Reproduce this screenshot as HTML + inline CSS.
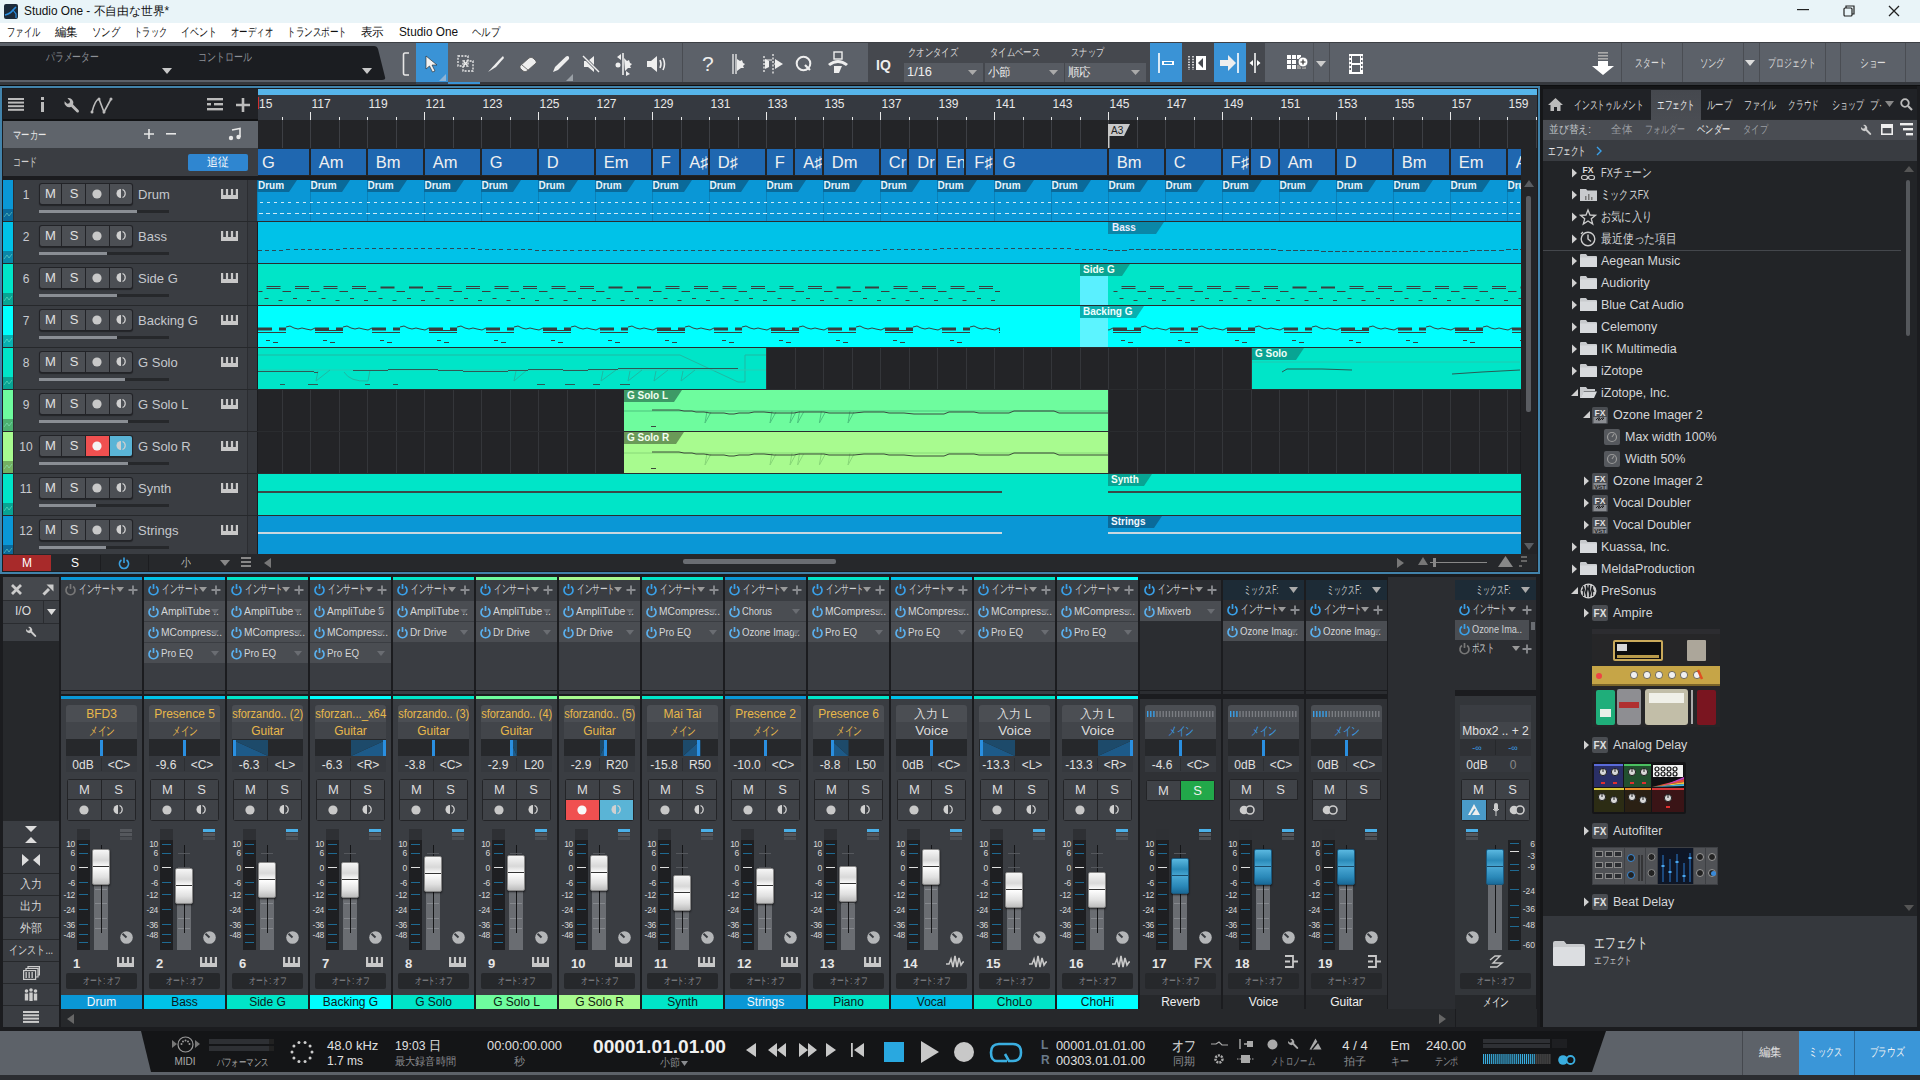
<!DOCTYPE html><html><head><meta charset="utf-8"><style>
html,body{margin:0;padding:0;width:1920px;height:1080px;overflow:hidden;background:#2b2d31;font-family:"Liberation Sans",sans-serif;}
div{position:absolute;box-sizing:border-box;}
.t{white-space:nowrap;line-height:1;}
svg{position:absolute;overflow:visible;}
</style></head><body>
<div style="left:0px;top:0px;width:1920px;height:23px;background:#e9f4f8;"></div>
<div style="left:4px;top:4px;width:14px;height:15px;background:#1d2a3a;border-radius:2px;"></div>
<svg style="left:4px;top:4px" width="14" height="15" viewBox="0 0 14 15"><path d="M1 11 Q6 10 9 6 L12 3" stroke="#2a8ee0" stroke-width="1.6" fill="none"/><path d="M9 6 L12 10 L12 14" stroke="#2a8ee0" stroke-width="1.2" fill="none"/></svg>
<div class="t" style="left:24px;top:5px;font-size:12px;color:#111;transform:scaleX(0.984);transform-origin:0 0;">Studio One - 不自由な世界*</div>
<svg style="left:1797px;top:9px" width="12" height="2" viewBox="0 0 12 2"><rect width="12" height="1.2" fill="#222"/></svg>
<svg style="left:1843px;top:5px" width="12" height="12" viewBox="0 0 12 12"><rect x="1" y="3" width="8" height="8" stroke="#222" fill="none" stroke-width="1.2" rx="1"/><path d="M3 3 V1 H11 V9 H9" stroke="#222" fill="none" stroke-width="1.2"/></svg>
<svg style="left:1888px;top:5px" width="12" height="12" viewBox="0 0 12 12"><path d="M1 1 L11 11 M11 1 L1 11" stroke="#222" stroke-width="1.3"/></svg>
<div style="left:0px;top:23px;width:1920px;height:19px;background:#ffffff;"></div>
<div class="t" style="left:7px;top:26px;font-size:12px;color:#111;transform:scaleX(0.688);transform-origin:0 0;">ファイル</div>
<div class="t" style="left:55px;top:26px;font-size:12px;color:#111;transform:scaleX(0.958);transform-origin:0 0;">編集</div>
<div class="t" style="left:92px;top:26px;font-size:12px;color:#111;transform:scaleX(0.778);transform-origin:0 0;">ソング</div>
<div class="t" style="left:134px;top:26px;font-size:12px;color:#111;transform:scaleX(0.688);transform-origin:0 0;">トラック</div>
<div class="t" style="left:181px;top:26px;font-size:12px;color:#111;transform:scaleX(0.750);transform-origin:0 0;">イベント</div>
<div class="t" style="left:231px;top:26px;font-size:12px;color:#111;transform:scaleX(0.700);transform-origin:0 0;">オーディオ</div>
<div class="t" style="left:287px;top:26px;font-size:12px;color:#111;transform:scaleX(0.714);transform-origin:0 0;">トランスポート</div>
<div class="t" style="left:361px;top:26px;font-size:12px;color:#111;transform:scaleX(0.958);transform-origin:0 0;">表示</div>
<div class="t" style="left:399px;top:26px;font-size:12px;color:#111;transform:scaleX(0.983);transform-origin:0 0;">Studio One</div>
<div class="t" style="left:472px;top:26px;font-size:12px;color:#111;transform:scaleX(0.778);transform-origin:0 0;">ヘルプ</div>
<div style="left:0px;top:42px;width:1920px;height:44px;background:#5c6169;"></div>
<div style="left:0px;top:42px;width:1920px;height:1px;background:#3d4045;"></div>
<div style="left:0px;top:82px;width:1920px;height:3px;background:#35383d;"></div>
<div style="left:0px;top:85px;width:1920px;height:1px;background:#0e0f10;"></div>
<svg style="left:0px;top:46px" width="390" height="34" viewBox="0 0 390 34"><path d="M0 0 H374 Q377 0 378 3 L385 31 Q386 34 382 34 H0 Z" fill="#1b1d21"/></svg>
<div class="t" style="left:46px;top:51px;font-size:12px;color:#8d9096;transform:scaleX(0.736);transform-origin:0 0;">パラメーター</div>
<div class="t" style="left:198px;top:51px;font-size:12px;color:#8d9096;transform:scaleX(0.750);transform-origin:0 0;">コントロール</div>
<svg style="left:162px;top:68px" width="10" height="6" viewBox="0 0 10 6"><path d="M0 0 H10 L5.0 6Z" fill="#c8c8c8"/></svg>
<svg style="left:362px;top:68px" width="10" height="6" viewBox="0 0 10 6"><path d="M0 0 H10 L5.0 6Z" fill="#c8c8c8"/></svg>
<svg style="left:402px;top:52px" width="8" height="24" viewBox="0 0 8 24"><path d="M7 1 H3 Q1.5 1 1.5 3 V21 Q1.5 23 3 23 H7" stroke="#e6e6e6" stroke-width="1.6" fill="none"/></svg>
<div style="left:416px;top:43px;width:32px;height:39px;background:#3a93d6;"></div>
<svg style="left:425px;top:55px" width="14" height="18" viewBox="0 0 14 18"><path d="M1 1 L1 14 L4.5 11 L7.5 17 L10 16 L7 10 L12 10 Z" fill="#f2f2f2" stroke="#222" stroke-width="0.6"/></svg>
<svg style="left:439px;top:74px" width="7" height="7" viewBox="0 0 7 7"><path d="M7 0 V7 H0Z" fill="#8fb4d6"/></svg>
<div style="left:416px;top:82px;width:32px;height:2px;background:#2f4a63;"></div>
<div style="left:448px;top:82px;width:32px;height:2px;background:#3a93d6;"></div>
<svg style="left:457px;top:55px" width="17" height="17" viewBox="0 0 17 17"><rect x="1" y="1" width="10" height="10" stroke="#eee" stroke-width="1.3" stroke-dasharray="2 1.3" fill="none"/><rect x="6" y="6" width="10" height="10" stroke="#eee" stroke-width="1.3" stroke-dasharray="2 1.3" fill="none"/><path d="M7 7 L10 10 M10 7 L7 10" stroke="#eee" stroke-width="1.6"/></svg>
<svg style="left:487px;top:55px" width="18" height="18" viewBox="0 0 18 18"><path d="M1 17 L12 5 L16 1 L17 3 L9 12 Z" fill="#eee"/></svg>
<svg style="left:519px;top:55px" width="18" height="18" viewBox="0 0 18 18"><path d="M1 11 L10 3 Q12 1.5 14 3 L17 6 Q18 8 16 9 L8 16 Q6 17.5 4 16 L1.5 13.5 Q0.5 12 1 11Z" fill="#eee" stroke="#555" stroke-width="0.8"/><path d="M3 10 L9 15" stroke="#777" stroke-width="1"/></svg>
<svg style="left:552px;top:55px" width="18" height="18" viewBox="0 0 18 18"><path d="M1 17 L3 12 L14 1.5 Q16 0.5 17 2 Q17.5 3.5 16.5 4.5 L6 15Z" fill="#eee"/></svg>
<svg style="left:566px;top:74px" width="7" height="7" viewBox="0 0 7 7"><path d="M7 0 V7 H0Z" fill="#9aa0a6"/></svg>
<svg style="left:582px;top:54px" width="18" height="20" viewBox="0 0 18 20"><path d="M2 7 H6 L12 2 V18 L6 13 H2Z" fill="#eee"/><path d="M1 2 L17 18" stroke="#5c6169" stroke-width="3"/><path d="M1 2 L17 18" stroke="#eee" stroke-width="1.4"/></svg>
<svg style="left:612px;top:52px" width="22" height="24" viewBox="0 0 22 24"><path d="M11 1 V23" stroke="#eee" stroke-width="1.6"/><path d="M12 6 L15 9 L17 8 L18 11 L20 12 L18 14 L19 16 L16 16 L13 19 Z" fill="#eee"/><circle cx="6" cy="13" r="2.5" fill="#eee"/><path d="M9 2 L5 5 L9 8Z M14 19 L18 22 L14 24Z" fill="#eee"/></svg>
<svg style="left:646px;top:55px" width="20" height="18" viewBox="0 0 20 18"><path d="M1 6 H5 L11 1 V17 L5 12 H1Z" fill="#eee"/><path d="M14 5 Q16 9 14 13 M17 3 Q20 9 17 15" stroke="#eee" stroke-width="1.6" fill="none"/></svg>
<div style="left:682px;top:43px;width:1px;height:39px;background:#494c52;"></div>
<div class="t" style="left:702px;top:53px;font-size:21px;color:#eee;font-weight:normal;">?</div>
<svg style="left:731px;top:53px" width="20" height="22" viewBox="0 0 20 22"><path d="M2 1 V21 M5 1 V21" stroke="#eee" stroke-width="1.3"/><path d="M6 6 L9 8 L11 7 L12 10 L14 11 L12 13 L13 15 L10 15 L6 18Z" fill="#eee"/></svg>
<svg style="left:761px;top:53px" width="24" height="22" viewBox="0 0 24 22"><path d="M3 3 V19 M12 1 V21" stroke="#eee" stroke-width="1.3" stroke-dasharray="2 1.5"/><path d="M4 7 H11 M13 11 H20" stroke="#eee" stroke-width="1.2"/><path d="M4 6 L8 8 L8 14 L4 16Z M14 6 L22 11 L14 16Z" fill="#eee"/></svg>
<svg style="left:795px;top:55px" width="18" height="18" viewBox="0 0 18 18"><circle cx="8.5" cy="8.5" r="6.8" stroke="#eee" stroke-width="2" fill="none"/><path d="M10 10 L15 15" stroke="#eee" stroke-width="2.2"/></svg>
<svg style="left:827px;top:51px" width="22" height="26" viewBox="0 0 22 26"><rect x="7" y="1" width="8" height="7" stroke="#eee" stroke-width="1.4" fill="none"/><path d="M1 13 Q11 5 21 13 L19 15 Q11 9 3 15Z" fill="#eee"/><path d="M7 15 H15 L12 22 H7Z" fill="#eee"/></svg>
<div style="left:868px;top:43px;width:282px;height:39px;background:#45484e;"></div>
<div class="t" style="left:876px;top:58px;font-size:14px;color:#eee;font-weight:bold;">IQ</div>
<div class="t" style="left:908px;top:47px;font-size:11px;color:#ddd;transform:scaleX(0.758);transform-origin:0 0;">クオンタイズ</div>
<div class="t" style="left:990px;top:47px;font-size:11px;color:#ddd;transform:scaleX(0.758);transform-origin:0 0;">タイムベース</div>
<div class="t" style="left:1071px;top:47px;font-size:11px;color:#ddd;transform:scaleX(0.750);transform-origin:0 0;">スナップ</div>
<div style="left:904px;top:63px;width:79px;height:19px;background:#575b62;"></div>
<div class="t" style="left:907px;top:66px;font-size:12px;color:#eee;transform:scaleX(1.070);transform-origin:0 0;">1/16</div>
<svg style="left:968px;top:70px" width="9" height="5" viewBox="0 0 9 5"><path d="M0 0 H9 L4.5 5Z" fill="#aaa"/></svg>
<div style="left:985px;top:63px;width:79px;height:19px;background:#575b62;"></div>
<div class="t" style="left:988px;top:66px;font-size:12px;color:#eee;transform:scaleX(0.958);transform-origin:0 0;">小節</div>
<svg style="left:1049px;top:70px" width="9" height="5" viewBox="0 0 9 5"><path d="M0 0 H9 L4.5 5Z" fill="#aaa"/></svg>
<div style="left:1065px;top:63px;width:81px;height:19px;background:#575b62;"></div>
<div class="t" style="left:1068px;top:66px;font-size:12px;color:#eee;transform:scaleX(0.958);transform-origin:0 0;">順応</div>
<svg style="left:1131px;top:70px" width="9" height="5" viewBox="0 0 9 5"><path d="M0 0 H9 L4.5 5Z" fill="#aaa"/></svg>
<div style="left:1150px;top:43px;width:32px;height:39px;background:#3a93d6;"></div>
<svg style="left:1157px;top:52px" width="18" height="22" viewBox="0 0 18 22"><path d="M2 1 V21" stroke="#fff" stroke-width="1.6"/><rect x="5" y="9" width="12" height="4" fill="#fff"/><rect x="7" y="10" width="8" height="2" fill="#3a93d6"/></svg>
<div style="left:1182px;top:43px;width:32px;height:39px;background:#45484e;"></div>
<svg style="left:1187px;top:55px" width="20" height="16" viewBox="0 0 20 16"><path d="M2 1 V15 M6 1 V15" stroke="#fff" stroke-width="1.4" stroke-dasharray="1.5 1.2"/><rect x="9" y="1" width="10" height="14" fill="#fff"/><path d="M16 3 L11 8 L16 13Z" fill="#45484e"/></svg>
<div style="left:1214px;top:43px;width:32px;height:39px;background:#3a93d6;"></div>
<svg style="left:1219px;top:52px" width="22" height="22" viewBox="0 0 22 22"><path d="M19 1 V21" stroke="#fff" stroke-width="1.6"/><path d="M1 8 H9 V3 L17 11 L9 19 V14 H1Z" fill="#eee"/></svg>
<div style="left:1246px;top:43px;width:19px;height:39px;background:#45484e;"></div>
<svg style="left:1249px;top:52px" width="12" height="22" viewBox="0 0 12 22"><path d="M6 1 V21" stroke="#fff" stroke-width="1.5"/><path d="M4 8 L0.5 11 L4 14Z M8 8 L11.5 11 L8 14Z" fill="#fff"/></svg>
<svg style="left:1286px;top:54px" width="24" height="18" viewBox="0 0 24 18"><g fill="#fff"><rect x="1" y="1" width="4" height="4"/><rect x="6" y="1" width="4" height="4"/><rect x="11" y="1" width="4" height="4"/><rect x="1" y="6" width="4" height="4"/><rect x="6" y="6" width="4" height="4"/><rect x="1" y="11" width="4" height="4"/><rect x="6" y="11" width="4" height="4"/></g><g fill="#999"><rect x="11" y="11" width="4" height="4"/><rect x="16" y="11" width="4" height="4"/></g><circle cx="17" cy="8" r="5" fill="#fff" stroke="#5c6169" stroke-width="1"/><path d="M17 5.5 V10.5 M14.5 8 H19.5" stroke="#333" stroke-width="1.2"/></svg>
<div style="left:1313px;top:43px;width:1px;height:39px;background:#4e5258;"></div>
<svg style="left:1316px;top:61px" width="10" height="6" viewBox="0 0 10 6"><path d="M0 0 H10 L5.0 6Z" fill="#ccc"/></svg>
<div style="left:1329px;top:43px;width:1px;height:39px;background:#4a4d53;"></div>
<svg style="left:1348px;top:53px" width="16" height="22" viewBox="0 0 16 22"><rect x="1" y="1" width="14" height="20" fill="#fff"/><rect x="4" y="3" width="8" height="7" fill="#5c6169"/><rect x="4" y="12" width="8" height="7" fill="#5c6169"/><g fill="#5c6169"><rect x="1.5" y="3" width="1.5" height="2"/><rect x="1.5" y="7" width="1.5" height="2"/><rect x="1.5" y="11" width="1.5" height="2"/><rect x="1.5" y="15" width="1.5" height="2"/><rect x="13" y="3" width="1.5" height="2"/><rect x="13" y="7" width="1.5" height="2"/><rect x="13" y="11" width="1.5" height="2"/><rect x="13" y="15" width="1.5" height="2"/></g></svg>
<svg style="left:1591px;top:52px" width="24" height="24" viewBox="0 0 24 24"><g fill="#aaa"><rect x="7" y="0" width="10" height="1.6"/><rect x="7" y="3" width="10" height="1.6"/><rect x="7" y="6" width="10" height="1.6"/></g><path d="M7 9 H17 V14 H23 L12 23 L1 14 H7Z" fill="#fff"/></svg>
<div style="left:1621px;top:43px;width:1px;height:39px;background:#4a4d53;"></div>
<div style="left:1682px;top:43px;width:1px;height:39px;background:#4a4d53;"></div>
<div style="left:1743px;top:43px;width:1px;height:39px;background:#4a4d53;"></div>
<div style="left:1759px;top:43px;width:1px;height:39px;background:#4a4d53;"></div>
<div style="left:1825px;top:43px;width:1px;height:39px;background:#4a4d53;"></div>
<div style="left:1840px;top:43px;width:1px;height:39px;background:#4a4d53;"></div>
<div style="left:1905px;top:43px;width:1px;height:39px;background:#4a4d53;"></div>
<div class="t" style="left:1621.0px;top:57px;font-size:12px;color:#ddd;width:48px;left:1627.0px;transform:scaleX(0.646);transform-origin:50% 0;">スタート</div>
<div class="t" style="left:1682.0px;top:57px;font-size:12px;color:#ddd;width:36px;left:1694.0px;transform:scaleX(0.694);transform-origin:50% 0;">ソング</div>
<svg style="left:1745px;top:60px" width="10" height="6" viewBox="0 0 10 6"><path d="M0 0 H10 L5.0 6Z" fill="#ddd"/></svg>
<div class="t" style="left:1759.0px;top:57px;font-size:12px;color:#ddd;width:72px;left:1756.0px;transform:scaleX(0.653);transform-origin:50% 0;">プロジェクト</div>
<div class="t" style="left:1843.0px;top:57px;font-size:12px;color:#ddd;width:36px;left:1855.0px;transform:scaleX(0.722);transform-origin:50% 0;">ショー</div>
<div style="left:0px;top:86px;width:1540px;height:488px;background:#4283ab;"></div>
<div style="left:2px;top:88px;width:1536px;height:484px;background:#1b1c1f;"></div>
<div style="left:3px;top:89px;width:255px;height:30px;background:#202226;"></div>
<svg style="left:8px;top:98px" width="16" height="13" viewBox="0 0 16 13"><g fill="#bbb"><rect y="0" width="16" height="2"/><rect y="3.6" width="16" height="2"/><rect y="7.2" width="16" height="2"/><rect y="10.8" width="16" height="2"/></g></svg>
<svg style="left:41px;top:97px" width="4" height="15" viewBox="0 0 4 15"><rect x="0" y="0" width="3" height="3" fill="#bbb"/><rect x="0" y="5" width="3" height="10" fill="#bbb"/></svg>
<svg style="left:63px;top:97px" width="17" height="17" viewBox="0 0 17 17"><path d="M1.2 3.2 A3.6 3.6 0 0 0 6.2 7.4 L10.3 11.5 Q11.3 12.3 12 11.5 Q12.6 10.7 11.8 9.9 L7.7 5.8 A3.6 3.6 0 0 0 3.4 1 L5.4 3 L4.9 4.7 L3.2 5.2 Z" fill="#bbb" transform="scale(1.308)"/></svg>
<svg style="left:90px;top:97px" width="23" height="17" viewBox="0 0 23 17"><path d="M2 15 Q5 3 9 2 L14 15 L21 2" stroke="#bbb" stroke-width="1.6" fill="none"/><circle cx="2" cy="15" r="1.5" fill="#bbb"/><circle cx="9" cy="2" r="1.5" fill="#bbb"/><circle cx="14" cy="15" r="1.5" fill="#bbb"/><circle cx="21" cy="2" r="1.5" fill="#bbb"/></svg>
<svg style="left:207px;top:98px" width="16" height="13" viewBox="0 0 16 13"><g fill="#bbb"><rect y="0" width="16" height="2.4"/><rect y="5" width="4" height="2.4"/><rect x="7" y="5" width="9" height="2.4"/><rect y="10" width="16" height="2.4"/></g></svg>
<svg style="left:235px;top:97px" width="16" height="16" viewBox="0 0 16 16"><path d="M8 1 V15 M1 8 H15" stroke="#bbb" stroke-width="2.6"/></svg>
<div style="left:3px;top:119px;width:255px;height:2px;background:#111214;"></div>
<div style="left:3px;top:121px;width:255px;height:27px;background:#5f646b;"></div>
<div class="t" style="left:13px;top:129px;font-size:12px;color:#e6e6e6;transform:scaleX(0.688);transform-origin:0 0;">マーカー</div>
<svg style="left:143px;top:128px" width="12" height="12" viewBox="0 0 12 12"><path d="M6 1 V11 M1 6 H11" stroke="#e6e6e6" stroke-width="1.6"/></svg>
<svg style="left:166px;top:133px" width="10" height="2" viewBox="0 0 10 2"><rect width="10" height="1.6" fill="#e6e6e6"/></svg>
<svg style="left:228px;top:128px" width="14" height="12" viewBox="0 0 14 12"><path d="M4 2 L12 0.5 V9" stroke="#e6e6e6" stroke-width="1.6" fill="none"/><circle cx="3" cy="10" r="2.2" fill="#e6e6e6"/><circle cx="10.5" cy="9" r="2.2" fill="#e6e6e6"/></svg>
<div style="left:3px;top:148px;width:255px;height:28px;background:#3a3d42;"></div>
<div class="t" style="left:13px;top:156px;font-size:12px;color:#d0d0d0;transform:scaleX(0.667);transform-origin:0 0;">コード</div>
<div style="left:188px;top:154px;width:60px;height:17px;background:#2f86d0;border-radius:2px;"></div>
<div class="t" style="left:188.0px;top:156px;font-size:12px;color:#fff;width:24px;left:206.0px;transform:scaleX(0.917);transform-origin:50% 0;">追従</div>
<div style="left:3px;top:176px;width:255px;height:4px;background:#1b1c1f;"></div>
<div style="left:258px;top:89px;width:1279px;height:6px;background:#56b5ea;"></div>
<div style="left:258px;top:95px;width:1279px;height:25px;background:#353940;"></div>
<div style="left:258px;top:120px;width:1279px;height:28px;background:#232427;"></div>
<div style="left:258px;top:148px;width:1279px;height:28px;background:#232427;"></div>
<div style="left:281.5px;top:117px;width:1px;height:3px;background:#e8e8e8;"></div>
<div style="left:281.5px;top:120px;width:1px;height:28px;background:#3d3f44;"></div>
<div style="left:310.0px;top:112px;width:1px;height:8px;background:#e8e8e8;"></div>
<div style="left:310.0px;top:120px;width:1px;height:28px;background:#3d3f44;"></div>
<div class="t" style="left:311.5px;top:98px;font-size:12px;color:#e8e8e8;">117</div>
<div style="left:338.5px;top:117px;width:1px;height:3px;background:#e8e8e8;"></div>
<div style="left:338.5px;top:120px;width:1px;height:28px;background:#3d3f44;"></div>
<div style="left:367.0px;top:117px;width:1px;height:3px;background:#e8e8e8;"></div>
<div style="left:367.0px;top:120px;width:1px;height:28px;background:#3d3f44;"></div>
<div class="t" style="left:368.5px;top:98px;font-size:12px;color:#e8e8e8;">119</div>
<div style="left:395.5px;top:117px;width:1px;height:3px;background:#e8e8e8;"></div>
<div style="left:395.5px;top:120px;width:1px;height:28px;background:#3d3f44;"></div>
<div style="left:424.0px;top:112px;width:1px;height:8px;background:#e8e8e8;"></div>
<div style="left:424.0px;top:120px;width:1px;height:28px;background:#3d3f44;"></div>
<div class="t" style="left:425.5px;top:98px;font-size:12px;color:#e8e8e8;">121</div>
<div style="left:452.5px;top:117px;width:1px;height:3px;background:#e8e8e8;"></div>
<div style="left:452.5px;top:120px;width:1px;height:28px;background:#3d3f44;"></div>
<div style="left:481.0px;top:117px;width:1px;height:3px;background:#e8e8e8;"></div>
<div style="left:481.0px;top:120px;width:1px;height:28px;background:#3d3f44;"></div>
<div class="t" style="left:482.5px;top:98px;font-size:12px;color:#e8e8e8;">123</div>
<div style="left:509.5px;top:117px;width:1px;height:3px;background:#e8e8e8;"></div>
<div style="left:509.5px;top:120px;width:1px;height:28px;background:#3d3f44;"></div>
<div style="left:538.0px;top:112px;width:1px;height:8px;background:#e8e8e8;"></div>
<div style="left:538.0px;top:120px;width:1px;height:28px;background:#3d3f44;"></div>
<div class="t" style="left:539.5px;top:98px;font-size:12px;color:#e8e8e8;">125</div>
<div style="left:566.5px;top:117px;width:1px;height:3px;background:#e8e8e8;"></div>
<div style="left:566.5px;top:120px;width:1px;height:28px;background:#3d3f44;"></div>
<div style="left:595.0px;top:117px;width:1px;height:3px;background:#e8e8e8;"></div>
<div style="left:595.0px;top:120px;width:1px;height:28px;background:#3d3f44;"></div>
<div class="t" style="left:596.5px;top:98px;font-size:12px;color:#e8e8e8;">127</div>
<div style="left:623.5px;top:117px;width:1px;height:3px;background:#e8e8e8;"></div>
<div style="left:623.5px;top:120px;width:1px;height:28px;background:#3d3f44;"></div>
<div style="left:652.0px;top:112px;width:1px;height:8px;background:#e8e8e8;"></div>
<div style="left:652.0px;top:120px;width:1px;height:28px;background:#3d3f44;"></div>
<div class="t" style="left:653.5px;top:98px;font-size:12px;color:#e8e8e8;">129</div>
<div style="left:680.5px;top:117px;width:1px;height:3px;background:#e8e8e8;"></div>
<div style="left:680.5px;top:120px;width:1px;height:28px;background:#3d3f44;"></div>
<div style="left:709.0px;top:117px;width:1px;height:3px;background:#e8e8e8;"></div>
<div style="left:709.0px;top:120px;width:1px;height:28px;background:#3d3f44;"></div>
<div class="t" style="left:710.5px;top:98px;font-size:12px;color:#e8e8e8;">131</div>
<div style="left:737.5px;top:117px;width:1px;height:3px;background:#e8e8e8;"></div>
<div style="left:737.5px;top:120px;width:1px;height:28px;background:#3d3f44;"></div>
<div style="left:766.0px;top:112px;width:1px;height:8px;background:#e8e8e8;"></div>
<div style="left:766.0px;top:120px;width:1px;height:28px;background:#3d3f44;"></div>
<div class="t" style="left:767.5px;top:98px;font-size:12px;color:#e8e8e8;">133</div>
<div style="left:794.5px;top:117px;width:1px;height:3px;background:#e8e8e8;"></div>
<div style="left:794.5px;top:120px;width:1px;height:28px;background:#3d3f44;"></div>
<div style="left:823.0px;top:117px;width:1px;height:3px;background:#e8e8e8;"></div>
<div style="left:823.0px;top:120px;width:1px;height:28px;background:#3d3f44;"></div>
<div class="t" style="left:824.5px;top:98px;font-size:12px;color:#e8e8e8;">135</div>
<div style="left:851.5px;top:117px;width:1px;height:3px;background:#e8e8e8;"></div>
<div style="left:851.5px;top:120px;width:1px;height:28px;background:#3d3f44;"></div>
<div style="left:880.0px;top:112px;width:1px;height:8px;background:#e8e8e8;"></div>
<div style="left:880.0px;top:120px;width:1px;height:28px;background:#3d3f44;"></div>
<div class="t" style="left:881.5px;top:98px;font-size:12px;color:#e8e8e8;">137</div>
<div style="left:908.5px;top:117px;width:1px;height:3px;background:#e8e8e8;"></div>
<div style="left:908.5px;top:120px;width:1px;height:28px;background:#3d3f44;"></div>
<div style="left:937.0px;top:117px;width:1px;height:3px;background:#e8e8e8;"></div>
<div style="left:937.0px;top:120px;width:1px;height:28px;background:#3d3f44;"></div>
<div class="t" style="left:938.5px;top:98px;font-size:12px;color:#e8e8e8;">139</div>
<div style="left:965.5px;top:117px;width:1px;height:3px;background:#e8e8e8;"></div>
<div style="left:965.5px;top:120px;width:1px;height:28px;background:#3d3f44;"></div>
<div style="left:994.0px;top:112px;width:1px;height:8px;background:#e8e8e8;"></div>
<div style="left:994.0px;top:120px;width:1px;height:28px;background:#3d3f44;"></div>
<div class="t" style="left:995.5px;top:98px;font-size:12px;color:#e8e8e8;">141</div>
<div style="left:1022.5px;top:117px;width:1px;height:3px;background:#e8e8e8;"></div>
<div style="left:1022.5px;top:120px;width:1px;height:28px;background:#3d3f44;"></div>
<div style="left:1051.0px;top:117px;width:1px;height:3px;background:#e8e8e8;"></div>
<div style="left:1051.0px;top:120px;width:1px;height:28px;background:#3d3f44;"></div>
<div class="t" style="left:1052.5px;top:98px;font-size:12px;color:#e8e8e8;">143</div>
<div style="left:1079.5px;top:117px;width:1px;height:3px;background:#e8e8e8;"></div>
<div style="left:1079.5px;top:120px;width:1px;height:28px;background:#3d3f44;"></div>
<div style="left:1108.0px;top:112px;width:1px;height:8px;background:#e8e8e8;"></div>
<div style="left:1108.0px;top:120px;width:1px;height:28px;background:#3d3f44;"></div>
<div class="t" style="left:1109.5px;top:98px;font-size:12px;color:#e8e8e8;">145</div>
<div style="left:1136.5px;top:117px;width:1px;height:3px;background:#e8e8e8;"></div>
<div style="left:1136.5px;top:120px;width:1px;height:28px;background:#3d3f44;"></div>
<div style="left:1165.0px;top:117px;width:1px;height:3px;background:#e8e8e8;"></div>
<div style="left:1165.0px;top:120px;width:1px;height:28px;background:#3d3f44;"></div>
<div class="t" style="left:1166.5px;top:98px;font-size:12px;color:#e8e8e8;">147</div>
<div style="left:1193.5px;top:117px;width:1px;height:3px;background:#e8e8e8;"></div>
<div style="left:1193.5px;top:120px;width:1px;height:28px;background:#3d3f44;"></div>
<div style="left:1222.0px;top:112px;width:1px;height:8px;background:#e8e8e8;"></div>
<div style="left:1222.0px;top:120px;width:1px;height:28px;background:#3d3f44;"></div>
<div class="t" style="left:1223.5px;top:98px;font-size:12px;color:#e8e8e8;">149</div>
<div style="left:1250.5px;top:117px;width:1px;height:3px;background:#e8e8e8;"></div>
<div style="left:1250.5px;top:120px;width:1px;height:28px;background:#3d3f44;"></div>
<div style="left:1279.0px;top:117px;width:1px;height:3px;background:#e8e8e8;"></div>
<div style="left:1279.0px;top:120px;width:1px;height:28px;background:#3d3f44;"></div>
<div class="t" style="left:1280.5px;top:98px;font-size:12px;color:#e8e8e8;">151</div>
<div style="left:1307.5px;top:117px;width:1px;height:3px;background:#e8e8e8;"></div>
<div style="left:1307.5px;top:120px;width:1px;height:28px;background:#3d3f44;"></div>
<div style="left:1336.0px;top:112px;width:1px;height:8px;background:#e8e8e8;"></div>
<div style="left:1336.0px;top:120px;width:1px;height:28px;background:#3d3f44;"></div>
<div class="t" style="left:1337.5px;top:98px;font-size:12px;color:#e8e8e8;">153</div>
<div style="left:1364.5px;top:117px;width:1px;height:3px;background:#e8e8e8;"></div>
<div style="left:1364.5px;top:120px;width:1px;height:28px;background:#3d3f44;"></div>
<div style="left:1393.0px;top:117px;width:1px;height:3px;background:#e8e8e8;"></div>
<div style="left:1393.0px;top:120px;width:1px;height:28px;background:#3d3f44;"></div>
<div class="t" style="left:1394.5px;top:98px;font-size:12px;color:#e8e8e8;">155</div>
<div style="left:1421.5px;top:117px;width:1px;height:3px;background:#e8e8e8;"></div>
<div style="left:1421.5px;top:120px;width:1px;height:28px;background:#3d3f44;"></div>
<div style="left:1450.0px;top:112px;width:1px;height:8px;background:#e8e8e8;"></div>
<div style="left:1450.0px;top:120px;width:1px;height:28px;background:#3d3f44;"></div>
<div class="t" style="left:1451.5px;top:98px;font-size:12px;color:#e8e8e8;">157</div>
<div style="left:1478.5px;top:117px;width:1px;height:3px;background:#e8e8e8;"></div>
<div style="left:1478.5px;top:120px;width:1px;height:28px;background:#3d3f44;"></div>
<div style="left:1507.0px;top:117px;width:1px;height:3px;background:#e8e8e8;"></div>
<div style="left:1507.0px;top:120px;width:1px;height:28px;background:#3d3f44;"></div>
<div class="t" style="left:1508.5px;top:98px;font-size:12px;color:#e8e8e8;">159</div>
<div style="left:1535.5px;top:117px;width:1px;height:3px;background:#e8e8e8;"></div>
<div style="left:1535.5px;top:120px;width:1px;height:28px;background:#3d3f44;"></div>
<div class="t" style="left:259px;top:98px;font-size:12px;color:#e8e8e8;">15</div>
<div style="left:258px;top:97px;width:1px;height:12px;background:#d03030;"></div>
<svg style="left:1108px;top:122px" width="30" height="26" viewBox="0 0 30 26"><path d="M1 2 H22 L16 14 H1Z" fill="#c8c8c8"/><rect x="0" y="2" width="1.5" height="24" fill="#c8c8c8"/></svg>
<div class="t" style="left:1111px;top:126px;font-size:10px;color:#222;">A3</div>
<div style="left:258px;top:149px;width:51.0px;height:26px;background:#1f67b0;overflow:hidden;"><div class="t" style="left:4px;top:5px;font-size:16.5px;color:#f0f0f0;">G</div></div>
<div style="left:310.8px;top:149px;width:55.19999999999999px;height:26px;background:#1f67b0;overflow:hidden;"><div class="t" style="left:8px;top:5px;font-size:16.5px;color:#f0f0f0;">Am</div></div>
<div style="left:367.8px;top:149px;width:55.19999999999999px;height:26px;background:#1f67b0;overflow:hidden;"><div class="t" style="left:8px;top:5px;font-size:16.5px;color:#f0f0f0;">Bm</div></div>
<div style="left:424.8px;top:149px;width:55.19999999999999px;height:26px;background:#1f67b0;overflow:hidden;"><div class="t" style="left:8px;top:5px;font-size:16.5px;color:#f0f0f0;">Am</div></div>
<div style="left:481.8px;top:149px;width:55.19999999999999px;height:26px;background:#1f67b0;overflow:hidden;"><div class="t" style="left:8px;top:5px;font-size:16.5px;color:#f0f0f0;">G</div></div>
<div style="left:538.8px;top:149px;width:55.200000000000045px;height:26px;background:#1f67b0;overflow:hidden;"><div class="t" style="left:8px;top:5px;font-size:16.5px;color:#f0f0f0;">D</div></div>
<div style="left:595.8px;top:149px;width:55.200000000000045px;height:26px;background:#1f67b0;overflow:hidden;"><div class="t" style="left:8px;top:5px;font-size:16.5px;color:#f0f0f0;">Em</div></div>
<div style="left:652.8px;top:149px;width:26.700000000000045px;height:26px;background:#1f67b0;overflow:hidden;"><div class="t" style="left:8px;top:5px;font-size:16.5px;color:#f0f0f0;">F</div></div>
<div style="left:681.3px;top:149px;width:26.700000000000045px;height:26px;background:#1f67b0;overflow:hidden;"><div class="t" style="left:8px;top:5px;font-size:16.5px;color:#f0f0f0;">A♯</div></div>
<div style="left:709.8px;top:149px;width:55.200000000000045px;height:26px;background:#1f67b0;overflow:hidden;"><div class="t" style="left:8px;top:5px;font-size:16.5px;color:#f0f0f0;">D♯</div></div>
<div style="left:766.8px;top:149px;width:26.700000000000045px;height:26px;background:#1f67b0;overflow:hidden;"><div class="t" style="left:8px;top:5px;font-size:16.5px;color:#f0f0f0;">F</div></div>
<div style="left:795.3px;top:149px;width:26.700000000000045px;height:26px;background:#1f67b0;overflow:hidden;"><div class="t" style="left:8px;top:5px;font-size:16.5px;color:#f0f0f0;">A♯</div></div>
<div style="left:823.8px;top:149px;width:55.200000000000045px;height:26px;background:#1f67b0;overflow:hidden;"><div class="t" style="left:8px;top:5px;font-size:16.5px;color:#f0f0f0;">Dm</div></div>
<div style="left:880.8px;top:149px;width:26.700000000000045px;height:26px;background:#1f67b0;overflow:hidden;"><div class="t" style="left:8px;top:5px;font-size:16.5px;color:#f0f0f0;">Cr</div></div>
<div style="left:909.3px;top:149px;width:26.700000000000045px;height:26px;background:#1f67b0;overflow:hidden;"><div class="t" style="left:8px;top:5px;font-size:16.5px;color:#f0f0f0;">Dr</div></div>
<div style="left:937.8px;top:149px;width:26.700000000000045px;height:26px;background:#1f67b0;overflow:hidden;"><div class="t" style="left:8px;top:5px;font-size:16.5px;color:#f0f0f0;">En</div></div>
<div style="left:966.3px;top:149px;width:26.700000000000045px;height:26px;background:#1f67b0;overflow:hidden;"><div class="t" style="left:8px;top:5px;font-size:16.5px;color:#f0f0f0;">F♯</div></div>
<div style="left:994.8px;top:149px;width:112.20000000000005px;height:26px;background:#1f67b0;overflow:hidden;"><div class="t" style="left:8px;top:5px;font-size:16.5px;color:#f0f0f0;">G</div></div>
<div style="left:1108.8px;top:149px;width:55.200000000000045px;height:26px;background:#1f67b0;overflow:hidden;"><div class="t" style="left:8px;top:5px;font-size:16.5px;color:#f0f0f0;">Bm</div></div>
<div style="left:1165.8px;top:149px;width:55.200000000000045px;height:26px;background:#1f67b0;overflow:hidden;"><div class="t" style="left:8px;top:5px;font-size:16.5px;color:#f0f0f0;">C</div></div>
<div style="left:1222.8px;top:149px;width:26.700000000000045px;height:26px;background:#1f67b0;overflow:hidden;"><div class="t" style="left:8px;top:5px;font-size:16.5px;color:#f0f0f0;">F♯</div></div>
<div style="left:1251.3px;top:149px;width:26.700000000000045px;height:26px;background:#1f67b0;overflow:hidden;"><div class="t" style="left:8px;top:5px;font-size:16.5px;color:#f0f0f0;">D</div></div>
<div style="left:1279.8px;top:149px;width:55.200000000000045px;height:26px;background:#1f67b0;overflow:hidden;"><div class="t" style="left:8px;top:5px;font-size:16.5px;color:#f0f0f0;">Am</div></div>
<div style="left:1336.8px;top:149px;width:55.200000000000045px;height:26px;background:#1f67b0;overflow:hidden;"><div class="t" style="left:8px;top:5px;font-size:16.5px;color:#f0f0f0;">D</div></div>
<div style="left:1393.8px;top:149px;width:55.200000000000045px;height:26px;background:#1f67b0;overflow:hidden;"><div class="t" style="left:8px;top:5px;font-size:16.5px;color:#f0f0f0;">Bm</div></div>
<div style="left:1450.8px;top:149px;width:55.200000000000045px;height:26px;background:#1f67b0;overflow:hidden;"><div class="t" style="left:8px;top:5px;font-size:16.5px;color:#f0f0f0;">Em</div></div>
<div style="left:1507.8px;top:149px;width:13.200000000000045px;height:26px;background:#1f67b0;overflow:hidden;"><div class="t" style="left:8px;top:5px;font-size:16.5px;color:#f0f0f0;">A</div></div>
<div style="left:3px;top:180px;width:10px;height:41px;background:#0a97d6;"></div>
<div style="left:3px;top:209px;width:10px;height:12px;background:#0a6a9a;"></div>
<svg style="left:4px;top:212px" width="8" height="6" viewBox="0 0 8 6"><path d="M0 5 L3 1 L5 4 L8 0" stroke="#9fd" stroke-opacity="0.5" stroke-width="0.8" fill="none"/></svg>
<div style="left:13px;top:180px;width:1px;height:41px;background:#2a2c30;"></div>
<div style="left:14px;top:180px;width:233px;height:41px;background:#3a3d42;"></div>
<div style="left:247px;top:180px;width:1px;height:41px;background:#2b2d31;"></div>
<div style="left:248px;top:180px;width:9px;height:41px;background:#36393e;"></div>
<div style="left:257px;top:180px;width:1px;height:41px;background:#1b1c1f;"></div>
<div style="left:3px;top:221px;width:255px;height:1px;background:#26282b;"></div>
<div class="t" style="left:11.0px;top:189px;font-size:12px;color:#c8cad0;width:30px;text-align:center;">1</div>
<div style="left:38.5px;top:182.5px;width:94px;height:22px;background:#222327;border-radius:3px;box-shadow:0 1px 1px rgba(0,0,0,.4);"></div>
<div style="left:39.5px;top:183.5px;width:21.5px;height:20px;background:#4c4f54;border-radius:2px 0 0 2px;"></div>
<div style="left:62px;top:183.5px;width:23px;height:20px;background:#4c4f54;"></div>
<div style="left:86px;top:183.5px;width:23px;height:20px;background:#4c4f54;"></div>
<div style="left:110px;top:183.5px;width:21.5px;height:20px;background:#4c4f54;border-radius:0 2px 2px 0;"></div>
<div class="t" style="left:40.5px;top:187px;font-size:13px;color:#e0e0e0;width:20px;text-align:center;">M</div>
<div class="t" style="left:64.0px;top:187px;font-size:13px;color:#e0e0e0;width:20px;text-align:center;">S</div>
<svg style="left:92px;top:189px" width="10" height="10" viewBox="0 0 10 10"><circle cx="5" cy="5" r="4.6" fill="#c8c8c8"/></svg>
<svg style="left:116px;top:188px" width="10" height="11" viewBox="0 0 10 11"><path d="M5 1 A4.5 4.5 0 0 0 5 10Z" fill="#d0d0d0"/><path d="M6.5 1.5 A4.3 4.3 0 0 1 6.5 9.5" stroke="#d0d0d0" stroke-width="1.2" fill="none"/></svg>
<div class="t" style="left:138px;top:188px;font-size:13px;color:#c5c8cd;">Drum</div>
<div style="left:39px;top:210px;width:130px;height:3px;background:#26282b;"></div>
<div style="left:39px;top:210px;width:98px;height:3px;background:#8a8e94;"></div>
<svg style="left:221px;top:189px" width="17" height="10" viewBox="0 0 17 10"><path d="M0 0 H2.2 V6 H4.9 V0 H7.1 V6 H9.9 V0 H12.1 V6 H14.8 V0 H17 V10 H0Z" fill="#c8c8c8"/></svg>
<div style="left:3px;top:222px;width:10px;height:41px;background:#00c2e8;"></div>
<div style="left:3px;top:251px;width:10px;height:12px;background:#0a87a8;"></div>
<svg style="left:4px;top:254px" width="8" height="6" viewBox="0 0 8 6"><path d="M0 5 L3 1 L5 4 L8 0" stroke="#9fd" stroke-opacity="0.5" stroke-width="0.8" fill="none"/></svg>
<div style="left:13px;top:222px;width:1px;height:41px;background:#2a2c30;"></div>
<div style="left:14px;top:222px;width:233px;height:41px;background:#3a3d42;"></div>
<div style="left:247px;top:222px;width:1px;height:41px;background:#2b2d31;"></div>
<div style="left:248px;top:222px;width:9px;height:41px;background:#36393e;"></div>
<div style="left:257px;top:222px;width:1px;height:41px;background:#1b1c1f;"></div>
<div style="left:3px;top:263px;width:255px;height:1px;background:#26282b;"></div>
<div class="t" style="left:11.0px;top:231px;font-size:12px;color:#c8cad0;width:30px;text-align:center;">2</div>
<div style="left:38.5px;top:224.5px;width:94px;height:22px;background:#222327;border-radius:3px;box-shadow:0 1px 1px rgba(0,0,0,.4);"></div>
<div style="left:39.5px;top:225.5px;width:21.5px;height:20px;background:#4c4f54;border-radius:2px 0 0 2px;"></div>
<div style="left:62px;top:225.5px;width:23px;height:20px;background:#4c4f54;"></div>
<div style="left:86px;top:225.5px;width:23px;height:20px;background:#4c4f54;"></div>
<div style="left:110px;top:225.5px;width:21.5px;height:20px;background:#4c4f54;border-radius:0 2px 2px 0;"></div>
<div class="t" style="left:40.5px;top:229px;font-size:13px;color:#e0e0e0;width:20px;text-align:center;">M</div>
<div class="t" style="left:64.0px;top:229px;font-size:13px;color:#e0e0e0;width:20px;text-align:center;">S</div>
<svg style="left:92px;top:231px" width="10" height="10" viewBox="0 0 10 10"><circle cx="5" cy="5" r="4.6" fill="#c8c8c8"/></svg>
<svg style="left:116px;top:230px" width="10" height="11" viewBox="0 0 10 11"><path d="M5 1 A4.5 4.5 0 0 0 5 10Z" fill="#d0d0d0"/><path d="M6.5 1.5 A4.3 4.3 0 0 1 6.5 9.5" stroke="#d0d0d0" stroke-width="1.2" fill="none"/></svg>
<div class="t" style="left:138px;top:230px;font-size:13px;color:#c5c8cd;">Bass</div>
<div style="left:39px;top:252px;width:130px;height:3px;background:#26282b;"></div>
<div style="left:39px;top:252px;width:68px;height:3px;background:#8a8e94;"></div>
<svg style="left:221px;top:231px" width="17" height="10" viewBox="0 0 17 10"><path d="M0 0 H2.2 V6 H4.9 V0 H7.1 V6 H9.9 V0 H12.1 V6 H14.8 V0 H17 V10 H0Z" fill="#c8c8c8"/></svg>
<div style="left:3px;top:264px;width:10px;height:41px;background:#00e5c8;"></div>
<div style="left:3px;top:293px;width:10px;height:12px;background:#08a493;"></div>
<svg style="left:4px;top:296px" width="8" height="6" viewBox="0 0 8 6"><path d="M0 5 L3 1 L5 4 L8 0" stroke="#9fd" stroke-opacity="0.5" stroke-width="0.8" fill="none"/></svg>
<div style="left:13px;top:264px;width:1px;height:41px;background:#2a2c30;"></div>
<div style="left:14px;top:264px;width:233px;height:41px;background:#3a3d42;"></div>
<div style="left:247px;top:264px;width:1px;height:41px;background:#2b2d31;"></div>
<div style="left:248px;top:264px;width:9px;height:41px;background:#36393e;"></div>
<div style="left:257px;top:264px;width:1px;height:41px;background:#1b1c1f;"></div>
<div style="left:3px;top:305px;width:255px;height:1px;background:#26282b;"></div>
<div class="t" style="left:11.0px;top:273px;font-size:12px;color:#c8cad0;width:30px;text-align:center;">6</div>
<div style="left:38.5px;top:266.5px;width:94px;height:22px;background:#222327;border-radius:3px;box-shadow:0 1px 1px rgba(0,0,0,.4);"></div>
<div style="left:39.5px;top:267.5px;width:21.5px;height:20px;background:#4c4f54;border-radius:2px 0 0 2px;"></div>
<div style="left:62px;top:267.5px;width:23px;height:20px;background:#4c4f54;"></div>
<div style="left:86px;top:267.5px;width:23px;height:20px;background:#4c4f54;"></div>
<div style="left:110px;top:267.5px;width:21.5px;height:20px;background:#4c4f54;border-radius:0 2px 2px 0;"></div>
<div class="t" style="left:40.5px;top:271px;font-size:13px;color:#e0e0e0;width:20px;text-align:center;">M</div>
<div class="t" style="left:64.0px;top:271px;font-size:13px;color:#e0e0e0;width:20px;text-align:center;">S</div>
<svg style="left:92px;top:273px" width="10" height="10" viewBox="0 0 10 10"><circle cx="5" cy="5" r="4.6" fill="#c8c8c8"/></svg>
<svg style="left:116px;top:272px" width="10" height="11" viewBox="0 0 10 11"><path d="M5 1 A4.5 4.5 0 0 0 5 10Z" fill="#d0d0d0"/><path d="M6.5 1.5 A4.3 4.3 0 0 1 6.5 9.5" stroke="#d0d0d0" stroke-width="1.2" fill="none"/></svg>
<div class="t" style="left:138px;top:272px;font-size:13px;color:#c5c8cd;">Side G</div>
<div style="left:39px;top:294px;width:130px;height:3px;background:#26282b;"></div>
<div style="left:39px;top:294px;width:78px;height:3px;background:#8a8e94;"></div>
<svg style="left:221px;top:273px" width="17" height="10" viewBox="0 0 17 10"><path d="M0 0 H2.2 V6 H4.9 V0 H7.1 V6 H9.9 V0 H12.1 V6 H14.8 V0 H17 V10 H0Z" fill="#c8c8c8"/></svg>
<div style="left:3px;top:306px;width:10px;height:41px;background:#00ffff;"></div>
<div style="left:3px;top:335px;width:10px;height:12px;background:#08b0b0;"></div>
<svg style="left:4px;top:338px" width="8" height="6" viewBox="0 0 8 6"><path d="M0 5 L3 1 L5 4 L8 0" stroke="#9fd" stroke-opacity="0.5" stroke-width="0.8" fill="none"/></svg>
<div style="left:13px;top:306px;width:1px;height:41px;background:#2a2c30;"></div>
<div style="left:14px;top:306px;width:233px;height:41px;background:#3a3d42;"></div>
<div style="left:247px;top:306px;width:1px;height:41px;background:#2b2d31;"></div>
<div style="left:248px;top:306px;width:9px;height:41px;background:#36393e;"></div>
<div style="left:257px;top:306px;width:1px;height:41px;background:#1b1c1f;"></div>
<div style="left:3px;top:347px;width:255px;height:1px;background:#26282b;"></div>
<div class="t" style="left:11.0px;top:315px;font-size:12px;color:#c8cad0;width:30px;text-align:center;">7</div>
<div style="left:38.5px;top:308.5px;width:94px;height:22px;background:#222327;border-radius:3px;box-shadow:0 1px 1px rgba(0,0,0,.4);"></div>
<div style="left:39.5px;top:309.5px;width:21.5px;height:20px;background:#4c4f54;border-radius:2px 0 0 2px;"></div>
<div style="left:62px;top:309.5px;width:23px;height:20px;background:#4c4f54;"></div>
<div style="left:86px;top:309.5px;width:23px;height:20px;background:#4c4f54;"></div>
<div style="left:110px;top:309.5px;width:21.5px;height:20px;background:#4c4f54;border-radius:0 2px 2px 0;"></div>
<div class="t" style="left:40.5px;top:313px;font-size:13px;color:#e0e0e0;width:20px;text-align:center;">M</div>
<div class="t" style="left:64.0px;top:313px;font-size:13px;color:#e0e0e0;width:20px;text-align:center;">S</div>
<svg style="left:92px;top:315px" width="10" height="10" viewBox="0 0 10 10"><circle cx="5" cy="5" r="4.6" fill="#c8c8c8"/></svg>
<svg style="left:116px;top:314px" width="10" height="11" viewBox="0 0 10 11"><path d="M5 1 A4.5 4.5 0 0 0 5 10Z" fill="#d0d0d0"/><path d="M6.5 1.5 A4.3 4.3 0 0 1 6.5 9.5" stroke="#d0d0d0" stroke-width="1.2" fill="none"/></svg>
<div class="t" style="left:138px;top:314px;font-size:13px;color:#c5c8cd;">Backing G</div>
<div style="left:39px;top:336px;width:130px;height:3px;background:#26282b;"></div>
<div style="left:39px;top:336px;width:78px;height:3px;background:#8a8e94;"></div>
<svg style="left:221px;top:315px" width="17" height="10" viewBox="0 0 17 10"><path d="M0 0 H2.2 V6 H4.9 V0 H7.1 V6 H9.9 V0 H12.1 V6 H14.8 V0 H17 V10 H0Z" fill="#c8c8c8"/></svg>
<div style="left:3px;top:348px;width:10px;height:41px;background:#00e5c8;"></div>
<div style="left:3px;top:377px;width:10px;height:12px;background:#08a493;"></div>
<svg style="left:4px;top:380px" width="8" height="6" viewBox="0 0 8 6"><path d="M0 5 L3 1 L5 4 L8 0" stroke="#9fd" stroke-opacity="0.5" stroke-width="0.8" fill="none"/></svg>
<div style="left:13px;top:348px;width:1px;height:41px;background:#2a2c30;"></div>
<div style="left:14px;top:348px;width:233px;height:41px;background:#3a3d42;"></div>
<div style="left:247px;top:348px;width:1px;height:41px;background:#2b2d31;"></div>
<div style="left:248px;top:348px;width:9px;height:41px;background:#36393e;"></div>
<div style="left:257px;top:348px;width:1px;height:41px;background:#1b1c1f;"></div>
<div style="left:3px;top:389px;width:255px;height:1px;background:#26282b;"></div>
<div class="t" style="left:11.0px;top:357px;font-size:12px;color:#c8cad0;width:30px;text-align:center;">8</div>
<div style="left:38.5px;top:350.5px;width:94px;height:22px;background:#222327;border-radius:3px;box-shadow:0 1px 1px rgba(0,0,0,.4);"></div>
<div style="left:39.5px;top:351.5px;width:21.5px;height:20px;background:#4c4f54;border-radius:2px 0 0 2px;"></div>
<div style="left:62px;top:351.5px;width:23px;height:20px;background:#4c4f54;"></div>
<div style="left:86px;top:351.5px;width:23px;height:20px;background:#4c4f54;"></div>
<div style="left:110px;top:351.5px;width:21.5px;height:20px;background:#4c4f54;border-radius:0 2px 2px 0;"></div>
<div class="t" style="left:40.5px;top:355px;font-size:13px;color:#e0e0e0;width:20px;text-align:center;">M</div>
<div class="t" style="left:64.0px;top:355px;font-size:13px;color:#e0e0e0;width:20px;text-align:center;">S</div>
<svg style="left:92px;top:357px" width="10" height="10" viewBox="0 0 10 10"><circle cx="5" cy="5" r="4.6" fill="#c8c8c8"/></svg>
<svg style="left:116px;top:356px" width="10" height="11" viewBox="0 0 10 11"><path d="M5 1 A4.5 4.5 0 0 0 5 10Z" fill="#d0d0d0"/><path d="M6.5 1.5 A4.3 4.3 0 0 1 6.5 9.5" stroke="#d0d0d0" stroke-width="1.2" fill="none"/></svg>
<div class="t" style="left:138px;top:356px;font-size:13px;color:#c5c8cd;">G Solo</div>
<div style="left:39px;top:378px;width:130px;height:3px;background:#26282b;"></div>
<div style="left:39px;top:378px;width:86px;height:3px;background:#8a8e94;"></div>
<svg style="left:221px;top:357px" width="17" height="10" viewBox="0 0 17 10"><path d="M0 0 H2.2 V6 H4.9 V0 H7.1 V6 H9.9 V0 H12.1 V6 H14.8 V0 H17 V10 H0Z" fill="#c8c8c8"/></svg>
<div style="left:3px;top:390px;width:10px;height:41px;background:#6efc9e;"></div>
<div style="left:3px;top:419px;width:10px;height:12px;background:#4cb070;"></div>
<svg style="left:4px;top:422px" width="8" height="6" viewBox="0 0 8 6"><path d="M0 5 L3 1 L5 4 L8 0" stroke="#9fd" stroke-opacity="0.5" stroke-width="0.8" fill="none"/></svg>
<div style="left:13px;top:390px;width:1px;height:41px;background:#2a2c30;"></div>
<div style="left:14px;top:390px;width:233px;height:41px;background:#3a3d42;"></div>
<div style="left:247px;top:390px;width:1px;height:41px;background:#2b2d31;"></div>
<div style="left:248px;top:390px;width:9px;height:41px;background:#36393e;"></div>
<div style="left:257px;top:390px;width:1px;height:41px;background:#1b1c1f;"></div>
<div style="left:3px;top:431px;width:255px;height:1px;background:#26282b;"></div>
<div class="t" style="left:11.0px;top:399px;font-size:12px;color:#c8cad0;width:30px;text-align:center;">9</div>
<div style="left:38.5px;top:392.5px;width:94px;height:22px;background:#222327;border-radius:3px;box-shadow:0 1px 1px rgba(0,0,0,.4);"></div>
<div style="left:39.5px;top:393.5px;width:21.5px;height:20px;background:#4c4f54;border-radius:2px 0 0 2px;"></div>
<div style="left:62px;top:393.5px;width:23px;height:20px;background:#4c4f54;"></div>
<div style="left:86px;top:393.5px;width:23px;height:20px;background:#4c4f54;"></div>
<div style="left:110px;top:393.5px;width:21.5px;height:20px;background:#4c4f54;border-radius:0 2px 2px 0;"></div>
<div class="t" style="left:40.5px;top:397px;font-size:13px;color:#e0e0e0;width:20px;text-align:center;">M</div>
<div class="t" style="left:64.0px;top:397px;font-size:13px;color:#e0e0e0;width:20px;text-align:center;">S</div>
<svg style="left:92px;top:399px" width="10" height="10" viewBox="0 0 10 10"><circle cx="5" cy="5" r="4.6" fill="#c8c8c8"/></svg>
<svg style="left:116px;top:398px" width="10" height="11" viewBox="0 0 10 11"><path d="M5 1 A4.5 4.5 0 0 0 5 10Z" fill="#d0d0d0"/><path d="M6.5 1.5 A4.3 4.3 0 0 1 6.5 9.5" stroke="#d0d0d0" stroke-width="1.2" fill="none"/></svg>
<div class="t" style="left:138px;top:398px;font-size:13px;color:#c5c8cd;">G Solo L</div>
<div style="left:39px;top:420px;width:130px;height:3px;background:#26282b;"></div>
<div style="left:39px;top:420px;width:89px;height:3px;background:#8a8e94;"></div>
<svg style="left:221px;top:399px" width="17" height="10" viewBox="0 0 17 10"><path d="M0 0 H2.2 V6 H4.9 V0 H7.1 V6 H9.9 V0 H12.1 V6 H14.8 V0 H17 V10 H0Z" fill="#c8c8c8"/></svg>
<div style="left:3px;top:432px;width:10px;height:41px;background:#a8fb8f;"></div>
<div style="left:3px;top:461px;width:10px;height:12px;background:#74b062;"></div>
<svg style="left:4px;top:464px" width="8" height="6" viewBox="0 0 8 6"><path d="M0 5 L3 1 L5 4 L8 0" stroke="#9fd" stroke-opacity="0.5" stroke-width="0.8" fill="none"/></svg>
<div style="left:13px;top:432px;width:1px;height:41px;background:#2a2c30;"></div>
<div style="left:14px;top:432px;width:233px;height:41px;background:#3a3d42;"></div>
<div style="left:247px;top:432px;width:1px;height:41px;background:#2b2d31;"></div>
<div style="left:248px;top:432px;width:9px;height:41px;background:#36393e;"></div>
<div style="left:257px;top:432px;width:1px;height:41px;background:#1b1c1f;"></div>
<div style="left:3px;top:473px;width:255px;height:1px;background:#26282b;"></div>
<div class="t" style="left:11.0px;top:441px;font-size:12px;color:#c8cad0;width:30px;text-align:center;">10</div>
<div style="left:38.5px;top:434.5px;width:94px;height:22px;background:#222327;border-radius:3px;box-shadow:0 1px 1px rgba(0,0,0,.4);"></div>
<div style="left:39.5px;top:435.5px;width:21.5px;height:20px;background:#4c4f54;border-radius:2px 0 0 2px;"></div>
<div style="left:62px;top:435.5px;width:23px;height:20px;background:#4c4f54;"></div>
<div style="left:86px;top:435.5px;width:23px;height:20px;background:#f05050;"></div>
<div style="left:110px;top:435.5px;width:21.5px;height:20px;background:#5ab4d6;border-radius:0 2px 2px 0;"></div>
<div class="t" style="left:40.5px;top:439px;font-size:13px;color:#e0e0e0;width:20px;text-align:center;">M</div>
<div class="t" style="left:64.0px;top:439px;font-size:13px;color:#e0e0e0;width:20px;text-align:center;">S</div>
<svg style="left:92px;top:441px" width="10" height="10" viewBox="0 0 10 10"><circle cx="5" cy="5" r="4.6" fill="#f4f4f4"/></svg>
<svg style="left:116px;top:440px" width="10" height="11" viewBox="0 0 10 11"><path d="M5 1 A4.5 4.5 0 0 0 5 10Z" fill="#d0d0d0"/><path d="M6.5 1.5 A4.3 4.3 0 0 1 6.5 9.5" stroke="#d0d0d0" stroke-width="1.2" fill="none"/></svg>
<div class="t" style="left:138px;top:440px;font-size:13px;color:#c5c8cd;">G Solo R</div>
<div style="left:39px;top:462px;width:130px;height:3px;background:#26282b;"></div>
<div style="left:39px;top:462px;width:89px;height:3px;background:#8a8e94;"></div>
<svg style="left:221px;top:441px" width="17" height="10" viewBox="0 0 17 10"><path d="M0 0 H2.2 V6 H4.9 V0 H7.1 V6 H9.9 V0 H12.1 V6 H14.8 V0 H17 V10 H0Z" fill="#c8c8c8"/></svg>
<div style="left:3px;top:474px;width:10px;height:41px;background:#00e5c8;"></div>
<div style="left:3px;top:503px;width:10px;height:12px;background:#08a493;"></div>
<svg style="left:4px;top:506px" width="8" height="6" viewBox="0 0 8 6"><path d="M0 5 L3 1 L5 4 L8 0" stroke="#9fd" stroke-opacity="0.5" stroke-width="0.8" fill="none"/></svg>
<div style="left:13px;top:474px;width:1px;height:41px;background:#2a2c30;"></div>
<div style="left:14px;top:474px;width:233px;height:41px;background:#3a3d42;"></div>
<div style="left:247px;top:474px;width:1px;height:41px;background:#2b2d31;"></div>
<div style="left:248px;top:474px;width:9px;height:41px;background:#36393e;"></div>
<div style="left:257px;top:474px;width:1px;height:41px;background:#1b1c1f;"></div>
<div style="left:3px;top:515px;width:255px;height:1px;background:#26282b;"></div>
<div class="t" style="left:11.0px;top:483px;font-size:12px;color:#c8cad0;width:30px;text-align:center;">11</div>
<div style="left:38.5px;top:476.5px;width:94px;height:22px;background:#222327;border-radius:3px;box-shadow:0 1px 1px rgba(0,0,0,.4);"></div>
<div style="left:39.5px;top:477.5px;width:21.5px;height:20px;background:#4c4f54;border-radius:2px 0 0 2px;"></div>
<div style="left:62px;top:477.5px;width:23px;height:20px;background:#4c4f54;"></div>
<div style="left:86px;top:477.5px;width:23px;height:20px;background:#4c4f54;"></div>
<div style="left:110px;top:477.5px;width:21.5px;height:20px;background:#4c4f54;border-radius:0 2px 2px 0;"></div>
<div class="t" style="left:40.5px;top:481px;font-size:13px;color:#e0e0e0;width:20px;text-align:center;">M</div>
<div class="t" style="left:64.0px;top:481px;font-size:13px;color:#e0e0e0;width:20px;text-align:center;">S</div>
<svg style="left:92px;top:483px" width="10" height="10" viewBox="0 0 10 10"><circle cx="5" cy="5" r="4.6" fill="#c8c8c8"/></svg>
<svg style="left:116px;top:482px" width="10" height="11" viewBox="0 0 10 11"><path d="M5 1 A4.5 4.5 0 0 0 5 10Z" fill="#d0d0d0"/><path d="M6.5 1.5 A4.3 4.3 0 0 1 6.5 9.5" stroke="#d0d0d0" stroke-width="1.2" fill="none"/></svg>
<div class="t" style="left:138px;top:482px;font-size:13px;color:#c5c8cd;">Synth</div>
<div style="left:39px;top:504px;width:130px;height:3px;background:#26282b;"></div>
<div style="left:39px;top:504px;width:57px;height:3px;background:#8a8e94;"></div>
<svg style="left:221px;top:483px" width="17" height="10" viewBox="0 0 17 10"><path d="M0 0 H2.2 V6 H4.9 V0 H7.1 V6 H9.9 V0 H12.1 V6 H14.8 V0 H17 V10 H0Z" fill="#c8c8c8"/></svg>
<div style="left:3px;top:516px;width:10px;height:38px;background:#0a97d6;"></div>
<div style="left:3px;top:545px;width:10px;height:9px;background:#0a6a9a;"></div>
<svg style="left:4px;top:548px" width="8" height="6" viewBox="0 0 8 6"><path d="M0 5 L3 1 L5 4 L8 0" stroke="#9fd" stroke-opacity="0.5" stroke-width="0.8" fill="none"/></svg>
<div style="left:13px;top:516px;width:1px;height:38px;background:#2a2c30;"></div>
<div style="left:14px;top:516px;width:233px;height:38px;background:#3a3d42;"></div>
<div style="left:247px;top:516px;width:1px;height:38px;background:#2b2d31;"></div>
<div style="left:248px;top:516px;width:9px;height:38px;background:#36393e;"></div>
<div style="left:257px;top:516px;width:1px;height:38px;background:#1b1c1f;"></div>
<div style="left:3px;top:557px;width:255px;height:1px;background:#26282b;"></div>
<div class="t" style="left:11.0px;top:525px;font-size:12px;color:#c8cad0;width:30px;text-align:center;">12</div>
<div style="left:38.5px;top:518.5px;width:94px;height:22px;background:#222327;border-radius:3px;box-shadow:0 1px 1px rgba(0,0,0,.4);"></div>
<div style="left:39.5px;top:519.5px;width:21.5px;height:20px;background:#4c4f54;border-radius:2px 0 0 2px;"></div>
<div style="left:62px;top:519.5px;width:23px;height:20px;background:#4c4f54;"></div>
<div style="left:86px;top:519.5px;width:23px;height:20px;background:#4c4f54;"></div>
<div style="left:110px;top:519.5px;width:21.5px;height:20px;background:#4c4f54;border-radius:0 2px 2px 0;"></div>
<div class="t" style="left:40.5px;top:523px;font-size:13px;color:#e0e0e0;width:20px;text-align:center;">M</div>
<div class="t" style="left:64.0px;top:523px;font-size:13px;color:#e0e0e0;width:20px;text-align:center;">S</div>
<svg style="left:92px;top:525px" width="10" height="10" viewBox="0 0 10 10"><circle cx="5" cy="5" r="4.6" fill="#c8c8c8"/></svg>
<svg style="left:116px;top:524px" width="10" height="11" viewBox="0 0 10 11"><path d="M5 1 A4.5 4.5 0 0 0 5 10Z" fill="#d0d0d0"/><path d="M6.5 1.5 A4.3 4.3 0 0 1 6.5 9.5" stroke="#d0d0d0" stroke-width="1.2" fill="none"/></svg>
<div class="t" style="left:138px;top:524px;font-size:13px;color:#c5c8cd;">Strings</div>
<div style="left:39px;top:546px;width:130px;height:3px;background:#26282b;"></div>
<div style="left:39px;top:546px;width:67px;height:3px;background:#8a8e94;"></div>
<svg style="left:221px;top:525px" width="17" height="10" viewBox="0 0 17 10"><path d="M0 0 H2.2 V6 H4.9 V0 H7.1 V6 H9.9 V0 H12.1 V6 H14.8 V0 H17 V10 H0Z" fill="#c8c8c8"/></svg>
<div style="left:258px;top:180px;width:1262px;height:41px;background:#232427;"></div>
<div style="left:258px;top:222px;width:1262px;height:41px;background:#232427;"></div>
<div style="left:258px;top:264px;width:1262px;height:41px;background:#232427;"></div>
<div style="left:258px;top:306px;width:1262px;height:41px;background:#232427;"></div>
<div style="left:258px;top:348px;width:1262px;height:41px;background:#232427;"></div>
<div style="left:258px;top:390px;width:1262px;height:41px;background:#232427;"></div>
<div style="left:258px;top:432px;width:1262px;height:41px;background:#232427;"></div>
<div style="left:258px;top:474px;width:1262px;height:41px;background:#232427;"></div>
<div style="left:258px;top:516px;width:1262px;height:38px;background:#232427;"></div>
<div style="left:281.5px;top:180px;width:1px;height:374px;background:#34363a;"></div>
<div style="left:310.0px;top:180px;width:1px;height:374px;background:#34363a;"></div>
<div style="left:338.5px;top:180px;width:1px;height:374px;background:#34363a;"></div>
<div style="left:367.0px;top:180px;width:1px;height:374px;background:#34363a;"></div>
<div style="left:395.5px;top:180px;width:1px;height:374px;background:#34363a;"></div>
<div style="left:424.0px;top:180px;width:1px;height:374px;background:#34363a;"></div>
<div style="left:452.5px;top:180px;width:1px;height:374px;background:#34363a;"></div>
<div style="left:481.0px;top:180px;width:1px;height:374px;background:#34363a;"></div>
<div style="left:509.5px;top:180px;width:1px;height:374px;background:#34363a;"></div>
<div style="left:538.0px;top:180px;width:1px;height:374px;background:#34363a;"></div>
<div style="left:566.5px;top:180px;width:1px;height:374px;background:#34363a;"></div>
<div style="left:595.0px;top:180px;width:1px;height:374px;background:#34363a;"></div>
<div style="left:623.5px;top:180px;width:1px;height:374px;background:#34363a;"></div>
<div style="left:652.0px;top:180px;width:1px;height:374px;background:#34363a;"></div>
<div style="left:680.5px;top:180px;width:1px;height:374px;background:#34363a;"></div>
<div style="left:709.0px;top:180px;width:1px;height:374px;background:#34363a;"></div>
<div style="left:737.5px;top:180px;width:1px;height:374px;background:#34363a;"></div>
<div style="left:766.0px;top:180px;width:1px;height:374px;background:#34363a;"></div>
<div style="left:794.5px;top:180px;width:1px;height:374px;background:#34363a;"></div>
<div style="left:823.0px;top:180px;width:1px;height:374px;background:#34363a;"></div>
<div style="left:851.5px;top:180px;width:1px;height:374px;background:#34363a;"></div>
<div style="left:880.0px;top:180px;width:1px;height:374px;background:#34363a;"></div>
<div style="left:908.5px;top:180px;width:1px;height:374px;background:#34363a;"></div>
<div style="left:937.0px;top:180px;width:1px;height:374px;background:#34363a;"></div>
<div style="left:965.5px;top:180px;width:1px;height:374px;background:#34363a;"></div>
<div style="left:994.0px;top:180px;width:1px;height:374px;background:#34363a;"></div>
<div style="left:1022.5px;top:180px;width:1px;height:374px;background:#34363a;"></div>
<div style="left:1051.0px;top:180px;width:1px;height:374px;background:#34363a;"></div>
<div style="left:1079.5px;top:180px;width:1px;height:374px;background:#34363a;"></div>
<div style="left:1108.0px;top:180px;width:1px;height:374px;background:#34363a;"></div>
<div style="left:1136.5px;top:180px;width:1px;height:374px;background:#34363a;"></div>
<div style="left:1165.0px;top:180px;width:1px;height:374px;background:#34363a;"></div>
<div style="left:1193.5px;top:180px;width:1px;height:374px;background:#34363a;"></div>
<div style="left:1222.0px;top:180px;width:1px;height:374px;background:#34363a;"></div>
<div style="left:1250.5px;top:180px;width:1px;height:374px;background:#34363a;"></div>
<div style="left:1279.0px;top:180px;width:1px;height:374px;background:#34363a;"></div>
<div style="left:1307.5px;top:180px;width:1px;height:374px;background:#34363a;"></div>
<div style="left:1336.0px;top:180px;width:1px;height:374px;background:#34363a;"></div>
<div style="left:1364.5px;top:180px;width:1px;height:374px;background:#34363a;"></div>
<div style="left:1393.0px;top:180px;width:1px;height:374px;background:#34363a;"></div>
<div style="left:1421.5px;top:180px;width:1px;height:374px;background:#34363a;"></div>
<div style="left:1450.0px;top:180px;width:1px;height:374px;background:#34363a;"></div>
<div style="left:1478.5px;top:180px;width:1px;height:374px;background:#34363a;"></div>
<div style="left:1507.0px;top:180px;width:1px;height:374px;background:#34363a;"></div>
<div style="left:258px;top:221px;width:1263px;height:1px;background:#2a2c2f;"></div>
<div style="left:258px;top:263px;width:1263px;height:1px;background:#2a2c2f;"></div>
<div style="left:258px;top:305px;width:1263px;height:1px;background:#2a2c2f;"></div>
<div style="left:258px;top:347px;width:1263px;height:1px;background:#2a2c2f;"></div>
<div style="left:258px;top:389px;width:1263px;height:1px;background:#2a2c2f;"></div>
<div style="left:258px;top:431px;width:1263px;height:1px;background:#2a2c2f;"></div>
<div style="left:258px;top:473px;width:1263px;height:1px;background:#2a2c2f;"></div>
<div style="left:258px;top:515px;width:1263px;height:1px;background:#2a2c2f;"></div>
<div style="left:258px;top:180px;width:1263px;height:41px;background:#0a97d6;overflow:hidden;"></div>
<div style="left:257px;top:180px;width:1px;height:41px;background:#0a80b8;"></div>
<svg style="left:257px;top:180px" width="40" height="12" viewBox="0 0 40 12"><path d="M0 0 H40 L32 12 H0Z" fill="#0a6a9a"/></svg>
<div style="left:257px;top:180px;width:40px;height:12px;overflow:hidden;"><div class="t" style="left:1px;top:1px;font-size:10px;color:#e8f4fa;font-weight:bold;">Drum</div></div>
<div style="left:309.5px;top:180px;width:1px;height:41px;background:#0a80b8;"></div>
<svg style="left:309.5px;top:180px" width="40" height="12" viewBox="0 0 40 12"><path d="M0 0 H40 L32 12 H0Z" fill="#0a6a9a"/></svg>
<div style="left:309.5px;top:180px;width:40px;height:12px;overflow:hidden;"><div class="t" style="left:1px;top:1px;font-size:10px;color:#e8f4fa;font-weight:bold;">Drum</div></div>
<div style="left:366.5px;top:180px;width:1px;height:41px;background:#0a80b8;"></div>
<svg style="left:366.5px;top:180px" width="40" height="12" viewBox="0 0 40 12"><path d="M0 0 H40 L32 12 H0Z" fill="#0a6a9a"/></svg>
<div style="left:366.5px;top:180px;width:40px;height:12px;overflow:hidden;"><div class="t" style="left:1px;top:1px;font-size:10px;color:#e8f4fa;font-weight:bold;">Drum</div></div>
<div style="left:423.5px;top:180px;width:1px;height:41px;background:#0a80b8;"></div>
<svg style="left:423.5px;top:180px" width="40" height="12" viewBox="0 0 40 12"><path d="M0 0 H40 L32 12 H0Z" fill="#0a6a9a"/></svg>
<div style="left:423.5px;top:180px;width:40px;height:12px;overflow:hidden;"><div class="t" style="left:1px;top:1px;font-size:10px;color:#e8f4fa;font-weight:bold;">Drum</div></div>
<div style="left:480.5px;top:180px;width:1px;height:41px;background:#0a80b8;"></div>
<svg style="left:480.5px;top:180px" width="40" height="12" viewBox="0 0 40 12"><path d="M0 0 H40 L32 12 H0Z" fill="#0a6a9a"/></svg>
<div style="left:480.5px;top:180px;width:40px;height:12px;overflow:hidden;"><div class="t" style="left:1px;top:1px;font-size:10px;color:#e8f4fa;font-weight:bold;">Drum</div></div>
<div style="left:537.5px;top:180px;width:1px;height:41px;background:#0a80b8;"></div>
<svg style="left:537.5px;top:180px" width="40" height="12" viewBox="0 0 40 12"><path d="M0 0 H40 L32 12 H0Z" fill="#0a6a9a"/></svg>
<div style="left:537.5px;top:180px;width:40px;height:12px;overflow:hidden;"><div class="t" style="left:1px;top:1px;font-size:10px;color:#e8f4fa;font-weight:bold;">Drum</div></div>
<div style="left:594.5px;top:180px;width:1px;height:41px;background:#0a80b8;"></div>
<svg style="left:594.5px;top:180px" width="40" height="12" viewBox="0 0 40 12"><path d="M0 0 H40 L32 12 H0Z" fill="#0a6a9a"/></svg>
<div style="left:594.5px;top:180px;width:40px;height:12px;overflow:hidden;"><div class="t" style="left:1px;top:1px;font-size:10px;color:#e8f4fa;font-weight:bold;">Drum</div></div>
<div style="left:651.5px;top:180px;width:1px;height:41px;background:#0a80b8;"></div>
<svg style="left:651.5px;top:180px" width="40" height="12" viewBox="0 0 40 12"><path d="M0 0 H40 L32 12 H0Z" fill="#0a6a9a"/></svg>
<div style="left:651.5px;top:180px;width:40px;height:12px;overflow:hidden;"><div class="t" style="left:1px;top:1px;font-size:10px;color:#e8f4fa;font-weight:bold;">Drum</div></div>
<div style="left:708.5px;top:180px;width:1px;height:41px;background:#0a80b8;"></div>
<svg style="left:708.5px;top:180px" width="40" height="12" viewBox="0 0 40 12"><path d="M0 0 H40 L32 12 H0Z" fill="#0a6a9a"/></svg>
<div style="left:708.5px;top:180px;width:40px;height:12px;overflow:hidden;"><div class="t" style="left:1px;top:1px;font-size:10px;color:#e8f4fa;font-weight:bold;">Drum</div></div>
<div style="left:765.5px;top:180px;width:1px;height:41px;background:#0a80b8;"></div>
<svg style="left:765.5px;top:180px" width="40" height="12" viewBox="0 0 40 12"><path d="M0 0 H40 L32 12 H0Z" fill="#0a6a9a"/></svg>
<div style="left:765.5px;top:180px;width:40px;height:12px;overflow:hidden;"><div class="t" style="left:1px;top:1px;font-size:10px;color:#e8f4fa;font-weight:bold;">Drum</div></div>
<div style="left:822.5px;top:180px;width:1px;height:41px;background:#0a80b8;"></div>
<svg style="left:822.5px;top:180px" width="40" height="12" viewBox="0 0 40 12"><path d="M0 0 H40 L32 12 H0Z" fill="#0a6a9a"/></svg>
<div style="left:822.5px;top:180px;width:40px;height:12px;overflow:hidden;"><div class="t" style="left:1px;top:1px;font-size:10px;color:#e8f4fa;font-weight:bold;">Drum</div></div>
<div style="left:879.5px;top:180px;width:1px;height:41px;background:#0a80b8;"></div>
<svg style="left:879.5px;top:180px" width="40" height="12" viewBox="0 0 40 12"><path d="M0 0 H40 L32 12 H0Z" fill="#0a6a9a"/></svg>
<div style="left:879.5px;top:180px;width:40px;height:12px;overflow:hidden;"><div class="t" style="left:1px;top:1px;font-size:10px;color:#e8f4fa;font-weight:bold;">Drum</div></div>
<div style="left:936.5px;top:180px;width:1px;height:41px;background:#0a80b8;"></div>
<svg style="left:936.5px;top:180px" width="40" height="12" viewBox="0 0 40 12"><path d="M0 0 H40 L32 12 H0Z" fill="#0a6a9a"/></svg>
<div style="left:936.5px;top:180px;width:40px;height:12px;overflow:hidden;"><div class="t" style="left:1px;top:1px;font-size:10px;color:#e8f4fa;font-weight:bold;">Drum</div></div>
<div style="left:993.5px;top:180px;width:1px;height:41px;background:#0a80b8;"></div>
<svg style="left:993.5px;top:180px" width="40" height="12" viewBox="0 0 40 12"><path d="M0 0 H40 L32 12 H0Z" fill="#0a6a9a"/></svg>
<div style="left:993.5px;top:180px;width:40px;height:12px;overflow:hidden;"><div class="t" style="left:1px;top:1px;font-size:10px;color:#e8f4fa;font-weight:bold;">Drum</div></div>
<div style="left:1050.5px;top:180px;width:1px;height:41px;background:#0a80b8;"></div>
<svg style="left:1050.5px;top:180px" width="40" height="12" viewBox="0 0 40 12"><path d="M0 0 H40 L32 12 H0Z" fill="#0a6a9a"/></svg>
<div style="left:1050.5px;top:180px;width:40px;height:12px;overflow:hidden;"><div class="t" style="left:1px;top:1px;font-size:10px;color:#e8f4fa;font-weight:bold;">Drum</div></div>
<div style="left:1107.5px;top:180px;width:1px;height:41px;background:#0a80b8;"></div>
<svg style="left:1107.5px;top:180px" width="40" height="12" viewBox="0 0 40 12"><path d="M0 0 H40 L32 12 H0Z" fill="#0a6a9a"/></svg>
<div style="left:1107.5px;top:180px;width:40px;height:12px;overflow:hidden;"><div class="t" style="left:1px;top:1px;font-size:10px;color:#e8f4fa;font-weight:bold;">Drum</div></div>
<div style="left:1164.5px;top:180px;width:1px;height:41px;background:#0a80b8;"></div>
<svg style="left:1164.5px;top:180px" width="40" height="12" viewBox="0 0 40 12"><path d="M0 0 H40 L32 12 H0Z" fill="#0a6a9a"/></svg>
<div style="left:1164.5px;top:180px;width:40px;height:12px;overflow:hidden;"><div class="t" style="left:1px;top:1px;font-size:10px;color:#e8f4fa;font-weight:bold;">Drum</div></div>
<div style="left:1221.5px;top:180px;width:1px;height:41px;background:#0a80b8;"></div>
<svg style="left:1221.5px;top:180px" width="40" height="12" viewBox="0 0 40 12"><path d="M0 0 H40 L32 12 H0Z" fill="#0a6a9a"/></svg>
<div style="left:1221.5px;top:180px;width:40px;height:12px;overflow:hidden;"><div class="t" style="left:1px;top:1px;font-size:10px;color:#e8f4fa;font-weight:bold;">Drum</div></div>
<div style="left:1278.5px;top:180px;width:1px;height:41px;background:#0a80b8;"></div>
<svg style="left:1278.5px;top:180px" width="40" height="12" viewBox="0 0 40 12"><path d="M0 0 H40 L32 12 H0Z" fill="#0a6a9a"/></svg>
<div style="left:1278.5px;top:180px;width:40px;height:12px;overflow:hidden;"><div class="t" style="left:1px;top:1px;font-size:10px;color:#e8f4fa;font-weight:bold;">Drum</div></div>
<div style="left:1335.5px;top:180px;width:1px;height:41px;background:#0a80b8;"></div>
<svg style="left:1335.5px;top:180px" width="40" height="12" viewBox="0 0 40 12"><path d="M0 0 H40 L32 12 H0Z" fill="#0a6a9a"/></svg>
<div style="left:1335.5px;top:180px;width:40px;height:12px;overflow:hidden;"><div class="t" style="left:1px;top:1px;font-size:10px;color:#e8f4fa;font-weight:bold;">Drum</div></div>
<div style="left:1392.5px;top:180px;width:1px;height:41px;background:#0a80b8;"></div>
<svg style="left:1392.5px;top:180px" width="40" height="12" viewBox="0 0 40 12"><path d="M0 0 H40 L32 12 H0Z" fill="#0a6a9a"/></svg>
<div style="left:1392.5px;top:180px;width:40px;height:12px;overflow:hidden;"><div class="t" style="left:1px;top:1px;font-size:10px;color:#e8f4fa;font-weight:bold;">Drum</div></div>
<div style="left:1449.5px;top:180px;width:1px;height:41px;background:#0a80b8;"></div>
<svg style="left:1449.5px;top:180px" width="40" height="12" viewBox="0 0 40 12"><path d="M0 0 H40 L32 12 H0Z" fill="#0a6a9a"/></svg>
<div style="left:1449.5px;top:180px;width:40px;height:12px;overflow:hidden;"><div class="t" style="left:1px;top:1px;font-size:10px;color:#e8f4fa;font-weight:bold;">Drum</div></div>
<div style="left:1506.5px;top:180px;width:1px;height:41px;background:#0a80b8;"></div>
<svg style="left:1506.5px;top:180px" width="14.5" height="12" viewBox="0 0 14.5 12"><path d="M0 0 H14.5 L6.5 12 H0Z" fill="#0a6a9a"/></svg>
<div style="left:1506.5px;top:180px;width:14.5px;height:12px;overflow:hidden;"><div class="t" style="left:1px;top:1px;font-size:10px;color:#e8f4fa;font-weight:bold;">Drum</div></div>
<svg style="left:260px;top:202px" width="1262" height="2" viewBox="0 0 1262 2"><g fill="#cde9f6" shape-rendering="crispEdges"><rect x="0.0" y="0" width="3.0" height="1"/><rect x="7.1" y="0" width="3.0" height="1"/><rect x="14.2" y="0" width="3.0" height="1"/><rect x="21.3" y="0" width="3.0" height="1"/><rect x="28.4" y="0" width="3.0" height="1"/><rect x="35.5" y="0" width="3.0" height="1"/><rect x="42.6" y="0" width="3.0" height="1"/><rect x="49.7" y="0" width="3.0" height="1"/><rect x="56.8" y="0" width="3.0" height="1"/><rect x="63.9" y="0" width="3.0" height="1"/><rect x="71.0" y="0" width="3.0" height="1"/><rect x="78.1" y="0" width="3.0" height="1"/><rect x="85.2" y="0" width="3.0" height="1"/><rect x="92.3" y="0" width="3.0" height="1"/><rect x="99.4" y="0" width="3.0" height="1"/><rect x="106.5" y="0" width="3.0" height="1"/><rect x="113.6" y="0" width="3.0" height="1"/><rect x="120.7" y="0" width="3.0" height="1"/><rect x="127.8" y="0" width="3.0" height="1"/><rect x="134.9" y="0" width="3.0" height="1"/><rect x="142.0" y="0" width="3.0" height="1"/><rect x="149.1" y="0" width="3.0" height="1"/><rect x="156.2" y="0" width="3.0" height="1"/><rect x="163.3" y="0" width="3.0" height="1"/><rect x="170.4" y="0" width="3.0" height="1"/><rect x="177.5" y="0" width="3.0" height="1"/><rect x="184.6" y="0" width="3.0" height="1"/><rect x="191.7" y="0" width="3.0" height="1"/><rect x="198.8" y="0" width="3.0" height="1"/><rect x="205.9" y="0" width="3.0" height="1"/><rect x="213.0" y="0" width="3.0" height="1"/><rect x="220.1" y="0" width="3.0" height="1"/><rect x="227.2" y="0" width="3.0" height="1"/><rect x="234.3" y="0" width="3.0" height="1"/><rect x="241.4" y="0" width="3.0" height="1"/><rect x="248.5" y="0" width="3.0" height="1"/><rect x="255.6" y="0" width="3.0" height="1"/><rect x="262.7" y="0" width="3.0" height="1"/><rect x="269.8" y="0" width="3.0" height="1"/><rect x="276.9" y="0" width="3.0" height="1"/><rect x="284.0" y="0" width="3.0" height="1"/><rect x="291.1" y="0" width="3.0" height="1"/><rect x="298.2" y="0" width="3.0" height="1"/><rect x="305.3" y="0" width="3.0" height="1"/><rect x="312.4" y="0" width="3.0" height="1"/><rect x="319.5" y="0" width="3.0" height="1"/><rect x="326.6" y="0" width="3.0" height="1"/><rect x="333.7" y="0" width="3.0" height="1"/><rect x="340.8" y="0" width="3.0" height="1"/><rect x="347.9" y="0" width="3.0" height="1"/><rect x="355.0" y="0" width="3.0" height="1"/><rect x="362.1" y="0" width="3.0" height="1"/><rect x="369.2" y="0" width="3.0" height="1"/><rect x="376.3" y="0" width="3.0" height="1"/><rect x="383.4" y="0" width="3.0" height="1"/><rect x="390.5" y="0" width="3.0" height="1"/><rect x="397.6" y="0" width="3.0" height="1"/><rect x="404.7" y="0" width="3.0" height="1"/><rect x="411.8" y="0" width="3.0" height="1"/><rect x="418.9" y="0" width="3.0" height="1"/><rect x="426.0" y="0" width="3.0" height="1"/><rect x="433.1" y="0" width="3.0" height="1"/><rect x="440.2" y="0" width="3.0" height="1"/><rect x="447.3" y="0" width="3.0" height="1"/><rect x="454.4" y="0" width="3.0" height="1"/><rect x="461.5" y="0" width="3.0" height="1"/><rect x="468.6" y="0" width="3.0" height="1"/><rect x="475.7" y="0" width="3.0" height="1"/><rect x="482.8" y="0" width="3.0" height="1"/><rect x="489.9" y="0" width="3.0" height="1"/><rect x="497.0" y="0" width="3.0" height="1"/><rect x="504.1" y="0" width="3.0" height="1"/><rect x="511.2" y="0" width="3.0" height="1"/><rect x="518.3" y="0" width="3.0" height="1"/><rect x="525.4" y="0" width="3.0" height="1"/><rect x="532.5" y="0" width="3.0" height="1"/><rect x="539.6" y="0" width="3.0" height="1"/><rect x="546.7" y="0" width="3.0" height="1"/><rect x="553.8" y="0" width="3.0" height="1"/><rect x="560.9" y="0" width="3.0" height="1"/><rect x="568.0" y="0" width="3.0" height="1"/><rect x="575.1" y="0" width="3.0" height="1"/><rect x="582.2" y="0" width="3.0" height="1"/><rect x="589.3" y="0" width="3.0" height="1"/><rect x="596.4" y="0" width="3.0" height="1"/><rect x="603.5" y="0" width="3.0" height="1"/><rect x="610.6" y="0" width="3.0" height="1"/><rect x="617.7" y="0" width="3.0" height="1"/><rect x="624.8" y="0" width="3.0" height="1"/><rect x="631.9" y="0" width="3.0" height="1"/><rect x="639.0" y="0" width="3.0" height="1"/><rect x="646.1" y="0" width="3.0" height="1"/><rect x="653.2" y="0" width="3.0" height="1"/><rect x="660.3" y="0" width="3.0" height="1"/><rect x="667.4" y="0" width="3.0" height="1"/><rect x="674.5" y="0" width="3.0" height="1"/><rect x="681.6" y="0" width="3.0" height="1"/><rect x="688.7" y="0" width="3.0" height="1"/><rect x="695.8" y="0" width="3.0" height="1"/><rect x="702.9" y="0" width="3.0" height="1"/><rect x="710.0" y="0" width="3.0" height="1"/><rect x="717.1" y="0" width="3.0" height="1"/><rect x="724.2" y="0" width="3.0" height="1"/><rect x="731.3" y="0" width="3.0" height="1"/><rect x="738.4" y="0" width="3.0" height="1"/><rect x="745.5" y="0" width="3.0" height="1"/><rect x="752.6" y="0" width="3.0" height="1"/><rect x="759.7" y="0" width="3.0" height="1"/><rect x="766.8" y="0" width="3.0" height="1"/><rect x="773.9" y="0" width="3.0" height="1"/><rect x="781.0" y="0" width="3.0" height="1"/><rect x="788.1" y="0" width="3.0" height="1"/><rect x="795.2" y="0" width="3.0" height="1"/><rect x="802.3" y="0" width="3.0" height="1"/><rect x="809.4" y="0" width="3.0" height="1"/><rect x="816.5" y="0" width="3.0" height="1"/><rect x="823.6" y="0" width="3.0" height="1"/><rect x="830.7" y="0" width="3.0" height="1"/><rect x="837.8" y="0" width="3.0" height="1"/><rect x="844.9" y="0" width="3.0" height="1"/><rect x="852.0" y="0" width="3.0" height="1"/><rect x="859.1" y="0" width="3.0" height="1"/><rect x="866.2" y="0" width="3.0" height="1"/><rect x="873.3" y="0" width="3.0" height="1"/><rect x="880.4" y="0" width="3.0" height="1"/><rect x="887.5" y="0" width="3.0" height="1"/><rect x="894.6" y="0" width="3.0" height="1"/><rect x="901.7" y="0" width="3.0" height="1"/><rect x="908.8" y="0" width="3.0" height="1"/><rect x="915.9" y="0" width="3.0" height="1"/><rect x="923.0" y="0" width="3.0" height="1"/><rect x="930.1" y="0" width="3.0" height="1"/><rect x="937.2" y="0" width="3.0" height="1"/><rect x="944.3" y="0" width="3.0" height="1"/><rect x="951.4" y="0" width="3.0" height="1"/><rect x="958.5" y="0" width="3.0" height="1"/><rect x="965.6" y="0" width="3.0" height="1"/><rect x="972.7" y="0" width="3.0" height="1"/><rect x="979.8" y="0" width="3.0" height="1"/><rect x="986.9" y="0" width="3.0" height="1"/><rect x="994.0" y="0" width="3.0" height="1"/><rect x="1001.1" y="0" width="3.0" height="1"/><rect x="1008.2" y="0" width="3.0" height="1"/><rect x="1015.3" y="0" width="3.0" height="1"/><rect x="1022.4" y="0" width="3.0" height="1"/><rect x="1029.5" y="0" width="3.0" height="1"/><rect x="1036.6" y="0" width="3.0" height="1"/><rect x="1043.7" y="0" width="3.0" height="1"/><rect x="1050.8" y="0" width="3.0" height="1"/><rect x="1057.9" y="0" width="3.0" height="1"/><rect x="1065.0" y="0" width="3.0" height="1"/><rect x="1072.1" y="0" width="3.0" height="1"/><rect x="1079.2" y="0" width="3.0" height="1"/><rect x="1086.3" y="0" width="3.0" height="1"/><rect x="1093.4" y="0" width="3.0" height="1"/><rect x="1100.5" y="0" width="3.0" height="1"/><rect x="1107.6" y="0" width="3.0" height="1"/><rect x="1114.7" y="0" width="3.0" height="1"/><rect x="1121.8" y="0" width="3.0" height="1"/><rect x="1128.9" y="0" width="3.0" height="1"/><rect x="1136.0" y="0" width="3.0" height="1"/><rect x="1143.1" y="0" width="3.0" height="1"/><rect x="1150.2" y="0" width="3.0" height="1"/><rect x="1157.3" y="0" width="3.0" height="1"/><rect x="1164.4" y="0" width="3.0" height="1"/><rect x="1171.5" y="0" width="3.0" height="1"/><rect x="1178.6" y="0" width="3.0" height="1"/><rect x="1185.7" y="0" width="3.0" height="1"/><rect x="1192.8" y="0" width="3.0" height="1"/><rect x="1199.9" y="0" width="3.0" height="1"/><rect x="1207.0" y="0" width="3.0" height="1"/><rect x="1214.1" y="0" width="3.0" height="1"/><rect x="1221.2" y="0" width="3.0" height="1"/><rect x="1228.3" y="0" width="3.0" height="1"/><rect x="1235.4" y="0" width="3.0" height="1"/><rect x="1242.5" y="0" width="3.0" height="1"/><rect x="1249.6" y="0" width="3.0" height="1"/><rect x="1256.7" y="0" width="3.0" height="1"/></g></svg>
<svg style="left:259px;top:213px" width="1263" height="2" viewBox="0 0 1263 2"><g fill="#cde9f6" shape-rendering="crispEdges"><rect x="0.0" y="0" width="4.0" height="1"/><rect x="7.1" y="0" width="4.0" height="1"/><rect x="14.2" y="0" width="4.0" height="1"/><rect x="21.3" y="0" width="4.0" height="1"/><rect x="28.4" y="0" width="4.0" height="1"/><rect x="35.5" y="0" width="4.0" height="1"/><rect x="42.6" y="0" width="4.0" height="1"/><rect x="49.7" y="0" width="4.0" height="1"/><rect x="56.8" y="0" width="4.0" height="1"/><rect x="63.9" y="0" width="4.0" height="1"/><rect x="71.0" y="0" width="4.0" height="1"/><rect x="78.1" y="0" width="4.0" height="1"/><rect x="85.2" y="0" width="4.0" height="1"/><rect x="92.3" y="0" width="4.0" height="1"/><rect x="99.4" y="0" width="4.0" height="1"/><rect x="106.5" y="0" width="4.0" height="1"/><rect x="113.6" y="0" width="4.0" height="1"/><rect x="120.7" y="0" width="4.0" height="1"/><rect x="127.8" y="0" width="4.0" height="1"/><rect x="134.9" y="0" width="4.0" height="1"/><rect x="142.0" y="0" width="4.0" height="1"/><rect x="149.1" y="0" width="4.0" height="1"/><rect x="156.2" y="0" width="4.0" height="1"/><rect x="163.3" y="0" width="4.0" height="1"/><rect x="170.4" y="0" width="4.0" height="1"/><rect x="177.5" y="0" width="4.0" height="1"/><rect x="184.6" y="0" width="4.0" height="1"/><rect x="191.7" y="0" width="4.0" height="1"/><rect x="198.8" y="0" width="4.0" height="1"/><rect x="205.9" y="0" width="4.0" height="1"/><rect x="213.0" y="0" width="4.0" height="1"/><rect x="220.1" y="0" width="4.0" height="1"/><rect x="227.2" y="0" width="4.0" height="1"/><rect x="234.3" y="0" width="4.0" height="1"/><rect x="241.4" y="0" width="4.0" height="1"/><rect x="248.5" y="0" width="4.0" height="1"/><rect x="255.6" y="0" width="4.0" height="1"/><rect x="262.7" y="0" width="4.0" height="1"/><rect x="269.8" y="0" width="4.0" height="1"/><rect x="276.9" y="0" width="4.0" height="1"/><rect x="284.0" y="0" width="4.0" height="1"/><rect x="291.1" y="0" width="4.0" height="1"/><rect x="298.2" y="0" width="4.0" height="1"/><rect x="305.3" y="0" width="4.0" height="1"/><rect x="312.4" y="0" width="4.0" height="1"/><rect x="319.5" y="0" width="4.0" height="1"/><rect x="326.6" y="0" width="4.0" height="1"/><rect x="333.7" y="0" width="4.0" height="1"/><rect x="340.8" y="0" width="4.0" height="1"/><rect x="347.9" y="0" width="4.0" height="1"/><rect x="355.0" y="0" width="4.0" height="1"/><rect x="362.1" y="0" width="4.0" height="1"/><rect x="369.2" y="0" width="4.0" height="1"/><rect x="376.3" y="0" width="4.0" height="1"/><rect x="383.4" y="0" width="4.0" height="1"/><rect x="390.5" y="0" width="4.0" height="1"/><rect x="397.6" y="0" width="4.0" height="1"/><rect x="404.7" y="0" width="4.0" height="1"/><rect x="411.8" y="0" width="4.0" height="1"/><rect x="418.9" y="0" width="4.0" height="1"/><rect x="426.0" y="0" width="4.0" height="1"/><rect x="433.1" y="0" width="4.0" height="1"/><rect x="440.2" y="0" width="4.0" height="1"/><rect x="447.3" y="0" width="4.0" height="1"/><rect x="454.4" y="0" width="4.0" height="1"/><rect x="461.5" y="0" width="4.0" height="1"/><rect x="468.6" y="0" width="4.0" height="1"/><rect x="475.7" y="0" width="4.0" height="1"/><rect x="482.8" y="0" width="4.0" height="1"/><rect x="489.9" y="0" width="4.0" height="1"/><rect x="497.0" y="0" width="4.0" height="1"/><rect x="504.1" y="0" width="4.0" height="1"/><rect x="511.2" y="0" width="4.0" height="1"/><rect x="518.3" y="0" width="4.0" height="1"/><rect x="525.4" y="0" width="4.0" height="1"/><rect x="532.5" y="0" width="4.0" height="1"/><rect x="539.6" y="0" width="4.0" height="1"/><rect x="546.7" y="0" width="4.0" height="1"/><rect x="553.8" y="0" width="4.0" height="1"/><rect x="560.9" y="0" width="4.0" height="1"/><rect x="568.0" y="0" width="4.0" height="1"/><rect x="575.1" y="0" width="4.0" height="1"/><rect x="582.2" y="0" width="4.0" height="1"/><rect x="589.3" y="0" width="4.0" height="1"/><rect x="596.4" y="0" width="4.0" height="1"/><rect x="603.5" y="0" width="4.0" height="1"/><rect x="610.6" y="0" width="4.0" height="1"/><rect x="617.7" y="0" width="4.0" height="1"/><rect x="624.8" y="0" width="4.0" height="1"/><rect x="631.9" y="0" width="4.0" height="1"/><rect x="639.0" y="0" width="4.0" height="1"/><rect x="646.1" y="0" width="4.0" height="1"/><rect x="653.2" y="0" width="4.0" height="1"/><rect x="660.3" y="0" width="4.0" height="1"/><rect x="667.4" y="0" width="4.0" height="1"/><rect x="674.5" y="0" width="4.0" height="1"/><rect x="681.6" y="0" width="4.0" height="1"/><rect x="688.7" y="0" width="4.0" height="1"/><rect x="695.8" y="0" width="4.0" height="1"/><rect x="702.9" y="0" width="4.0" height="1"/><rect x="710.0" y="0" width="4.0" height="1"/><rect x="717.1" y="0" width="4.0" height="1"/><rect x="724.2" y="0" width="4.0" height="1"/><rect x="731.3" y="0" width="4.0" height="1"/><rect x="738.4" y="0" width="4.0" height="1"/><rect x="745.5" y="0" width="4.0" height="1"/><rect x="752.6" y="0" width="4.0" height="1"/><rect x="759.7" y="0" width="4.0" height="1"/><rect x="766.8" y="0" width="4.0" height="1"/><rect x="773.9" y="0" width="4.0" height="1"/><rect x="781.0" y="0" width="4.0" height="1"/><rect x="788.1" y="0" width="4.0" height="1"/><rect x="795.2" y="0" width="4.0" height="1"/><rect x="802.3" y="0" width="4.0" height="1"/><rect x="809.4" y="0" width="4.0" height="1"/><rect x="816.5" y="0" width="4.0" height="1"/><rect x="823.6" y="0" width="4.0" height="1"/><rect x="830.7" y="0" width="4.0" height="1"/><rect x="837.8" y="0" width="4.0" height="1"/><rect x="844.9" y="0" width="4.0" height="1"/><rect x="852.0" y="0" width="4.0" height="1"/><rect x="859.1" y="0" width="4.0" height="1"/><rect x="866.2" y="0" width="4.0" height="1"/><rect x="873.3" y="0" width="4.0" height="1"/><rect x="880.4" y="0" width="4.0" height="1"/><rect x="887.5" y="0" width="4.0" height="1"/><rect x="894.6" y="0" width="4.0" height="1"/><rect x="901.7" y="0" width="4.0" height="1"/><rect x="908.8" y="0" width="4.0" height="1"/><rect x="915.9" y="0" width="4.0" height="1"/><rect x="923.0" y="0" width="4.0" height="1"/><rect x="930.1" y="0" width="4.0" height="1"/><rect x="937.2" y="0" width="4.0" height="1"/><rect x="944.3" y="0" width="4.0" height="1"/><rect x="951.4" y="0" width="4.0" height="1"/><rect x="958.5" y="0" width="4.0" height="1"/><rect x="965.6" y="0" width="4.0" height="1"/><rect x="972.7" y="0" width="4.0" height="1"/><rect x="979.8" y="0" width="4.0" height="1"/><rect x="986.9" y="0" width="4.0" height="1"/><rect x="994.0" y="0" width="4.0" height="1"/><rect x="1001.1" y="0" width="4.0" height="1"/><rect x="1008.2" y="0" width="4.0" height="1"/><rect x="1015.3" y="0" width="4.0" height="1"/><rect x="1022.4" y="0" width="4.0" height="1"/><rect x="1029.5" y="0" width="4.0" height="1"/><rect x="1036.6" y="0" width="4.0" height="1"/><rect x="1043.7" y="0" width="4.0" height="1"/><rect x="1050.8" y="0" width="4.0" height="1"/><rect x="1057.9" y="0" width="4.0" height="1"/><rect x="1065.0" y="0" width="4.0" height="1"/><rect x="1072.1" y="0" width="4.0" height="1"/><rect x="1079.2" y="0" width="4.0" height="1"/><rect x="1086.3" y="0" width="4.0" height="1"/><rect x="1093.4" y="0" width="4.0" height="1"/><rect x="1100.5" y="0" width="4.0" height="1"/><rect x="1107.6" y="0" width="4.0" height="1"/><rect x="1114.7" y="0" width="4.0" height="1"/><rect x="1121.8" y="0" width="4.0" height="1"/><rect x="1128.9" y="0" width="4.0" height="1"/><rect x="1136.0" y="0" width="4.0" height="1"/><rect x="1143.1" y="0" width="4.0" height="1"/><rect x="1150.2" y="0" width="4.0" height="1"/><rect x="1157.3" y="0" width="4.0" height="1"/><rect x="1164.4" y="0" width="4.0" height="1"/><rect x="1171.5" y="0" width="4.0" height="1"/><rect x="1178.6" y="0" width="4.0" height="1"/><rect x="1185.7" y="0" width="4.0" height="1"/><rect x="1192.8" y="0" width="4.0" height="1"/><rect x="1199.9" y="0" width="4.0" height="1"/><rect x="1207.0" y="0" width="4.0" height="1"/><rect x="1214.1" y="0" width="4.0" height="1"/><rect x="1221.2" y="0" width="4.0" height="1"/><rect x="1228.3" y="0" width="4.0" height="1"/><rect x="1235.4" y="0" width="4.0" height="1"/><rect x="1242.5" y="0" width="4.0" height="1"/><rect x="1249.6" y="0" width="4.0" height="1"/><rect x="1256.7" y="0" width="4.0" height="1"/></g></svg>
<div style="left:258px;top:222px;width:1263px;height:41px;background:#00c2e8;overflow:hidden;"></div>
<svg style="left:1108px;top:222px" width="56" height="12" viewBox="0 0 56 12"><path d="M0 0 H56 L48 12 H0Z" fill="#0a87a8"/></svg>
<div class="t" style="left:1112px;top:223px;font-size:10px;color:#eef;font-weight:bold;">Bass</div>
<svg style="left:258px;top:250px" width="851" height="2" viewBox="0 0 851 2"><g fill="#2a4a58" shape-rendering="crispEdges"><rect x="0.0" y="0" width="4.0" height="1"/><rect x="7.1" y="-0" width="4.0" height="1"/><rect x="14.2" y="-0" width="4.0" height="1"/><rect x="21.3" y="-0" width="4.0" height="1"/><rect x="28.4" y="-1" width="4.0" height="1"/><rect x="35.5" y="-1" width="4.0" height="1"/><rect x="42.6" y="-1" width="4.0" height="1"/><rect x="49.7" y="-1" width="4.0" height="1"/><rect x="56.8" y="-1" width="4.0" height="1"/><rect x="63.9" y="-1" width="4.0" height="1"/><rect x="71.0" y="-1" width="4.0" height="1"/><rect x="78.1" y="-1" width="4.0" height="1"/><rect x="85.2" y="-2" width="4.0" height="1"/><rect x="92.3" y="-2" width="4.0" height="1"/><rect x="99.4" y="-2" width="4.0" height="1"/><rect x="106.5" y="-2" width="4.0" height="1"/><rect x="113.6" y="-2" width="4.0" height="1"/><rect x="120.7" y="-2" width="4.0" height="1"/><rect x="127.8" y="-2" width="4.0" height="1"/><rect x="134.9" y="-2" width="4.0" height="1"/><rect x="142.0" y="-2" width="4.0" height="1"/><rect x="149.1" y="-2" width="4.0" height="1"/><rect x="156.2" y="-2" width="4.0" height="1"/><rect x="163.3" y="-2" width="4.0" height="1"/><rect x="170.4" y="-2" width="4.0" height="1"/><rect x="177.5" y="-2" width="4.0" height="1"/><rect x="184.6" y="-2" width="4.0" height="1"/><rect x="191.7" y="-2" width="4.0" height="1"/><rect x="198.8" y="-2" width="4.0" height="1"/><rect x="205.9" y="-2" width="4.0" height="1"/><rect x="213.0" y="-2" width="4.0" height="1"/><rect x="220.1" y="-1" width="4.0" height="1"/><rect x="227.2" y="-1" width="4.0" height="1"/><rect x="234.3" y="-1" width="4.0" height="1"/><rect x="241.4" y="-1" width="4.0" height="1"/><rect x="248.5" y="-1" width="4.0" height="1"/><rect x="255.6" y="-1" width="4.0" height="1"/><rect x="262.7" y="-1" width="4.0" height="1"/><rect x="269.8" y="-1" width="4.0" height="1"/><rect x="276.9" y="-0" width="4.0" height="1"/><rect x="284.0" y="-0" width="4.0" height="1"/><rect x="291.1" y="-0" width="4.0" height="1"/><rect x="298.2" y="-0" width="4.0" height="1"/><rect x="305.3" y="0" width="4.0" height="1"/><rect x="312.4" y="0" width="4.0" height="1"/><rect x="319.5" y="0" width="4.0" height="1"/><rect x="326.6" y="0" width="4.0" height="1"/><rect x="333.7" y="0" width="4.0" height="1"/><rect x="340.8" y="0" width="4.0" height="1"/><rect x="347.9" y="0" width="4.0" height="1"/><rect x="355.0" y="0" width="4.0" height="1"/><rect x="362.1" y="0" width="4.0" height="1"/><rect x="369.2" y="0" width="4.0" height="1"/><rect x="376.3" y="0" width="4.0" height="1"/><rect x="383.4" y="0" width="4.0" height="1"/><rect x="390.5" y="0" width="4.0" height="1"/><rect x="397.6" y="0" width="4.0" height="1"/><rect x="404.7" y="0" width="4.0" height="1"/><rect x="411.8" y="0" width="4.0" height="1"/><rect x="418.9" y="0" width="4.0" height="1"/><rect x="426.0" y="0" width="4.0" height="1"/><rect x="433.1" y="0" width="4.0" height="1"/><rect x="440.2" y="0" width="4.0" height="1"/><rect x="447.3" y="0" width="4.0" height="1"/><rect x="454.4" y="0" width="4.0" height="1"/><rect x="461.5" y="0" width="4.0" height="1"/><rect x="468.6" y="0" width="4.0" height="1"/><rect x="475.7" y="0" width="4.0" height="1"/><rect x="482.8" y="0" width="4.0" height="1"/><rect x="489.9" y="0" width="4.0" height="1"/><rect x="497.0" y="0" width="4.0" height="1"/><rect x="504.1" y="0" width="4.0" height="1"/><rect x="511.2" y="0" width="4.0" height="1"/><rect x="518.3" y="0" width="4.0" height="1"/><rect x="525.4" y="0" width="4.0" height="1"/><rect x="532.5" y="0" width="4.0" height="1"/><rect x="539.6" y="0" width="4.0" height="1"/><rect x="546.7" y="0" width="4.0" height="1"/><rect x="553.8" y="0" width="4.0" height="1"/><rect x="560.9" y="0" width="4.0" height="1"/><rect x="568.0" y="0" width="4.0" height="1"/><rect x="575.1" y="0" width="4.0" height="1"/><rect x="582.2" y="0" width="4.0" height="1"/><rect x="589.3" y="0" width="4.0" height="1"/><rect x="596.4" y="0" width="4.0" height="1"/><rect x="603.5" y="-0" width="4.0" height="1"/><rect x="610.6" y="-0" width="4.0" height="1"/><rect x="617.7" y="-0" width="4.0" height="1"/><rect x="624.8" y="-1" width="4.0" height="1"/><rect x="631.9" y="-1" width="4.0" height="1"/><rect x="639.0" y="-1" width="4.0" height="1"/><rect x="646.1" y="-1" width="4.0" height="1"/><rect x="653.2" y="-1" width="4.0" height="1"/><rect x="660.3" y="-1" width="4.0" height="1"/><rect x="667.4" y="-1" width="4.0" height="1"/><rect x="674.5" y="-1" width="4.0" height="1"/><rect x="681.6" y="-2" width="4.0" height="1"/><rect x="688.7" y="-2" width="4.0" height="1"/><rect x="695.8" y="-2" width="4.0" height="1"/><rect x="702.9" y="-2" width="4.0" height="1"/><rect x="710.0" y="-2" width="4.0" height="1"/><rect x="717.1" y="-2" width="4.0" height="1"/><rect x="724.2" y="-2" width="4.0" height="1"/><rect x="731.3" y="-2" width="4.0" height="1"/><rect x="738.4" y="-2" width="4.0" height="1"/><rect x="745.5" y="-2" width="4.0" height="1"/><rect x="752.6" y="-2" width="4.0" height="1"/><rect x="759.7" y="-2" width="4.0" height="1"/><rect x="766.8" y="-2" width="4.0" height="1"/><rect x="773.9" y="-2" width="4.0" height="1"/><rect x="781.0" y="-2" width="4.0" height="1"/><rect x="788.1" y="-2" width="4.0" height="1"/><rect x="795.2" y="-2" width="4.0" height="1"/><rect x="802.3" y="-2" width="4.0" height="1"/><rect x="809.4" y="-2" width="4.0" height="1"/><rect x="816.5" y="-1" width="4.0" height="1"/><rect x="823.6" y="-1" width="4.0" height="1"/><rect x="830.7" y="-1" width="4.0" height="1"/><rect x="837.8" y="-1" width="4.0" height="1"/><rect x="844.9" y="-1" width="4.0" height="1"/></g></svg>
<svg style="left:1108px;top:250px" width="414" height="2" viewBox="0 0 414 2"><g fill="#2a4a58" shape-rendering="crispEdges"><rect x="0.0" y="-0" width="5.0" height="1"/><rect x="7.1" y="-0" width="5.0" height="1"/><rect x="14.2" y="-0" width="5.0" height="1"/><rect x="21.3" y="-1" width="5.0" height="1"/><rect x="28.4" y="-1" width="5.0" height="1"/><rect x="35.5" y="-1" width="5.0" height="1"/><rect x="42.6" y="-1" width="5.0" height="1"/><rect x="49.7" y="-1" width="5.0" height="1"/><rect x="56.8" y="-1" width="5.0" height="1"/><rect x="63.9" y="-1" width="5.0" height="1"/><rect x="71.0" y="-1" width="5.0" height="1"/><rect x="78.1" y="-1" width="5.0" height="1"/><rect x="85.2" y="-1" width="5.0" height="1"/><rect x="92.3" y="-1" width="5.0" height="1"/><rect x="99.4" y="-1" width="5.0" height="1"/><rect x="106.5" y="-1" width="5.0" height="1"/><rect x="113.6" y="-1" width="5.0" height="1"/><rect x="120.7" y="-1" width="5.0" height="1"/><rect x="127.8" y="-1" width="5.0" height="1"/><rect x="134.9" y="-1" width="5.0" height="1"/><rect x="142.0" y="-1" width="5.0" height="1"/><rect x="149.1" y="-1" width="5.0" height="1"/><rect x="156.2" y="-1" width="5.0" height="1"/><rect x="163.3" y="-1" width="5.0" height="1"/><rect x="170.4" y="-0" width="5.0" height="1"/><rect x="177.5" y="-0" width="5.0" height="1"/><rect x="184.6" y="-0" width="5.0" height="1"/><rect x="191.7" y="0" width="5.0" height="1"/><rect x="198.8" y="0" width="5.0" height="1"/><rect x="205.9" y="0" width="5.0" height="1"/><rect x="213.0" y="1" width="5.0" height="1"/><rect x="220.1" y="1" width="5.0" height="1"/><rect x="227.2" y="1" width="5.0" height="1"/><rect x="234.3" y="1" width="5.0" height="1"/><rect x="241.4" y="1" width="5.0" height="1"/><rect x="248.5" y="1" width="5.0" height="1"/><rect x="255.6" y="1" width="5.0" height="1"/><rect x="262.7" y="1" width="5.0" height="1"/><rect x="269.8" y="1" width="5.0" height="1"/><rect x="276.9" y="1" width="5.0" height="1"/><rect x="284.0" y="1" width="5.0" height="1"/><rect x="291.1" y="1" width="5.0" height="1"/><rect x="298.2" y="1" width="5.0" height="1"/><rect x="305.3" y="1" width="5.0" height="1"/><rect x="312.4" y="1" width="5.0" height="1"/><rect x="319.5" y="1" width="5.0" height="1"/><rect x="326.6" y="1" width="5.0" height="1"/><rect x="333.7" y="1" width="5.0" height="1"/><rect x="340.8" y="1" width="5.0" height="1"/><rect x="347.9" y="1" width="5.0" height="1"/><rect x="355.0" y="1" width="5.0" height="1"/><rect x="362.1" y="0" width="5.0" height="1"/><rect x="369.2" y="0" width="5.0" height="1"/><rect x="376.3" y="0" width="5.0" height="1"/><rect x="383.4" y="-0" width="5.0" height="1"/><rect x="390.5" y="-0" width="5.0" height="1"/><rect x="397.6" y="-1" width="5.0" height="1"/><rect x="404.7" y="-1" width="5.0" height="1"/><rect x="411.8" y="-1" width="1.2" height="1"/></g></svg>
<div style="left:258px;top:264px;width:822px;height:41px;background:#00e5c8;overflow:hidden;"></div>
<div style="left:1080px;top:264px;width:28px;height:41px;background:#5af0ff;"></div>
<div style="left:1108px;top:264px;width:413px;height:41px;background:#00e5c8;overflow:hidden;"></div>
<svg style="left:1080px;top:264px" width="50" height="12" viewBox="0 0 50 12"><path d="M0 0 H50 L42 12 H0Z" fill="#08a493"/></svg>
<div class="t" style="left:1083px;top:265px;font-size:10px;color:#f0fff8;font-weight:bold;">Side G</div>
<div style="left:258px;top:264px;width:742px;height:41px;overflow:hidden;"><svg style="left:0;top:0" width="742" height="41"><g fill="#3a3f3e"><rect x="8.5" y="22" width="14" height="1"/><rect x="8.5" y="24" width="14" height="1"/><rect x="24.5" y="27" width="5" height="1"/><rect x="0.5" y="27" width="4" height="1"/><rect x="6.5" y="34" width="4" height="1"/><rect x="20.5" y="36" width="4" height="1"/><rect x="37.0" y="22" width="14" height="1"/><rect x="37.0" y="24" width="14" height="1"/><rect x="53.0" y="27" width="5" height="1"/><rect x="29.0" y="27" width="4" height="1"/><rect x="35.0" y="34" width="4" height="1"/><rect x="49.0" y="36" width="4" height="1"/><rect x="65.5" y="22" width="14" height="1"/><rect x="65.5" y="24" width="14" height="1"/><rect x="81.5" y="27" width="5" height="1"/><rect x="57.5" y="27" width="4" height="1"/><rect x="63.5" y="34" width="4" height="1"/><rect x="77.5" y="36" width="4" height="1"/><rect x="94.0" y="22" width="14" height="1"/><rect x="94.0" y="24" width="14" height="1"/><rect x="110.0" y="27" width="5" height="1"/><rect x="86.0" y="27" width="4" height="1"/><rect x="92.0" y="34" width="4" height="1"/><rect x="106.0" y="36" width="4" height="1"/><rect x="122.5" y="22.5" width="14" height="2"/><rect x="138.5" y="27" width="5" height="1"/><rect x="114.5" y="27" width="4" height="1"/><rect x="120.5" y="34" width="4" height="1"/><rect x="134.5" y="36" width="4" height="1"/><rect x="151.0" y="22.5" width="14" height="2"/><rect x="167.0" y="27" width="5" height="1"/><rect x="143.0" y="27" width="4" height="1"/><rect x="149.0" y="34" width="4" height="1"/><rect x="163.0" y="36" width="4" height="1"/><rect x="179.5" y="22" width="14" height="1"/><rect x="179.5" y="24" width="14" height="1"/><rect x="195.5" y="27" width="5" height="1"/><rect x="171.5" y="27" width="4" height="1"/><rect x="177.5" y="34" width="4" height="1"/><rect x="191.5" y="36" width="4" height="1"/><rect x="208.0" y="22" width="14" height="1"/><rect x="208.0" y="24" width="14" height="1"/><rect x="224.0" y="27" width="5" height="1"/><rect x="200.0" y="27" width="4" height="1"/><rect x="206.0" y="34" width="4" height="1"/><rect x="220.0" y="36" width="4" height="1"/><rect x="236.5" y="22" width="14" height="1"/><rect x="236.5" y="24" width="14" height="1"/><rect x="252.5" y="27" width="5" height="1"/><rect x="228.5" y="27" width="4" height="1"/><rect x="234.5" y="34" width="4" height="1"/><rect x="248.5" y="36" width="4" height="1"/><rect x="265.0" y="22" width="14" height="1"/><rect x="265.0" y="24" width="14" height="1"/><rect x="281.0" y="27" width="5" height="1"/><rect x="257.0" y="27" width="4" height="1"/><rect x="263.0" y="34" width="4" height="1"/><rect x="277.0" y="36" width="4" height="1"/><rect x="293.5" y="22" width="14" height="1"/><rect x="293.5" y="24" width="14" height="1"/><rect x="309.5" y="27" width="5" height="1"/><rect x="285.5" y="27" width="4" height="1"/><rect x="291.5" y="34" width="4" height="1"/><rect x="305.5" y="36" width="4" height="1"/><rect x="322.0" y="22" width="14" height="1"/><rect x="322.0" y="24" width="14" height="1"/><rect x="338.0" y="27" width="5" height="1"/><rect x="314.0" y="27" width="4" height="1"/><rect x="320.0" y="34" width="4" height="1"/><rect x="334.0" y="36" width="4" height="1"/><rect x="350.5" y="22.5" width="14" height="2"/><rect x="366.5" y="27" width="5" height="1"/><rect x="342.5" y="27" width="4" height="1"/><rect x="348.5" y="34" width="4" height="1"/><rect x="362.5" y="36" width="4" height="1"/><rect x="379.0" y="22.5" width="14" height="2"/><rect x="395.0" y="27" width="5" height="1"/><rect x="371.0" y="27" width="4" height="1"/><rect x="377.0" y="34" width="4" height="1"/><rect x="391.0" y="36" width="4" height="1"/><rect x="407.5" y="22" width="14" height="1"/><rect x="407.5" y="24" width="14" height="1"/><rect x="423.5" y="27" width="5" height="1"/><rect x="399.5" y="27" width="4" height="1"/><rect x="405.5" y="34" width="4" height="1"/><rect x="419.5" y="36" width="4" height="1"/><rect x="436.0" y="22" width="14" height="1"/><rect x="436.0" y="24" width="14" height="1"/><rect x="452.0" y="27" width="5" height="1"/><rect x="428.0" y="27" width="4" height="1"/><rect x="434.0" y="34" width="4" height="1"/><rect x="448.0" y="36" width="4" height="1"/><rect x="464.5" y="22" width="14" height="1"/><rect x="464.5" y="24" width="14" height="1"/><rect x="480.5" y="27" width="5" height="1"/><rect x="456.5" y="27" width="4" height="1"/><rect x="462.5" y="34" width="4" height="1"/><rect x="476.5" y="36" width="4" height="1"/><rect x="493.0" y="22" width="14" height="1"/><rect x="493.0" y="24" width="14" height="1"/><rect x="509.0" y="27" width="5" height="1"/><rect x="485.0" y="27" width="4" height="1"/><rect x="491.0" y="34" width="4" height="1"/><rect x="505.0" y="36" width="4" height="1"/><rect x="521.5" y="22" width="14" height="1"/><rect x="521.5" y="24" width="14" height="1"/><rect x="537.5" y="27" width="5" height="1"/><rect x="513.5" y="27" width="4" height="1"/><rect x="519.5" y="34" width="4" height="1"/><rect x="533.5" y="36" width="4" height="1"/><rect x="550.0" y="22" width="14" height="1"/><rect x="550.0" y="24" width="14" height="1"/><rect x="566.0" y="27" width="5" height="1"/><rect x="542.0" y="27" width="4" height="1"/><rect x="548.0" y="34" width="4" height="1"/><rect x="562.0" y="36" width="4" height="1"/><rect x="578.5" y="22.5" width="14" height="2"/><rect x="594.5" y="27" width="5" height="1"/><rect x="570.5" y="27" width="4" height="1"/><rect x="576.5" y="34" width="4" height="1"/><rect x="590.5" y="36" width="4" height="1"/><rect x="607.0" y="22.5" width="14" height="2"/><rect x="623.0" y="27" width="5" height="1"/><rect x="599.0" y="27" width="4" height="1"/><rect x="605.0" y="34" width="4" height="1"/><rect x="619.0" y="36" width="4" height="1"/><rect x="635.5" y="22" width="14" height="1"/><rect x="635.5" y="24" width="14" height="1"/><rect x="651.5" y="27" width="5" height="1"/><rect x="627.5" y="27" width="4" height="1"/><rect x="633.5" y="34" width="4" height="1"/><rect x="647.5" y="36" width="4" height="1"/><rect x="664.0" y="22" width="14" height="1"/><rect x="664.0" y="24" width="14" height="1"/><rect x="680.0" y="27" width="5" height="1"/><rect x="656.0" y="27" width="4" height="1"/><rect x="662.0" y="34" width="4" height="1"/><rect x="676.0" y="36" width="4" height="1"/><rect x="692.5" y="22" width="14" height="1"/><rect x="692.5" y="24" width="14" height="1"/><rect x="708.5" y="27" width="5" height="1"/><rect x="684.5" y="27" width="4" height="1"/><rect x="690.5" y="34" width="4" height="1"/><rect x="704.5" y="36" width="4" height="1"/><rect x="721.0" y="22" width="14" height="1"/><rect x="721.0" y="24" width="14" height="1"/><rect x="737.0" y="27" width="5" height="1"/><rect x="713.0" y="27" width="4" height="1"/><rect x="719.0" y="34" width="4" height="1"/><rect x="733.0" y="36" width="4" height="1"/></g></svg></div>
<div style="left:1108px;top:264px;width:413px;height:41px;overflow:hidden;"><svg style="left:0;top:0" width="413" height="41"><g fill="#3a3f3e"><rect x="13.5" y="22" width="14" height="1"/><rect x="13.5" y="24" width="14" height="1"/><rect x="29.5" y="27" width="5" height="1"/><rect x="5.5" y="27" width="4" height="1"/><rect x="11.5" y="34" width="4" height="1"/><rect x="25.5" y="36" width="4" height="1"/><rect x="42.0" y="22" width="14" height="1"/><rect x="42.0" y="24" width="14" height="1"/><rect x="58.0" y="27" width="5" height="1"/><rect x="34.0" y="27" width="4" height="1"/><rect x="40.0" y="34" width="4" height="1"/><rect x="54.0" y="36" width="4" height="1"/><rect x="70.5" y="22" width="14" height="1"/><rect x="70.5" y="24" width="14" height="1"/><rect x="86.5" y="27" width="5" height="1"/><rect x="62.5" y="27" width="4" height="1"/><rect x="68.5" y="34" width="4" height="1"/><rect x="82.5" y="36" width="4" height="1"/><rect x="99.0" y="22" width="14" height="1"/><rect x="99.0" y="24" width="14" height="1"/><rect x="115.0" y="27" width="5" height="1"/><rect x="91.0" y="27" width="4" height="1"/><rect x="97.0" y="34" width="4" height="1"/><rect x="111.0" y="36" width="4" height="1"/><rect x="127.5" y="22" width="14" height="1"/><rect x="127.5" y="24" width="14" height="1"/><rect x="143.5" y="27" width="5" height="1"/><rect x="119.5" y="27" width="4" height="1"/><rect x="125.5" y="34" width="4" height="1"/><rect x="139.5" y="36" width="4" height="1"/><rect x="156.0" y="22" width="14" height="1"/><rect x="156.0" y="24" width="14" height="1"/><rect x="172.0" y="27" width="5" height="1"/><rect x="148.0" y="27" width="4" height="1"/><rect x="154.0" y="34" width="4" height="1"/><rect x="168.0" y="36" width="4" height="1"/><rect x="184.5" y="22.5" width="14" height="2"/><rect x="200.5" y="27" width="5" height="1"/><rect x="176.5" y="27" width="4" height="1"/><rect x="182.5" y="34" width="4" height="1"/><rect x="196.5" y="36" width="4" height="1"/><rect x="213.0" y="22.5" width="14" height="2"/><rect x="229.0" y="27" width="5" height="1"/><rect x="205.0" y="27" width="4" height="1"/><rect x="211.0" y="34" width="4" height="1"/><rect x="225.0" y="36" width="4" height="1"/><rect x="241.5" y="22" width="14" height="1"/><rect x="241.5" y="24" width="14" height="1"/><rect x="257.5" y="27" width="5" height="1"/><rect x="233.5" y="27" width="4" height="1"/><rect x="239.5" y="34" width="4" height="1"/><rect x="253.5" y="36" width="4" height="1"/><rect x="270.0" y="22" width="14" height="1"/><rect x="270.0" y="24" width="14" height="1"/><rect x="286.0" y="27" width="5" height="1"/><rect x="262.0" y="27" width="4" height="1"/><rect x="268.0" y="34" width="4" height="1"/><rect x="282.0" y="36" width="4" height="1"/><rect x="298.5" y="22" width="14" height="1"/><rect x="298.5" y="24" width="14" height="1"/><rect x="314.5" y="27" width="5" height="1"/><rect x="290.5" y="27" width="4" height="1"/><rect x="296.5" y="34" width="4" height="1"/><rect x="310.5" y="36" width="4" height="1"/><rect x="327.0" y="22" width="14" height="1"/><rect x="327.0" y="24" width="14" height="1"/><rect x="343.0" y="27" width="5" height="1"/><rect x="319.0" y="27" width="4" height="1"/><rect x="325.0" y="34" width="4" height="1"/><rect x="339.0" y="36" width="4" height="1"/><rect x="355.5" y="22" width="14" height="1"/><rect x="355.5" y="24" width="14" height="1"/><rect x="371.5" y="27" width="5" height="1"/><rect x="347.5" y="27" width="4" height="1"/><rect x="353.5" y="34" width="4" height="1"/><rect x="367.5" y="36" width="4" height="1"/><rect x="384.0" y="22" width="14" height="1"/><rect x="384.0" y="24" width="14" height="1"/><rect x="400.0" y="27" width="5" height="1"/><rect x="376.0" y="27" width="4" height="1"/><rect x="382.0" y="34" width="4" height="1"/><rect x="396.0" y="36" width="4" height="1"/><rect x="412.5" y="22.5" width="14" height="2"/><rect x="428.5" y="27" width="5" height="1"/><rect x="404.5" y="27" width="4" height="1"/><rect x="410.5" y="34" width="4" height="1"/><rect x="424.5" y="36" width="4" height="1"/></g></svg></div>
<div style="left:258px;top:306px;width:822px;height:41px;background:#00ffff;overflow:hidden;"></div>
<div style="left:1080px;top:306px;width:28px;height:41px;background:#5cf4ff;"></div>
<div style="left:1108px;top:306px;width:413px;height:41px;background:#00ffff;overflow:hidden;"></div>
<svg style="left:1080px;top:306px" width="64" height="12" viewBox="0 0 64 12"><path d="M0 0 H64 L56 12 H0Z" fill="#08b0b0"/></svg>
<div class="t" style="left:1083px;top:307px;font-size:10px;color:#f0ffff;font-weight:bold;">Backing G</div>
<div style="left:258px;top:306px;width:742px;height:41px;overflow:hidden;"><svg style="left:0;top:0" width="742" height="41"><g fill="#3a3f3e"><rect x="0.0" y="21.5" width="14" height="3"/><rect x="21.0" y="21.5" width="7" height="3"/><rect x="0.0" y="26" width="28" height="1"/><rect x="8.0" y="34" width="4" height="1"/><rect x="15.0" y="36" width="5" height="1"/><rect x="57.0" y="21.5" width="14" height="3"/><rect x="78.0" y="21.5" width="7" height="3"/><rect x="57.0" y="26" width="28" height="1"/><rect x="57.0" y="24" width="28" height="1"/><rect x="65.0" y="34" width="4" height="1"/><rect x="72.0" y="36" width="5" height="1"/><rect x="114.0" y="21.5" width="14" height="3"/><rect x="135.0" y="21.5" width="7" height="3"/><rect x="114.0" y="26" width="28" height="1"/><rect x="122.0" y="34" width="4" height="1"/><rect x="129.0" y="36" width="5" height="1"/><rect x="171.0" y="21.5" width="14" height="3"/><rect x="192.0" y="21.5" width="7" height="3"/><rect x="171.0" y="26" width="28" height="1"/><rect x="171.0" y="24" width="28" height="1"/><rect x="179.0" y="34" width="4" height="1"/><rect x="186.0" y="36" width="5" height="1"/><rect x="228.0" y="21.5" width="14" height="3"/><rect x="249.0" y="21.5" width="7" height="3"/><rect x="228.0" y="26" width="28" height="1"/><rect x="236.0" y="34" width="4" height="1"/><rect x="243.0" y="36" width="5" height="1"/><rect x="285.0" y="21.5" width="14" height="3"/><rect x="306.0" y="21.5" width="7" height="3"/><rect x="285.0" y="26" width="28" height="1"/><rect x="285.0" y="24" width="28" height="1"/><rect x="293.0" y="34" width="4" height="1"/><rect x="300.0" y="36" width="5" height="1"/><rect x="342.0" y="21.5" width="14" height="3"/><rect x="363.0" y="21.5" width="7" height="3"/><rect x="342.0" y="26" width="28" height="1"/><rect x="350.0" y="34" width="4" height="1"/><rect x="357.0" y="36" width="5" height="1"/><rect x="399.0" y="21.5" width="14" height="3"/><rect x="420.0" y="21.5" width="7" height="3"/><rect x="399.0" y="26" width="28" height="1"/><rect x="399.0" y="24" width="28" height="1"/><rect x="407.0" y="34" width="4" height="1"/><rect x="414.0" y="36" width="5" height="1"/><rect x="456.0" y="21.5" width="14" height="3"/><rect x="477.0" y="21.5" width="7" height="3"/><rect x="456.0" y="26" width="28" height="1"/><rect x="464.0" y="34" width="4" height="1"/><rect x="471.0" y="36" width="5" height="1"/><rect x="513.0" y="21.5" width="14" height="3"/><rect x="534.0" y="21.5" width="7" height="3"/><rect x="513.0" y="26" width="28" height="1"/><rect x="513.0" y="24" width="28" height="1"/><rect x="521.0" y="34" width="4" height="1"/><rect x="528.0" y="36" width="5" height="1"/><rect x="570.0" y="21.5" width="14" height="3"/><rect x="591.0" y="21.5" width="7" height="3"/><rect x="570.0" y="26" width="28" height="1"/><rect x="578.0" y="34" width="4" height="1"/><rect x="585.0" y="36" width="5" height="1"/><rect x="627.0" y="21.5" width="14" height="3"/><rect x="648.0" y="21.5" width="7" height="3"/><rect x="627.0" y="26" width="28" height="1"/><rect x="627.0" y="24" width="28" height="1"/><rect x="635.0" y="34" width="4" height="1"/><rect x="642.0" y="36" width="5" height="1"/><rect x="684.0" y="21.5" width="14" height="3"/><rect x="705.0" y="21.5" width="7" height="3"/><rect x="684.0" y="26" width="28" height="1"/><rect x="692.0" y="34" width="4" height="1"/><rect x="699.0" y="36" width="5" height="1"/><rect x="741.0" y="21.5" width="14" height="3"/><rect x="762.0" y="21.5" width="7" height="3"/><rect x="741.0" y="26" width="28" height="1"/><rect x="741.0" y="24" width="28" height="1"/><rect x="749.0" y="34" width="4" height="1"/><rect x="756.0" y="36" width="5" height="1"/></g><path d="M28.0 21 L32.0 20 L36.0 22 L40.0 23 L44.0 22 L48.0 23 L53.0 24 L57.0 22 M85.0 21 L89.0 20 L93.0 22 L97.0 23 L101.0 22 L105.0 23 L110.0 24 L114.0 22 M142.0 21 L146.0 20 L150.0 22 L154.0 23 L158.0 22 L162.0 23 L167.0 24 L171.0 22 M199.0 21 L203.0 20 L207.0 22 L211.0 23 L215.0 22 L219.0 23 L224.0 24 L228.0 22 M256.0 21 L260.0 20 L264.0 22 L268.0 23 L272.0 22 L276.0 23 L281.0 24 L285.0 22 M313.0 21 L317.0 20 L321.0 22 L325.0 23 L329.0 22 L333.0 23 L338.0 24 L342.0 22 M370.0 21 L374.0 20 L378.0 22 L382.0 23 L386.0 22 L390.0 23 L395.0 24 L399.0 22 M427.0 21 L431.0 20 L435.0 22 L439.0 23 L443.0 22 L447.0 23 L452.0 24 L456.0 22 M484.0 21 L488.0 20 L492.0 22 L496.0 23 L500.0 22 L504.0 23 L509.0 24 L513.0 22 M541.0 21 L545.0 20 L549.0 22 L553.0 23 L557.0 22 L561.0 23 L566.0 24 L570.0 22 M598.0 21 L602.0 20 L606.0 22 L610.0 23 L614.0 22 L618.0 23 L623.0 24 L627.0 22 M655.0 21 L659.0 20 L663.0 22 L667.0 23 L671.0 22 L675.0 23 L680.0 24 L684.0 22 M712.0 21 L716.0 20 L720.0 22 L724.0 23 L728.0 22 L732.0 23 L737.0 24 L741.0 22 M769.0 21 L773.0 20 L777.0 22 L781.0 23 L785.0 22 L789.0 23 L794.0 24 L798.0 22" stroke="#3a3f3e" stroke-width="1" fill="none"/></svg></div>
<div style="left:1108px;top:306px;width:413px;height:41px;overflow:hidden;"><svg style="left:0;top:0" width="413" height="41"><g fill="#3a3f3e"><rect x="-52.0" y="21.5" width="14" height="3"/><rect x="-31.0" y="21.5" width="7" height="3"/><rect x="-52.0" y="26" width="28" height="1"/><rect x="-44.0" y="34" width="4" height="1"/><rect x="-37.0" y="36" width="5" height="1"/><rect x="5.0" y="21.5" width="14" height="3"/><rect x="26.0" y="21.5" width="7" height="3"/><rect x="5.0" y="26" width="28" height="1"/><rect x="5.0" y="24" width="28" height="1"/><rect x="13.0" y="34" width="4" height="1"/><rect x="20.0" y="36" width="5" height="1"/><rect x="62.0" y="21.5" width="14" height="3"/><rect x="83.0" y="21.5" width="7" height="3"/><rect x="62.0" y="26" width="28" height="1"/><rect x="70.0" y="34" width="4" height="1"/><rect x="77.0" y="36" width="5" height="1"/><rect x="119.0" y="21.5" width="14" height="3"/><rect x="140.0" y="21.5" width="7" height="3"/><rect x="119.0" y="26" width="28" height="1"/><rect x="119.0" y="24" width="28" height="1"/><rect x="127.0" y="34" width="4" height="1"/><rect x="134.0" y="36" width="5" height="1"/><rect x="176.0" y="21.5" width="14" height="3"/><rect x="197.0" y="21.5" width="7" height="3"/><rect x="176.0" y="26" width="28" height="1"/><rect x="184.0" y="34" width="4" height="1"/><rect x="191.0" y="36" width="5" height="1"/><rect x="233.0" y="21.5" width="14" height="3"/><rect x="254.0" y="21.5" width="7" height="3"/><rect x="233.0" y="26" width="28" height="1"/><rect x="233.0" y="24" width="28" height="1"/><rect x="241.0" y="34" width="4" height="1"/><rect x="248.0" y="36" width="5" height="1"/><rect x="290.0" y="21.5" width="14" height="3"/><rect x="311.0" y="21.5" width="7" height="3"/><rect x="290.0" y="26" width="28" height="1"/><rect x="298.0" y="34" width="4" height="1"/><rect x="305.0" y="36" width="5" height="1"/><rect x="347.0" y="21.5" width="14" height="3"/><rect x="368.0" y="21.5" width="7" height="3"/><rect x="347.0" y="26" width="28" height="1"/><rect x="347.0" y="24" width="28" height="1"/><rect x="355.0" y="34" width="4" height="1"/><rect x="362.0" y="36" width="5" height="1"/><rect x="404.0" y="21.5" width="14" height="3"/><rect x="425.0" y="21.5" width="7" height="3"/><rect x="404.0" y="26" width="28" height="1"/><rect x="412.0" y="34" width="4" height="1"/><rect x="419.0" y="36" width="5" height="1"/></g><path d="M-24.0 21 L-20.0 20 L-16.0 22 L-12.0 23 L-8.0 22 L-4.0 23 L1.0 24 L5.0 22 M33.0 21 L37.0 20 L41.0 22 L45.0 23 L49.0 22 L53.0 23 L58.0 24 L62.0 22 M90.0 21 L94.0 20 L98.0 22 L102.0 23 L106.0 22 L110.0 23 L115.0 24 L119.0 22 M147.0 21 L151.0 20 L155.0 22 L159.0 23 L163.0 22 L167.0 23 L172.0 24 L176.0 22 M204.0 21 L208.0 20 L212.0 22 L216.0 23 L220.0 22 L224.0 23 L229.0 24 L233.0 22 M261.0 21 L265.0 20 L269.0 22 L273.0 23 L277.0 22 L281.0 23 L286.0 24 L290.0 22 M318.0 21 L322.0 20 L326.0 22 L330.0 23 L334.0 22 L338.0 23 L343.0 24 L347.0 22 M375.0 21 L379.0 20 L383.0 22 L387.0 23 L391.0 22 L395.0 23 L400.0 24 L404.0 22 M432.0 21 L436.0 20 L440.0 22 L444.0 23 L448.0 22 L452.0 23 L457.0 24 L461.0 22" stroke="#3a3f3e" stroke-width="1" fill="none"/></svg></div>
<div style="left:258px;top:348px;width:508px;height:41px;background:#00e5c8;overflow:hidden;"></div>
<svg style="left:258px;top:348px" width="508" height="41" viewBox="0 0 508 41"><path d="M0 7 H422 L480 34 H487 V7 H508" stroke="#1fb9a3" stroke-width="1" fill="none"/><path d="M0 22 H508" stroke="#22cfb6" stroke-width="1"/><path d="M60 23 L58 33 L72 22 M86 24 Q92 34 110 33 L112 22 M258 23 L256 33 L269 22 M345 23 L343 33 L358 22 M372 23 L370 33 L384 22 M398 23 L396 33 L410 22 M425 23 L423 33 L437 22 " stroke="#1fb9a3" stroke-width="1" fill="none"/><path d="M0 23 H53 L56 24 H60 M95 22 H130 L135 21 H175 L180 22 H200 L205 23 H250 L255 22 H270 L275 21 H300 L305 22 H330 L335 21 H360 L365 20 H480" stroke="#2f5a55" stroke-width="1" fill="none" shape-rendering="crispEdges"/><g fill="#2f5a55"><rect x="22" y="36" width="5" height="1"/><rect x="50" y="36" width="10" height="1"/><rect x="107" y="36" width="5" height="1"/><rect x="135" y="36" width="5" height="1"/><rect x="279" y="36" width="8" height="1"/><rect x="307" y="36" width="10" height="1"/><rect x="335" y="36" width="7" height="1"/><rect x="362" y="36" width="10" height="1"/></g></svg>
<div style="left:1252px;top:348px;width:269px;height:41px;background:#00e5c8;overflow:hidden;"></div>
<svg style="left:1252px;top:348px" width="52" height="12" viewBox="0 0 52 12"><path d="M0 0 H52 L44 12 H0Z" fill="#08a493"/></svg>
<div class="t" style="left:1255px;top:349px;font-size:10px;color:#f0fff8;font-weight:bold;">G Solo</div>
<svg style="left:1252px;top:370px" width="270" height="12" viewBox="0 0 270 12"><path d="M30 2 L35 -1 H70 L100 0 M200 4 L230 2 L268 0" stroke="#2a5a55" stroke-width="1" fill="none"/><path d="M0 -8 H268" stroke="#22c8b0" stroke-width="1" fill="none"/></svg>
<div style="left:624px;top:390px;width:484px;height:41px;background:#6efc9e;overflow:hidden;"></div>
<svg style="left:624px;top:390px" width="58" height="12" viewBox="0 0 58 12"><path d="M0 0 H58 L50 12 H0Z" fill="#3d9a66"/></svg>
<div class="t" style="left:627px;top:391px;font-size:10px;color:#f0fff0;font-weight:bold;">G Solo L</div>
<svg style="left:624px;top:390px" width="484" height="41" viewBox="0 0 484 41"><path d="M0 21 H484" stroke="#4cc47e" stroke-width="1"/><path d="M83.0 21 L81.0 33 L87.0 22 M148.0 21 L146.0 33 L152.0 22 M168.0 21 L166.0 33 L172.0 22 M175.6 21 L173.6 33 L179.6 22 M197.4 21 L195.4 33 L201.4 22 M226.0 21 L224.0 33 L230.0 22 " stroke="#4cc47e" stroke-width="1" fill="none"/><path d="M28 20 H55 L60 21 H68 L72 22 H80 L86 23 H100 L105 24 H110 L115 23 H125 L130 22 H140 L150 23 H170 L175 22 H200 L205 23 H230 L240 22 H260 L265 23 H280 L290 24 H320 L325 22 H350 L355 23 H385 L390 21 H430 L435 23 H484" stroke="#3a4a40" stroke-width="1" fill="none"/><rect x="27" y="36" width="5" height="1" fill="#3a4a40"/></svg>
<div style="left:624px;top:432px;width:484px;height:41px;background:#a8fb8f;overflow:hidden;"></div>
<svg style="left:624px;top:432px" width="60" height="12" viewBox="0 0 60 12"><path d="M0 0 H60 L52 12 H0Z" fill="#6a9a58"/></svg>
<div class="t" style="left:627px;top:433px;font-size:10px;color:#f4fff0;font-weight:bold;">G Solo R</div>
<svg style="left:624px;top:432px" width="484" height="41" viewBox="0 0 484 41"><path d="M0 21 H484" stroke="#88d878" stroke-width="1"/><path d="M83.0 21 L81.0 33 L87.0 22 M148.0 21 L146.0 33 L152.0 22 M168.0 21 L166.0 33 L172.0 22 M175.6 21 L173.6 33 L179.6 22 M197.4 21 L195.4 33 L201.4 22 M226.0 21 L224.0 33 L230.0 22 " stroke="#88d878" stroke-width="1" fill="none"/><path d="M28 20 H55 L60 21 H68 L72 22 H80 L86 23 H100 L105 24 H110 L115 23 H125 L130 22 H140 L150 23 H170 L175 22 H200 L205 23 H230 L240 22 H260 L265 23 H280 L290 24 H320 L325 22 H350 L355 23 H385 L390 21 H430 L435 23 H484" stroke="#3a4a38" stroke-width="1" fill="none"/><rect x="27" y="36" width="5" height="1" fill="#3a4a38"/></svg>
<div style="left:258px;top:474px;width:1263px;height:41px;background:#00e5c8;overflow:hidden;"></div>
<svg style="left:1108px;top:474px" width="44" height="12" viewBox="0 0 44 12"><path d="M0 0 H44 L36 12 H0Z" fill="#08a493"/></svg>
<div class="t" style="left:1111px;top:475px;font-size:10px;color:#f0fff8;font-weight:bold;">Synth</div>
<div style="left:258px;top:491px;width:744px;height:2px;background:#3a4a48;"></div>
<div style="left:1108px;top:491px;width:413px;height:2px;background:#3a4a48;"></div>
<div style="left:258px;top:516px;width:1263px;height:38px;background:#0a97d6;overflow:hidden;"></div>
<svg style="left:1108px;top:516px" width="54" height="12" viewBox="0 0 54 12"><path d="M0 0 H54 L46 12 H0Z" fill="#0a6a9a"/></svg>
<div class="t" style="left:1111px;top:517px;font-size:10px;color:#f0f8ff;font-weight:bold;">Strings</div>
<div style="left:258px;top:532px;width:744px;height:2px;background:#c8d8e0;"></div>
<div style="left:1108px;top:532px;width:413px;height:2px;background:#c8d8e0;"></div>
<div style="left:1521px;top:176px;width:16px;height:378px;background:#232427;"></div>
<svg style="left:1524px;top:180px" width="10" height="7" viewBox="0 0 10 7"><path d="M0 7 L5 0 L10 7Z" fill="#5a5d62"/></svg>
<div style="left:1526px;top:196px;width:5px;height:216px;background:#5a5d62;border-radius:2px;"></div>
<svg style="left:1524px;top:543px" width="10" height="7" viewBox="0 0 10 7"><path d="M0 0 L5 7 L10 0Z" fill="#5a5d62"/></svg>
<div style="left:3px;top:554px;width:1534px;height:17px;background:#26282b;"></div>
<div style="left:3px;top:555px;width:48px;height:16px;background:#a82a2a;"></div>
<div class="t" style="left:7.0px;top:557px;font-size:12px;color:#fff;width:40px;text-align:center;">M</div>
<div style="left:100px;top:555px;width:1px;height:16px;background:#1c1d20;"></div>
<div class="t" style="left:55.0px;top:557px;font-size:12px;color:#fff;width:40px;text-align:center;">S</div>
<div style="left:148px;top:555px;width:1px;height:16px;background:#1c1d20;"></div>
<svg style="left:118px;top:557px" width="12" height="12" viewBox="0 0 12 12"><path d="M3.5 3 A4.6 4.6 0 1 0 8.5 3" stroke="#3aa0e0" stroke-width="1.6" fill="none"/><path d="M6 0.5 V6" stroke="#3aa0e0" stroke-width="1.6"/></svg>
<div class="t" style="left:175.0px;top:557px;font-size:11px;color:#bbb;width:11px;left:179.5px;transform:scaleX(0.909);transform-origin:50% 0;">小</div>
<svg style="left:220px;top:560px" width="10" height="6" viewBox="0 0 10 6"><path d="M0 0 H10 L5.0 6Z" fill="#888"/></svg>
<svg style="left:241px;top:557px" width="10" height="11" viewBox="0 0 10 11"><g fill="#888"><rect width="10" height="2"/><rect y="4" width="10" height="2"/><rect y="8" width="10" height="2"/></g></svg>
<svg style="left:264px;top:558px" width="7" height="10" viewBox="0 0 7 10"><path d="M7 0 V10 L0 5Z" fill="#777"/></svg>
<div style="left:683px;top:559px;width:153px;height:5px;background:#6a6d72;border-radius:2px;"></div>
<svg style="left:1397px;top:558px" width="7" height="10" viewBox="0 0 7 10"><path d="M0 0 V10 L7 5Z" fill="#777"/></svg>
<svg style="left:1418px;top:557px" width="10" height="8" viewBox="0 0 10 8"><path d="M0 8 L5 0 L10 8Z" fill="#777"/></svg>
<div style="left:1430px;top:562px;width:57px;height:1px;background:#888;"></div>
<div style="left:1433px;top:558px;width:3px;height:9px;background:#888;"></div>
<svg style="left:1498px;top:556px" width="15" height="11" viewBox="0 0 15 11"><path d="M0 11 L7.5 0 L15 11Z" fill="#888"/></svg>
<svg style="left:1519px;top:556px" width="8" height="12" viewBox="0 0 8 12"><g fill="#666"><rect x="2" width="6" height="2"/><rect x="2" y="4" width="6" height="2"/><rect y="9" width="3" height="2"/></g></svg>
<div style="left:1540px;top:86px;width:380px;height:942px;background:#151618;"></div>
<div style="left:1543px;top:89px;width:375px;height:938px;background:#222427;"></div>
<div style="left:1543px;top:89px;width:375px;height:30px;background:#202226;"></div>
<svg style="left:1548px;top:98px" width="15" height="13" viewBox="0 0 15 13"><path d="M7.5 0 L15 7 H12.5 V13 H9 V9 H6 V13 H2.5 V7 H0Z" fill="#bbb"/></svg>
<div style="left:1651px;top:90px;width:50px;height:30px;background:#45484e;background:linear-gradient(#45484e,#4a4d53);"></div>
<div class="t" style="left:1574px;top:99px;font-size:12px;color:#d8d8d8;transform:scaleX(0.648);transform-origin:0 0;">インストゥルメント</div>
<div class="t" style="left:1657px;top:99px;font-size:12px;color:#f0f0f0;transform:scaleX(0.633);transform-origin:0 0;">エフェクト</div>
<div class="t" style="left:1707px;top:99px;font-size:12px;color:#d8d8d8;transform:scaleX(0.694);transform-origin:0 0;">ループ</div>
<div class="t" style="left:1744px;top:99px;font-size:12px;color:#d8d8d8;transform:scaleX(0.667);transform-origin:0 0;">ファイル</div>
<div class="t" style="left:1788px;top:99px;font-size:12px;color:#d8d8d8;transform:scaleX(0.646);transform-origin:0 0;">クラウド</div>
<div class="t" style="left:1832px;top:99px;font-size:12px;color:#d8d8d8;transform:scaleX(0.667);transform-origin:0 0;">ショップ</div>
<div class="t" style="left:1870px;top:99px;font-size:12px;color:#d8d8d8;transform:scaleX(0.750);transform-origin:0 0;">プ·</div>
<svg style="left:1885px;top:101px" width="9" height="6" viewBox="0 0 9 6"><path d="M0 0 H9 L4.5 6Z" fill="#888"/></svg>
<svg style="left:1900px;top:98px" width="13" height="13" viewBox="0 0 13 13"><circle cx="5" cy="5" r="3.8" stroke="#bbb" stroke-width="1.8" fill="none"/><path d="M8 8 L12 12" stroke="#bbb" stroke-width="2.2"/></svg>
<div style="left:1543px;top:120px;width:375px;height:20px;background:#4a4d53;"></div>
<div class="t" style="left:1549px;top:124px;font-size:11px;color:#bfc2c6;transform:scaleX(0.892);transform-origin:0 0;">並び替え:</div>
<div class="t" style="left:1611px;top:124px;font-size:11px;color:#9a9da2;transform:scaleX(0.955);transform-origin:0 0;">全体</div>
<div class="t" style="left:1645px;top:124px;font-size:11px;color:#9a9da2;transform:scaleX(0.727);transform-origin:0 0;">フォルダー</div>
<div class="t" style="left:1697px;top:124px;font-size:11px;color:#f0f0f0;transform:scaleX(0.750);transform-origin:0 0;">ベンダー</div>
<div class="t" style="left:1743px;top:124px;font-size:11px;color:#9a9da2;transform:scaleX(0.758);transform-origin:0 0;">タイプ</div>
<svg style="left:1860px;top:124px" width="12" height="12" viewBox="0 0 12 12"><path d="M1.2 3.2 A3.6 3.6 0 0 0 6.2 7.4 L10.3 11.5 Q11.3 12.3 12 11.5 Q12.6 10.7 11.8 9.9 L7.7 5.8 A3.6 3.6 0 0 0 3.4 1 L5.4 3 L4.9 4.7 L3.2 5.2 Z" fill="#ccc" transform="scale(0.923)"/></svg>
<svg style="left:1881px;top:124px" width="12" height="11" viewBox="0 0 12 11"><rect x="0.8" y="0.8" width="10.4" height="9.4" stroke="#eee" stroke-width="1.6" fill="none"/><rect x="1" y="1" width="10" height="3" fill="#eee"/></svg>
<svg style="left:1900px;top:123px" width="13" height="13" viewBox="0 0 13 13"><g fill="#eee"><rect width="13" height="2.4"/><rect x="3" y="5" width="10" height="2.4"/><rect x="6" y="10" width="7" height="2.4"/></g></svg>
<div style="left:1543px;top:140px;width:375px;height:21px;background:#393c41;"></div>
<div class="t" style="left:1548px;top:145px;font-size:12px;color:#e8e8e8;transform:scaleX(0.633);transform-origin:0 0;">エフェクト</div>
<svg style="left:1596px;top:146px" width="6" height="10" viewBox="0 0 6 10"><path d="M1 1 L5 5 L1 9" stroke="#3aa0e8" stroke-width="1.4" fill="none"/></svg>
<svg style="left:1572px;top:168px" width="6" height="10" viewBox="0 0 6 10"><path d="M0 0.5 L5 5 L0 9.5Z" fill="#d0d0d0"/></svg>
<svg style="left:1580px;top:165px" width="16" height="16" viewBox="0 0 16 16"><text x="8" y="8" font-size="8.5" font-weight="bold" fill="#ddd" text-anchor="middle" font-family="Liberation Sans">FX</text><rect x="1.5" y="10.5" width="6" height="4" rx="2" stroke="#ccc" stroke-width="1.2" fill="none"/><rect x="8.5" y="10.5" width="6" height="4" rx="2" stroke="#ccc" stroke-width="1.2" fill="none"/></svg>
<div class="t" style="left:1601px;top:167px;font-size:12.5px;color:#d4d6d8;transform:scaleX(0.750);transform-origin:0 0;">FXチェーン</div>
<svg style="left:1572px;top:190px" width="6" height="10" viewBox="0 0 6 10"><path d="M0 0.5 L5 5 L0 9.5Z" fill="#d0d0d0"/></svg>
<svg style="left:1580px;top:188px" width="17" height="13" viewBox="0 0 17 13"><path d="M0 1 H6 L7.5 2.5 H17 V13 H0Z" fill="#c8cacd"/><g fill="#777"><rect x="5" y="8" width="1.5" height="4"/><rect x="8" y="6" width="1.5" height="6"/><rect x="11" y="9" width="1.5" height="3"/></g></svg>
<div class="t" style="left:1601px;top:189px;font-size:12.5px;color:#d4d6d8;transform:scaleX(0.706);transform-origin:0 0;">ミックスFX</div>
<svg style="left:1572px;top:212px" width="6" height="10" viewBox="0 0 6 10"><path d="M0 0.5 L5 5 L0 9.5Z" fill="#d0d0d0"/></svg>
<svg style="left:1580px;top:209px" width="16" height="16" viewBox="0 0 16 16"><path d="M8 1 L10 6 L15.5 6.3 L11.3 9.8 L12.7 15 L8 12 L3.3 15 L4.7 9.8 L0.5 6.3 L6 6Z" stroke="#ccc" stroke-width="1.3" fill="none"/></svg>
<div class="t" style="left:1601px;top:211px;font-size:12.5px;color:#d4d6d8;transform:scaleX(0.785);transform-origin:0 0;">お気に入り</div>
<svg style="left:1572px;top:234px" width="6" height="10" viewBox="0 0 6 10"><path d="M0 0.5 L5 5 L0 9.5Z" fill="#d0d0d0"/></svg>
<svg style="left:1580px;top:231px" width="16" height="16" viewBox="0 0 16 16"><circle cx="8" cy="8" r="6.8" stroke="#ccc" stroke-width="1.4" fill="none"/><path d="M8 3.5 V8 L11 10.5" stroke="#ccc" stroke-width="1.4" fill="none"/><path d="M1 3 L3 1" stroke="#ccc" stroke-width="1.3"/></svg>
<div class="t" style="left:1601px;top:233px;font-size:12.5px;color:#d4d6d8;transform:scaleX(0.835);transform-origin:0 0;">最近使った項目</div>
<svg style="left:1572px;top:256px" width="6" height="10" viewBox="0 0 6 10"><path d="M0 0.5 L5 5 L0 9.5Z" fill="#d0d0d0"/></svg>
<svg style="left:1580px;top:254px" width="17" height="13" viewBox="0 0 17 13"><path d="M0 1 Q0 0 1 0 H6 L7.5 2 H16 Q17 2 17 3 V12 Q17 13 16 13 H1 Q0 13 0 12Z" fill="#c8cacd"/><rect x="0" y="3.5" width="17" height="9.5" fill="#d8dadd"/></svg>
<div class="t" style="left:1601px;top:255px;font-size:12.5px;color:#d4d6d8;">Aegean Music</div>
<svg style="left:1572px;top:278px" width="6" height="10" viewBox="0 0 6 10"><path d="M0 0.5 L5 5 L0 9.5Z" fill="#d0d0d0"/></svg>
<svg style="left:1580px;top:276px" width="17" height="13" viewBox="0 0 17 13"><path d="M0 1 Q0 0 1 0 H6 L7.5 2 H16 Q17 2 17 3 V12 Q17 13 16 13 H1 Q0 13 0 12Z" fill="#c8cacd"/><rect x="0" y="3.5" width="17" height="9.5" fill="#d8dadd"/></svg>
<div class="t" style="left:1601px;top:277px;font-size:12.5px;color:#d4d6d8;">Audiority</div>
<svg style="left:1572px;top:300px" width="6" height="10" viewBox="0 0 6 10"><path d="M0 0.5 L5 5 L0 9.5Z" fill="#d0d0d0"/></svg>
<svg style="left:1580px;top:298px" width="17" height="13" viewBox="0 0 17 13"><path d="M0 1 Q0 0 1 0 H6 L7.5 2 H16 Q17 2 17 3 V12 Q17 13 16 13 H1 Q0 13 0 12Z" fill="#c8cacd"/><rect x="0" y="3.5" width="17" height="9.5" fill="#d8dadd"/></svg>
<div class="t" style="left:1601px;top:299px;font-size:12.5px;color:#d4d6d8;">Blue Cat Audio</div>
<svg style="left:1572px;top:322px" width="6" height="10" viewBox="0 0 6 10"><path d="M0 0.5 L5 5 L0 9.5Z" fill="#d0d0d0"/></svg>
<svg style="left:1580px;top:320px" width="17" height="13" viewBox="0 0 17 13"><path d="M0 1 Q0 0 1 0 H6 L7.5 2 H16 Q17 2 17 3 V12 Q17 13 16 13 H1 Q0 13 0 12Z" fill="#c8cacd"/><rect x="0" y="3.5" width="17" height="9.5" fill="#d8dadd"/></svg>
<div class="t" style="left:1601px;top:321px;font-size:12.5px;color:#d4d6d8;">Celemony</div>
<svg style="left:1572px;top:344px" width="6" height="10" viewBox="0 0 6 10"><path d="M0 0.5 L5 5 L0 9.5Z" fill="#d0d0d0"/></svg>
<svg style="left:1580px;top:342px" width="17" height="13" viewBox="0 0 17 13"><path d="M0 1 Q0 0 1 0 H6 L7.5 2 H16 Q17 2 17 3 V12 Q17 13 16 13 H1 Q0 13 0 12Z" fill="#c8cacd"/><rect x="0" y="3.5" width="17" height="9.5" fill="#d8dadd"/></svg>
<div class="t" style="left:1601px;top:343px;font-size:12.5px;color:#d4d6d8;">IK Multimedia</div>
<svg style="left:1572px;top:366px" width="6" height="10" viewBox="0 0 6 10"><path d="M0 0.5 L5 5 L0 9.5Z" fill="#d0d0d0"/></svg>
<svg style="left:1580px;top:364px" width="17" height="13" viewBox="0 0 17 13"><path d="M0 1 Q0 0 1 0 H6 L7.5 2 H16 Q17 2 17 3 V12 Q17 13 16 13 H1 Q0 13 0 12Z" fill="#c8cacd"/><rect x="0" y="3.5" width="17" height="9.5" fill="#d8dadd"/></svg>
<div class="t" style="left:1601px;top:365px;font-size:12.5px;color:#d4d6d8;">iZotope</div>
<svg style="left:1571px;top:389px" width="8" height="8" viewBox="0 0 8 8"><path d="M7 0 V7 H0Z" fill="#d0d0d0"/></svg>
<svg style="left:1580px;top:386px" width="17" height="13" viewBox="0 0 17 13"><path d="M0 1 H6 L7.5 3 H15 V5 H4 L1 12 H0Z" fill="#c8cacd"/><path d="M3.5 5.5 H17 L14 12 H0.5Z" fill="#d8dadd"/></svg>
<div class="t" style="left:1601px;top:387px;font-size:12.5px;color:#d4d6d8;">iZotope, Inc.</div>
<svg style="left:1583px;top:411px" width="8" height="8" viewBox="0 0 8 8"><path d="M7 0 V7 H0Z" fill="#d0d0d0"/></svg>
<svg style="left:1592px;top:407px" width="16" height="17" viewBox="0 0 16 17"><rect width="16" height="17" rx="1.5" fill="#4a4d52"/><text x="8" y="8.5" font-size="8.5" font-weight="bold" fill="#e0e0e0" text-anchor="middle" font-family="Liberation Sans">FX</text><rect x="1.5" y="10" width="13" height="6" fill="#8a8d92"/><path d="M4 13 L6 11 H8 L6 13 H8 L10 11 H12 L10 13" stroke="#222" stroke-width="1" fill="none"/></svg>
<div class="t" style="left:1613px;top:409px;font-size:12.5px;color:#d4d6d8;">Ozone Imager 2</div>
<svg style="left:1604px;top:429px" width="16" height="16" viewBox="0 0 16 16"><rect width="16" height="16" rx="2" fill="#55585d"/><circle cx="8" cy="8" r="4.5" stroke="#999" stroke-width="1.2" fill="none"/><path d="M8 8 L10 5" stroke="#999" stroke-width="1.2"/></svg>
<div class="t" style="left:1625px;top:431px;font-size:12.5px;color:#d4d6d8;">Max width 100%</div>
<svg style="left:1604px;top:451px" width="16" height="16" viewBox="0 0 16 16"><rect width="16" height="16" rx="2" fill="#55585d"/><circle cx="8" cy="8" r="4.5" stroke="#999" stroke-width="1.2" fill="none"/><path d="M8 8 L10 5" stroke="#999" stroke-width="1.2"/></svg>
<div class="t" style="left:1625px;top:453px;font-size:12.5px;color:#d4d6d8;">Width 50%</div>
<svg style="left:1584px;top:476px" width="6" height="10" viewBox="0 0 6 10"><path d="M0 0.5 L5 5 L0 9.5Z" fill="#d0d0d0"/></svg>
<svg style="left:1592px;top:473px" width="16" height="17" viewBox="0 0 16 17"><rect width="16" height="17" rx="1.5" fill="#4a4d52"/><text x="8" y="8.5" font-size="8.5" font-weight="bold" fill="#e0e0e0" text-anchor="middle" font-family="Liberation Sans">FX</text><rect x="1.5" y="10" width="13" height="6" fill="#8a8d92"/><text x="8" y="15.5" font-size="6" font-weight="bold" fill="#222" text-anchor="middle" font-family="Liberation Sans">VST</text></svg>
<div class="t" style="left:1613px;top:475px;font-size:12.5px;color:#d4d6d8;">Ozone Imager 2</div>
<svg style="left:1584px;top:498px" width="6" height="10" viewBox="0 0 6 10"><path d="M0 0.5 L5 5 L0 9.5Z" fill="#d0d0d0"/></svg>
<svg style="left:1592px;top:495px" width="16" height="17" viewBox="0 0 16 17"><rect width="16" height="17" rx="1.5" fill="#4a4d52"/><text x="8" y="8.5" font-size="8.5" font-weight="bold" fill="#e0e0e0" text-anchor="middle" font-family="Liberation Sans">FX</text><rect x="1.5" y="10" width="13" height="6" fill="#8a8d92"/><path d="M4 13 L6 11 H8 L6 13 H8 L10 11 H12 L10 13" stroke="#222" stroke-width="1" fill="none"/></svg>
<div class="t" style="left:1613px;top:497px;font-size:12.5px;color:#d4d6d8;">Vocal Doubler</div>
<svg style="left:1584px;top:520px" width="6" height="10" viewBox="0 0 6 10"><path d="M0 0.5 L5 5 L0 9.5Z" fill="#d0d0d0"/></svg>
<svg style="left:1592px;top:517px" width="16" height="17" viewBox="0 0 16 17"><rect width="16" height="17" rx="1.5" fill="#4a4d52"/><text x="8" y="8.5" font-size="8.5" font-weight="bold" fill="#e0e0e0" text-anchor="middle" font-family="Liberation Sans">FX</text><rect x="1.5" y="10" width="13" height="6" fill="#8a8d92"/><text x="8" y="15.5" font-size="6" font-weight="bold" fill="#222" text-anchor="middle" font-family="Liberation Sans">VST</text></svg>
<div class="t" style="left:1613px;top:519px;font-size:12.5px;color:#d4d6d8;">Vocal Doubler</div>
<svg style="left:1572px;top:542px" width="6" height="10" viewBox="0 0 6 10"><path d="M0 0.5 L5 5 L0 9.5Z" fill="#d0d0d0"/></svg>
<svg style="left:1580px;top:540px" width="17" height="13" viewBox="0 0 17 13"><path d="M0 1 Q0 0 1 0 H6 L7.5 2 H16 Q17 2 17 3 V12 Q17 13 16 13 H1 Q0 13 0 12Z" fill="#c8cacd"/><rect x="0" y="3.5" width="17" height="9.5" fill="#d8dadd"/></svg>
<div class="t" style="left:1601px;top:541px;font-size:12.5px;color:#d4d6d8;">Kuassa, Inc.</div>
<svg style="left:1572px;top:564px" width="6" height="10" viewBox="0 0 6 10"><path d="M0 0.5 L5 5 L0 9.5Z" fill="#d0d0d0"/></svg>
<svg style="left:1580px;top:562px" width="17" height="13" viewBox="0 0 17 13"><path d="M0 1 Q0 0 1 0 H6 L7.5 2 H16 Q17 2 17 3 V12 Q17 13 16 13 H1 Q0 13 0 12Z" fill="#c8cacd"/><rect x="0" y="3.5" width="17" height="9.5" fill="#d8dadd"/></svg>
<div class="t" style="left:1601px;top:563px;font-size:12.5px;color:#d4d6d8;">MeldaProduction</div>
<svg style="left:1571px;top:587px" width="8" height="8" viewBox="0 0 8 8"><path d="M7 0 V7 H0Z" fill="#d0d0d0"/></svg>
<svg style="left:1580px;top:583px" width="17" height="16" viewBox="0 0 17 16"><ellipse cx="8.5" cy="8" rx="8" ry="7.5" fill="#d0d0d0"/><g stroke="#222427" stroke-width="1.3"><path d="M3.5 3 V13 M6.5 2 V14 M9.5 2 V14 M12.5 3 V13"/></g><path d="M2 8 L4 5 L6 11 L8 4 L10 12 L12 5 L14 9" stroke="#222427" stroke-width="1.2" fill="none"/></svg>
<div class="t" style="left:1601px;top:585px;font-size:12.5px;color:#d4d6d8;">PreSonus</div>
<svg style="left:1584px;top:608px" width="6" height="10" viewBox="0 0 6 10"><path d="M0 0.5 L5 5 L0 9.5Z" fill="#d0d0d0"/></svg>
<svg style="left:1592px;top:605px" width="16" height="16" viewBox="0 0 16 16"><rect width="16" height="16" rx="2" fill="#4a4d52"/><text x="8" y="12" font-size="10" font-weight="bold" fill="#e0e0e0" text-anchor="middle" font-family="Liberation Sans">FX</text></svg>
<div class="t" style="left:1613px;top:607px;font-size:12.5px;color:#d4d6d8;">Ampire</div>
<svg style="left:1584px;top:740px" width="6" height="10" viewBox="0 0 6 10"><path d="M0 0.5 L5 5 L0 9.5Z" fill="#d0d0d0"/></svg>
<svg style="left:1592px;top:737px" width="16" height="16" viewBox="0 0 16 16"><rect width="16" height="16" rx="2" fill="#4a4d52"/><text x="8" y="12" font-size="10" font-weight="bold" fill="#e0e0e0" text-anchor="middle" font-family="Liberation Sans">FX</text></svg>
<div class="t" style="left:1613px;top:739px;font-size:12.5px;color:#d4d6d8;">Analog Delay</div>
<svg style="left:1584px;top:826px" width="6" height="10" viewBox="0 0 6 10"><path d="M0 0.5 L5 5 L0 9.5Z" fill="#d0d0d0"/></svg>
<svg style="left:1592px;top:823px" width="16" height="16" viewBox="0 0 16 16"><rect width="16" height="16" rx="2" fill="#4a4d52"/><text x="8" y="12" font-size="10" font-weight="bold" fill="#e0e0e0" text-anchor="middle" font-family="Liberation Sans">FX</text></svg>
<div class="t" style="left:1613px;top:825px;font-size:12.5px;color:#d4d6d8;">Autofilter</div>
<svg style="left:1584px;top:897px" width="6" height="10" viewBox="0 0 6 10"><path d="M0 0.5 L5 5 L0 9.5Z" fill="#d0d0d0"/></svg>
<svg style="left:1592px;top:894px" width="16" height="16" viewBox="0 0 16 16"><rect width="16" height="16" rx="2" fill="#4a4d52"/><text x="8" y="12" font-size="10" font-weight="bold" fill="#e0e0e0" text-anchor="middle" font-family="Liberation Sans">FX</text></svg>
<div class="t" style="left:1613px;top:896px;font-size:12.5px;color:#d4d6d8;">Beat Delay</div>
<div style="left:1543px;top:250px;width:358px;height:1px;background:#44474c;"></div>
<svg style="left:1904px;top:166px" width="10" height="6" viewBox="0 0 10 6"><path d="M0 6 L5 0 L10 6Z" fill="#555"/></svg>
<div style="left:1906px;top:180px;width:4px;height:156px;background:#55585c;border-radius:2px;"></div>
<svg style="left:1904px;top:905px" width="10" height="6" viewBox="0 0 10 6"><path d="M0 0 L5 6 L10 0Z" fill="#555"/></svg>
<div style="left:1592px;top:629px;width:128px;height:98px;background:#1e1e20;"></div>
<div style="left:1592px;top:629px;width:128px;height:5px;background:#2c2c30;"></div>
<div style="left:1592px;top:634px;width:128px;height:32px;background:#262628;"></div>
<div style="left:1613px;top:640px;width:50px;height:21px;background:#0e0e0e;border:2px solid #c9a95a;border-radius:2px;"></div>
<div style="left:1617px;top:644px;width:10px;height:7px;background:#d8d8d8;"></div>
<div style="left:1617px;top:655px;width:42px;height:3px;background:#b89a4a;"></div>
<div style="left:1687px;top:640px;width:19px;height:21px;background:#aca69a;border-radius:1px;"></div>
<div style="left:1592px;top:666px;width:128px;height:20px;background:#c6a547;"></div>
<div style="left:1592px;top:684px;width:128px;height:2px;background:#7a6428;"></div>
<svg style="left:1630.0px;top:671px" width="8" height="8" viewBox="0 0 8 8"><circle cx="4" cy="4" r="3.6" fill="#f0f0f0" stroke="#444" stroke-width="0.7"/></svg>
<svg style="left:1642.5px;top:671px" width="8" height="8" viewBox="0 0 8 8"><circle cx="4" cy="4" r="3.6" fill="#f0f0f0" stroke="#444" stroke-width="0.7"/></svg>
<svg style="left:1655.0px;top:671px" width="8" height="8" viewBox="0 0 8 8"><circle cx="4" cy="4" r="3.6" fill="#f0f0f0" stroke="#444" stroke-width="0.7"/></svg>
<svg style="left:1667.5px;top:671px" width="8" height="8" viewBox="0 0 8 8"><circle cx="4" cy="4" r="3.6" fill="#f0f0f0" stroke="#444" stroke-width="0.7"/></svg>
<svg style="left:1680.0px;top:671px" width="8" height="8" viewBox="0 0 8 8"><circle cx="4" cy="4" r="3.6" fill="#f0f0f0" stroke="#444" stroke-width="0.7"/></svg>
<svg style="left:1692.5px;top:671px" width="8" height="8" viewBox="0 0 8 8"><circle cx="4" cy="4" r="3.6" fill="#f0f0f0" stroke="#444" stroke-width="0.7"/></svg>
<svg style="left:1697px;top:670px" width="6" height="10" viewBox="0 0 6 10"><path d="M1 0 L5 9" stroke="#e05020" stroke-width="2.5"/></svg>
<svg style="left:1596px;top:673px" width="6" height="6" viewBox="0 0 6 6"><circle cx="3" cy="3" r="3" fill="#e44"/></svg>
<div style="left:1592px;top:686px;width:128px;height:41px;background:#262628;"></div>
<div style="left:1596px;top:690px;width:19px;height:35px;background:#1fae7a;border-radius:2px;"></div>
<div style="left:1600px;top:709px;width:11px;height:8px;background:#e8f0e8;"></div>
<div style="left:1617px;top:689px;width:24px;height:36px;background:#8e8e92;border-radius:2px;"></div>
<div style="left:1619px;top:702px;width:20px;height:6px;background:#b03030;"></div>
<div style="left:1645px;top:689px;width:43px;height:36px;background:#c2bea8;border-radius:3px;"></div>
<div style="left:1649px;top:693px;width:35px;height:10px;background:#f0f0e8;"></div>
<div style="left:1691px;top:690px;width:2px;height:34px;background:#aaa;"></div>
<div style="left:1697px;top:690px;width:19px;height:35px;background:#7a1520;border-radius:2px;"></div>
<div style="left:1592px;top:762px;width:94px;height:52px;background:#151517;border-radius:2px;"></div>
<div style="left:1594px;top:764px;width:29px;height:23px;background:#2a2f66;"></div>
<div style="left:1594px;top:764px;width:29px;height:2px;background:#5a6ad8;"></div>
<div style="left:1624px;top:764px;width:27px;height:23px;background:#22502f;"></div>
<div style="left:1624px;top:764px;width:27px;height:2px;background:#4ac060;"></div>
<div style="left:1652px;top:764px;width:32px;height:23px;background:#101012;"></div>
<div style="left:1653px;top:765px;width:30px;height:12px;background:#f2f2f2;"></div>
<svg style="left:1653px;top:766px" width="30" height="10" viewBox="0 0 30 10"><g stroke="#111" stroke-width="1.2" fill="none"><circle cx="4" cy="3" r="2"/><circle cx="10" cy="3" r="2"/><circle cx="16" cy="3" r="2"/><circle cx="22" cy="3" r="2"/><circle cx="4" cy="8" r="2"/><circle cx="10" cy="8" r="2"/><circle cx="16" cy="8" r="2"/><circle cx="22" cy="8" r="2"/></g></svg>
<svg style="left:1652px;top:777px" width="32" height="10" viewBox="0 0 32 10"><path d="M0 10 L32 2 V5 L0 10Z" fill="#e84a3a"/><path d="M0 10 L32 5 V7 L0 10Z" fill="#f0c040"/><path d="M0 10 L32 7 V9 L0 10Z" fill="#40b0e0"/><path d="M8 10 L32 0 V2 L8 10Z" fill="#c040c0"/></svg>
<div style="left:1594px;top:788px;width:30px;height:24px;background:#2c2c14;"></div>
<div style="left:1594px;top:788px;width:30px;height:2px;background:#d8c838;"></div>
<div style="left:1625px;top:788px;width:26px;height:24px;background:#2a2014;"></div>
<div style="left:1625px;top:788px;width:26px;height:2px;background:#e88a28;"></div>
<div style="left:1652px;top:788px;width:32px;height:24px;background:#3a1416;"></div>
<div style="left:1652px;top:788px;width:32px;height:2px;background:#d83838;"></div>
<svg style="left:1599px;top:768px" width="8" height="8" viewBox="0 0 8 8"><circle cx="4" cy="4" r="3.6" fill="#d8d8d8" stroke="#222" stroke-width="1"/><path d="M4 4 L4 1" stroke="#222" stroke-width="1"/></svg>
<svg style="left:1611px;top:768px" width="8" height="8" viewBox="0 0 8 8"><circle cx="4" cy="4" r="3.6" fill="#d8d8d8" stroke="#222" stroke-width="1"/><path d="M4 4 L4 1" stroke="#222" stroke-width="1"/></svg>
<svg style="left:1628px;top:768px" width="8" height="8" viewBox="0 0 8 8"><circle cx="4" cy="4" r="3.6" fill="#d8d8d8" stroke="#222" stroke-width="1"/><path d="M4 4 L4 1" stroke="#222" stroke-width="1"/></svg>
<svg style="left:1640px;top:768px" width="8" height="8" viewBox="0 0 8 8"><circle cx="4" cy="4" r="3.6" fill="#d8d8d8" stroke="#222" stroke-width="1"/><path d="M4 4 L4 1" stroke="#222" stroke-width="1"/></svg>
<svg style="left:1598px;top:793px" width="8" height="8" viewBox="0 0 8 8"><circle cx="4" cy="4" r="3.6" fill="#d8d8d8" stroke="#222" stroke-width="1"/><path d="M4 4 L4 1" stroke="#222" stroke-width="1"/></svg>
<svg style="left:1610px;top:796px" width="8" height="8" viewBox="0 0 8 8"><circle cx="4" cy="4" r="3.6" fill="#d8d8d8" stroke="#222" stroke-width="1"/><path d="M4 4 L4 1" stroke="#222" stroke-width="1"/></svg>
<svg style="left:1628px;top:793px" width="8" height="8" viewBox="0 0 8 8"><circle cx="4" cy="4" r="3.6" fill="#d8d8d8" stroke="#222" stroke-width="1"/><path d="M4 4 L4 1" stroke="#222" stroke-width="1"/></svg>
<svg style="left:1639px;top:796px" width="8" height="8" viewBox="0 0 8 8"><circle cx="4" cy="4" r="3.6" fill="#d8d8d8" stroke="#222" stroke-width="1"/><path d="M4 4 L4 1" stroke="#222" stroke-width="1"/></svg>
<svg style="left:1664px;top:794px" width="8" height="8" viewBox="0 0 8 8"><circle cx="4" cy="4" r="3.6" fill="#d8d8d8" stroke="#222" stroke-width="1"/><path d="M4 4 L4 1" stroke="#222" stroke-width="1"/></svg>
<div style="left:1601px;top:782px;width:4px;height:2px;background:#e03030;"></div>
<div style="left:1613px;top:782px;width:4px;height:2px;background:#e03030;"></div>
<div style="left:1630px;top:782px;width:4px;height:2px;background:#e03030;"></div>
<div style="left:1642px;top:782px;width:4px;height:2px;background:#e03030;"></div>
<div style="left:1666px;top:806px;width:4px;height:2px;background:#e03030;"></div>
<div style="left:1592px;top:847px;width:126px;height:38px;background:#3e4044;"></div>
<div style="left:1593px;top:848px;width:31px;height:36px;background:#505256;"></div>
<div style="left:1595.0px;top:851px;width:8px;height:6px;background:#2a2c30;border:1px solid #888;"></div>
<div style="left:1604.5px;top:851px;width:8px;height:6px;background:#2a2c30;border:1px solid #888;"></div>
<div style="left:1614.0px;top:851px;width:8px;height:6px;background:#2a2c30;border:1px solid #888;"></div>
<div style="left:1595.0px;top:862px;width:8px;height:6px;background:#2a2c30;border:1px solid #888;"></div>
<div style="left:1604.5px;top:862px;width:8px;height:6px;background:#2a2c30;border:1px solid #888;"></div>
<div style="left:1614.0px;top:862px;width:8px;height:6px;background:#2a2c30;border:1px solid #888;"></div>
<div style="left:1595.0px;top:873px;width:8px;height:6px;background:#2a2c30;border:1px solid #888;"></div>
<div style="left:1604.5px;top:873px;width:8px;height:6px;background:#2a2c30;border:1px solid #888;"></div>
<div style="left:1614.0px;top:873px;width:8px;height:6px;background:#2a2c30;border:1px solid #888;"></div>
<div style="left:1625px;top:848px;width:20px;height:36px;background:#505256;"></div>
<svg style="left:1626px;top:853px" width="18" height="30" viewBox="0 0 18 30"><circle cx="5" cy="5" r="3.5" fill="#222" stroke="#3a8ad8" stroke-width="1"/><circle cx="5" cy="22" r="3.5" fill="#222" stroke="#3a8ad8" stroke-width="1"/><path d="M13 2 V28 M16 2 V28" stroke="#222" stroke-width="1.2"/></svg>
<div style="left:1646px;top:848px;width:11px;height:36px;background:#505256;"></div>
<svg style="left:1647px;top:853px" width="9" height="28" viewBox="0 0 9 28"><circle cx="4.5" cy="4" r="3.5" fill="#222" stroke="#888" stroke-width="1"/><circle cx="4.5" cy="20" r="3.5" fill="#222" stroke="#888" stroke-width="1"/></svg>
<div style="left:1658px;top:848px;width:35px;height:36px;background:#0e1626;"></div>
<svg style="left:1659px;top:851px" width="33" height="32" viewBox="0 0 33 32"><g stroke="#2a7ad0" stroke-width="1"><path d="M4 4 V31 M11 8 V31 M18 3 V31 M25 12 V31 M31 2 V31"/></g><g fill="#4aa8f0"><rect x="2.5" y="14" width="3" height="2"/><rect x="9.5" y="20" width="3" height="2"/><rect x="16.5" y="10" width="3" height="2"/><rect x="23.5" y="24" width="3" height="2"/><rect x="29.5" y="6" width="3" height="2"/></g></svg>
<div style="left:1694px;top:848px;width:11px;height:36px;background:#505256;"></div>
<div style="left:1706px;top:848px;width:11px;height:36px;background:#505256;"></div>
<svg style="left:1695.5px;top:853px" width="8" height="8" viewBox="0 0 8 8"><circle cx="4" cy="4" r="3.5" fill="#222" stroke="#999" stroke-width="1"/></svg>
<svg style="left:1695.5px;top:869px" width="8" height="8" viewBox="0 0 8 8"><circle cx="4" cy="4" r="3.5" fill="#222" stroke="#999" stroke-width="1"/></svg>
<svg style="left:1707.5px;top:853px" width="8" height="8" viewBox="0 0 8 8"><circle cx="4" cy="4" r="3.5" fill="#222" stroke="#999" stroke-width="1"/></svg>
<svg style="left:1707.5px;top:869px" width="8" height="8" viewBox="0 0 8 8"><circle cx="4" cy="4" r="3.5" fill="#222" stroke="#999" stroke-width="1"/></svg>
<div style="left:1711px;top:871px;width:5px;height:5px;background:#3a8ad8;border-radius:50%;"></div>
<div style="left:1543px;top:916px;width:375px;height:111px;background:#35383d;"></div>
<svg style="left:1553px;top:941px" width="32" height="25" viewBox="0 0 32 25"><path d="M0 2 Q0 0 2 0 H11 L13.5 3 H30 Q32 3 32 5 V23 Q32 25 30 25 H2 Q0 25 0 23Z" fill="#c8cacd"/><rect x="0" y="6" width="32" height="19" rx="1.5" fill="#dcdee1"/></svg>
<div class="t" style="left:1594px;top:935px;font-size:15px;color:#e8e8e8;transform:scaleX(0.720);transform-origin:0 0;">エフェクト</div>
<div class="t" style="left:1594px;top:955px;font-size:11px;color:#c8c8c8;transform:scaleX(0.691);transform-origin:0 0;">エフェクト</div>
<div style="left:1917px;top:86px;width:3px;height:942px;background:#1b1c1f;"></div>
<div style="left:0px;top:574px;width:1540px;height:454px;background:#1b1c1f;"></div>
<div style="left:3px;top:577px;width:56px;height:450px;background:#26282b;"></div>
<div style="left:3px;top:577px;width:56px;height:23px;background:#45484d;"></div>
<svg style="left:11px;top:584px" width="11" height="11" viewBox="0 0 11 11"><path d="M1 1 L10 10 M10 1 L1 10" stroke="#ccc" stroke-width="2.8"/></svg>
<svg style="left:42px;top:583px" width="13" height="13" viewBox="0 0 13 13"><path d="M1.5 11.5 L7 6" stroke="#ccc" stroke-width="3"/><path d="M4.5 1.5 H11.5 V8.5Z" fill="#ccc"/></svg>
<div style="left:3px;top:600px;width:56px;height:1px;background:#2a2c30;"></div>
<div style="left:3px;top:601px;width:56px;height:22px;background:#3c3f44;"></div>
<div style="left:43px;top:601px;width:1px;height:22px;background:#2a2c30;"></div>
<div class="t" style="left:3.0px;top:605px;font-size:12px;color:#ddd;width:40px;text-align:center;">I/O</div>
<svg style="left:47px;top:609px" width="9" height="6" viewBox="0 0 9 6"><path d="M0 0 H9 L4.5 6Z" fill="#ddd"/></svg>
<div style="left:3px;top:623px;width:56px;height:1px;background:#2a2c30;"></div>
<div style="left:3px;top:624px;width:56px;height:17px;background:#3c3f44;"></div>
<svg style="left:25px;top:626px" width="12" height="12" viewBox="0 0 12 12"><path d="M1.2 3.2 A3.6 3.6 0 0 0 6.2 7.4 L10.3 11.5 Q11.3 12.3 12 11.5 Q12.6 10.7 11.8 9.9 L7.7 5.8 A3.6 3.6 0 0 0 3.4 1 L5.4 3 L4.9 4.7 L3.2 5.2 Z" fill="#ccc" transform="scale(0.923)"/></svg>
<div style="left:3px;top:821px;width:56px;height:26px;background:#3a3d42;"></div>
<div style="left:3px;top:848px;width:56px;height:25px;background:#3a3d42;"></div>
<div style="left:3px;top:874px;width:56px;height:21px;background:#3a3d42;"></div>
<div style="left:3px;top:896px;width:56px;height:21px;background:#3a3d42;"></div>
<div style="left:3px;top:918px;width:56px;height:21px;background:#3a3d42;"></div>
<div style="left:3px;top:940px;width:56px;height:21px;background:#3a3d42;"></div>
<div style="left:3px;top:962px;width:56px;height:21px;background:#3a3d42;"></div>
<div style="left:3px;top:984px;width:56px;height:21px;background:#3a3d42;"></div>
<div style="left:3px;top:1006px;width:56px;height:21px;background:#3a3d42;"></div>
<svg style="left:25px;top:826px" width="12" height="17" viewBox="0 0 12 17"><path d="M0 0 H12 L6 6Z M0 17 H12 L6 11Z" fill="#ddd"/></svg>
<svg style="left:22px;top:854px" width="18" height="12" viewBox="0 0 18 12"><path d="M0 0 L7 6 L0 12Z M18 0 L11 6 L18 12Z" fill="#ddd"/></svg>
<div class="t" style="left:3.0px;top:878px;font-size:12px;color:#d8d8d8;width:24px;left:19.0px;transform:scaleX(0.917);transform-origin:50% 0;">入力</div>
<div class="t" style="left:3.0px;top:900px;font-size:12px;color:#d8d8d8;width:24px;left:19.0px;transform:scaleX(0.917);transform-origin:50% 0;">出力</div>
<div class="t" style="left:3.0px;top:922px;font-size:12px;color:#d8d8d8;width:24px;left:19.0px;transform:scaleX(0.917);transform-origin:50% 0;">外部</div>
<div class="t" style="left:3.0px;top:944px;font-size:12px;color:#d8d8d8;width:58.015625px;left:1.9921875px;transform:scaleX(0.758);transform-origin:50% 0;">インスト...</div>
<svg style="left:23px;top:966px" width="17" height="14" viewBox="0 0 17 14"><g stroke="#ccc" stroke-width="1.2" fill="none"><rect x="0.6" y="4.6" width="12" height="8.8"/><path d="M3 4.5 V2.5 H15 V11 H13 M5 2.5 V0.6 H16.4 V9 H15"/></g><g fill="#ccc"><rect x="2.5" y="6" width="1.3" height="6"/><rect x="5.5" y="6" width="1.3" height="6"/><rect x="8.5" y="6" width="1.3" height="6"/></g></svg>
<svg style="left:24px;top:988px" width="14" height="13" viewBox="0 0 14 13"><g fill="#ccc"><circle cx="2.5" cy="3" r="1.8"/><circle cx="7" cy="2" r="1.8"/><circle cx="11.5" cy="3" r="1.8"/><rect x="0.8" y="5.5" width="3.4" height="7"/><rect x="5.3" y="4.5" width="3.4" height="8.5"/><rect x="9.8" y="5.5" width="3.4" height="7"/></g></svg>
<svg style="left:23px;top:1011px" width="16" height="12" viewBox="0 0 16 12"><g fill="#ccc"><rect width="16" height="2"/><rect y="3.3" width="16" height="2"/><rect y="6.6" width="16" height="2"/><rect y="9.9" width="16" height="2"/></g></svg>
<div style="left:61px;top:577px;width:81px;height:3px;background:#0a97d6;"></div>
<div style="left:61px;top:580px;width:81px;height:110px;background:#3a3d42;"></div>
<svg style="left:65px;top:584px" width="11" height="11" viewBox="0 0 11 11"><path d="M3 2.5 A4.5 4.5 0 1 0 8 2.5" stroke="#777" stroke-width="1.7" fill="none"/><path d="M5.5 0 V5" stroke="#777" stroke-width="1.7"/></svg>
<div class="t" style="left:79px;top:583px;font-size:12px;color:#cfd1d4;transform:scaleX(0.633);transform-origin:0 0;">インサート</div>
<svg style="left:116px;top:587px" width="8" height="5" viewBox="0 0 8 5"><path d="M0 0 H8 L4.0 5Z" fill="#999"/></svg>
<svg style="left:128px;top:585px" width="10" height="10" viewBox="0 0 10 10"><path d="M5 0.5 V9.5 M0.5 5 H9.5" stroke="#8a8c90" stroke-width="1.8"/></svg>
<div style="left:61px;top:690px;width:81px;height:6px;background:#1b1c1f;"></div>
<div style="left:61px;top:691px;width:81px;height:3px;background:#3a3d42;"></div>
<div style="left:61px;top:696px;width:81px;height:3px;background:#0a97d6;"></div>
<div style="left:61px;top:699px;width:81px;height:310px;background:#3a3d42;"></div>
<div style="left:66px;top:705px;width:71px;height:17px;background:#4b4e53;border-radius:3px 3px 0 0;"></div>
<div class="t" style="left:56.5px;top:708px;font-size:12px;color:#e8b84a;width:90px;text-align:center;">BFD3</div>
<div style="left:66px;top:722px;width:71px;height:17px;background:#42454a;"></div>
<div class="t" style="left:61.5px;top:725px;font-size:12px;color:#e8b84a;width:36px;left:83.5px;transform:scaleX(0.722);transform-origin:50% 0;">メイン</div>
<div style="left:66px;top:739px;width:71px;height:17px;background:#26282b;"></div>
<div style="left:100.0px;top:740px;width:3px;height:16px;background:#2a8fe0;"></div>
<div style="left:66px;top:756px;width:71px;height:16px;background:#36393e;"></div>
<div style="left:101px;top:758px;width:1px;height:13px;background:#2c2e32;"></div>
<div class="t" style="left:63.0px;top:759px;font-size:12px;color:#e0e0e0;width:40px;text-align:center;">0dB</div>
<div class="t" style="left:99.0px;top:759px;font-size:12px;color:#e0e0e0;width:40px;text-align:center;">&lt;C&gt;</div>
<div style="left:67px;top:779px;width:69px;height:42px;background:#232427;border-radius:3px;"></div>
<div style="left:68px;top:780px;width:33px;height:19px;background:#3f4247;"></div>
<div style="left:102px;top:780px;width:33px;height:19px;background:#3f4247;"></div>
<div class="t" style="left:69.5px;top:783px;font-size:13px;color:#ddd;width:30px;text-align:center;">M</div>
<div class="t" style="left:103.5px;top:783px;font-size:13px;color:#ddd;width:30px;text-align:center;">S</div>
<div style="left:68px;top:800px;width:33px;height:20px;background:#3f4247;"></div>
<div style="left:102px;top:800px;width:33px;height:20px;background:#3f4247;"></div>
<svg style="left:79px;top:805px" width="10" height="10" viewBox="0 0 10 10"><circle cx="5" cy="5" r="4.6" fill="#c8c8c8"/></svg>
<svg style="left:113px;top:804px" width="10" height="11" viewBox="0 0 10 11"><path d="M5 1 A4.5 4.5 0 0 0 5 10Z" fill="#d0d0d0"/><path d="M6.5 1.5 A4.3 4.3 0 0 1 6.5 9.5" stroke="#d0d0d0" stroke-width="1.2" fill="none"/></svg>
<svg style="left:120px;top:829px" width="12" height="11" viewBox="0 0 12 11"><rect y="0" width="12" height="3" fill="#55585d"/><rect y="4" width="12" height="3" fill="#55585d"/><rect y="8" width="12" height="3" fill="#4a4d52"/></svg>
<div style="left:77px;top:829px;width:13px;height:11px;background:#2e3034;"></div>
<div style="left:77px;top:840px;width:13px;height:110px;background:#1e1f22;"></div>
<div style="left:79px;top:843.5px;width:9px;height:1px;background:#1f6a92;"></div>
<div style="left:79px;top:853.3px;width:9px;height:1px;background:#1f6a92;"></div>
<div style="left:79px;top:867.4px;width:9px;height:1px;background:#ddd;"></div>
<div style="left:79px;top:882.4px;width:9px;height:1px;background:#1f6a92;"></div>
<div style="left:79px;top:894.4px;width:9px;height:1px;background:#1f6a92;"></div>
<div style="left:79px;top:909.4px;width:9px;height:1px;background:#1f6a92;"></div>
<div style="left:79px;top:924.4px;width:9px;height:1px;background:#1f6a92;"></div>
<div style="left:79px;top:934.4px;width:9px;height:1px;background:#1f6a92;"></div>
<div style="left:79px;top:942.4px;width:9px;height:1px;background:#1f6a92;"></div>
<div class="t" style="left:55px;top:840px;font-size:8.5px;color:#d8d8d8;letter-spacing:-0.3px;width:20px;text-align:right;">10</div>
<div class="t" style="left:55px;top:849px;font-size:8.5px;color:#d8d8d8;letter-spacing:-0.3px;width:20px;text-align:right;">6</div>
<div class="t" style="left:55px;top:863.5px;font-size:8.5px;color:#d8d8d8;letter-spacing:-0.3px;width:20px;text-align:right;">0</div>
<div class="t" style="left:55px;top:879px;font-size:8.5px;color:#d8d8d8;letter-spacing:-0.3px;width:20px;text-align:right;">-6</div>
<div class="t" style="left:55px;top:890.5px;font-size:8.5px;color:#d8d8d8;letter-spacing:-0.3px;width:20px;text-align:right;">-12</div>
<div class="t" style="left:55px;top:905.5px;font-size:8.5px;color:#d8d8d8;letter-spacing:-0.3px;width:20px;text-align:right;">-24</div>
<div class="t" style="left:55px;top:920.5px;font-size:8.5px;color:#d8d8d8;letter-spacing:-0.3px;width:20px;text-align:right;">-36</div>
<div class="t" style="left:55px;top:930.5px;font-size:8.5px;color:#d8d8d8;letter-spacing:-0.3px;width:20px;text-align:right;">-48</div>
<div style="left:94px;top:885px;width:14px;height:65px;background:#6a6d72;"></div>
<div style="left:95px;top:889px;width:12px;height:1px;background:#85888d;"></div>
<div style="left:95px;top:903px;width:12px;height:1px;background:#85888d;"></div>
<div style="left:95px;top:918px;width:12px;height:1px;background:#85888d;"></div>
<div style="left:95px;top:928px;width:12px;height:1px;background:#85888d;"></div>
<div style="left:100.5px;top:845px;width:1.6px;height:88px;background:#151618;"></div>
<div style="left:92px;top:849px;width:18px;height:36px;background:linear-gradient(#f6f6f6,#d8d8d8 30%,#ffffff 50%,#e0e0e0 80%,#bdbdbd);border-radius:2px;box-shadow:0 1px 2px rgba(0,0,0,.7);border:1px solid #888;"></div>
<div style="left:93px;top:866px;width:16px;height:1px;background:#333;"></div>
<svg style="left:120px;top:931px" width="13" height="13" viewBox="0 0 13 13"><circle cx="6.5" cy="6.5" r="6.3" fill="#b4b6b8"/><path d="M6.5 6.5 L2.5 2.8" stroke="#3a3d42" stroke-width="2"/></svg>
<div class="t" style="left:73px;top:957px;font-size:13px;color:#e6e6e6;font-weight:bold;">1</div>
<svg style="left:117px;top:957px" width="17" height="10" viewBox="0 0 17 10"><path d="M0 0 H2.2 V6 H4.9 V0 H7.1 V6 H9.9 V0 H12.1 V6 H14.8 V0 H17 V10 H0Z" fill="#c8c8c8"/></svg>
<div style="left:66px;top:973px;width:71px;height:16px;background:#26282b;border-radius:2px;"></div>
<div class="t" style="left:66.5px;top:976px;font-size:10px;color:#8a8c90;width:55.5625px;left:73.71875px;transform:scaleX(0.684);transform-origin:50% 0;">オート: オフ</div>
<div style="left:61px;top:995px;width:81px;height:14px;background:#0a97d6;"></div>
<div class="t" style="left:61.0px;top:996px;font-size:12px;color:#f4f8fc;width:81px;text-align:center;">Drum</div>
<div style="left:144px;top:577px;width:81px;height:3px;background:#00c2e8;"></div>
<div style="left:144px;top:580px;width:81px;height:110px;background:#3a3d42;"></div>
<svg style="left:148px;top:584px" width="11" height="11" viewBox="0 0 11 11"><path d="M3 2.5 A4.5 4.5 0 1 0 8 2.5" stroke="#3aa0e8" stroke-width="1.7" fill="none"/><path d="M5.5 0 V5" stroke="#3aa0e8" stroke-width="1.7"/></svg>
<div class="t" style="left:162px;top:583px;font-size:12px;color:#cfd1d4;transform:scaleX(0.633);transform-origin:0 0;">インサート</div>
<svg style="left:199px;top:587px" width="8" height="5" viewBox="0 0 8 5"><path d="M0 0 H8 L4.0 5Z" fill="#999"/></svg>
<svg style="left:211px;top:585px" width="10" height="10" viewBox="0 0 10 10"><path d="M5 0.5 V9.5 M0.5 5 H9.5" stroke="#8a8c90" stroke-width="1.8"/></svg>
<div style="left:144px;top:601px;width:81px;height:20px;background:#4a4d52;"></div>
<svg style="left:148px;top:606px" width="11" height="11" viewBox="0 0 11 11"><path d="M3 2.5 A4.5 4.5 0 1 0 8 2.5" stroke="#5ab0ee" stroke-width="1.7" fill="none"/><path d="M5.5 0 V5" stroke="#5ab0ee" stroke-width="1.7"/></svg>
<div class="t" style="left:161px;top:606px;font-size:11px;color:#d4d6d8;transform:scaleX(0.945);transform-origin:0 0;">AmpliTube ..</div>
<svg style="left:211px;top:609px" width="8" height="5" viewBox="0 0 8 5"><path d="M0 0 H8 L4.0 5Z" fill="#6a6d72"/></svg>
<div style="left:144px;top:622px;width:81px;height:20px;background:#4a4d52;"></div>
<svg style="left:148px;top:627px" width="11" height="11" viewBox="0 0 11 11"><path d="M3 2.5 A4.5 4.5 0 1 0 8 2.5" stroke="#5ab0ee" stroke-width="1.7" fill="none"/><path d="M5.5 0 V5" stroke="#5ab0ee" stroke-width="1.7"/></svg>
<div class="t" style="left:161px;top:627px;font-size:11px;color:#d4d6d8;transform:scaleX(0.933);transform-origin:0 0;">MCompress..</div>
<svg style="left:211px;top:630px" width="8" height="5" viewBox="0 0 8 5"><path d="M0 0 H8 L4.0 5Z" fill="#6a6d72"/></svg>
<div style="left:144px;top:643px;width:81px;height:20px;background:#4a4d52;"></div>
<svg style="left:148px;top:648px" width="11" height="11" viewBox="0 0 11 11"><path d="M3 2.5 A4.5 4.5 0 1 0 8 2.5" stroke="#5ab0ee" stroke-width="1.7" fill="none"/><path d="M5.5 0 V5" stroke="#5ab0ee" stroke-width="1.7"/></svg>
<div class="t" style="left:161px;top:648px;font-size:11px;color:#d4d6d8;transform:scaleX(0.887);transform-origin:0 0;">Pro EQ</div>
<svg style="left:211px;top:651px" width="8" height="5" viewBox="0 0 8 5"><path d="M0 0 H8 L4.0 5Z" fill="#6a6d72"/></svg>
<div style="left:144px;top:690px;width:81px;height:6px;background:#1b1c1f;"></div>
<div style="left:144px;top:691px;width:81px;height:3px;background:#3a3d42;"></div>
<div style="left:144px;top:696px;width:81px;height:3px;background:#00c2e8;"></div>
<div style="left:144px;top:699px;width:81px;height:310px;background:#3a3d42;"></div>
<div style="left:149px;top:705px;width:71px;height:17px;background:#4b4e53;border-radius:3px 3px 0 0;"></div>
<div class="t" style="left:139.5px;top:708px;font-size:12px;color:#e8b84a;width:90px;text-align:center;">Presence 5</div>
<div style="left:149px;top:722px;width:71px;height:17px;background:#42454a;"></div>
<div class="t" style="left:144.5px;top:725px;font-size:12px;color:#e8b84a;width:36px;left:166.5px;transform:scaleX(0.722);transform-origin:50% 0;">メイン</div>
<div style="left:149px;top:739px;width:71px;height:17px;background:#26282b;"></div>
<div style="left:183.0px;top:740px;width:3px;height:16px;background:#2a8fe0;"></div>
<div style="left:149px;top:756px;width:71px;height:16px;background:#36393e;"></div>
<div style="left:184px;top:758px;width:1px;height:13px;background:#2c2e32;"></div>
<div class="t" style="left:146.0px;top:759px;font-size:12px;color:#e0e0e0;width:40px;text-align:center;">-9.6</div>
<div class="t" style="left:182.0px;top:759px;font-size:12px;color:#e0e0e0;width:40px;text-align:center;">&lt;C&gt;</div>
<div style="left:150px;top:779px;width:69px;height:42px;background:#232427;border-radius:3px;"></div>
<div style="left:151px;top:780px;width:33px;height:19px;background:#3f4247;"></div>
<div style="left:185px;top:780px;width:33px;height:19px;background:#3f4247;"></div>
<div class="t" style="left:152.5px;top:783px;font-size:13px;color:#ddd;width:30px;text-align:center;">M</div>
<div class="t" style="left:186.5px;top:783px;font-size:13px;color:#ddd;width:30px;text-align:center;">S</div>
<div style="left:151px;top:800px;width:33px;height:20px;background:#3f4247;"></div>
<div style="left:185px;top:800px;width:33px;height:20px;background:#3f4247;"></div>
<svg style="left:162px;top:805px" width="10" height="10" viewBox="0 0 10 10"><circle cx="5" cy="5" r="4.6" fill="#c8c8c8"/></svg>
<svg style="left:196px;top:804px" width="10" height="11" viewBox="0 0 10 11"><path d="M5 1 A4.5 4.5 0 0 0 5 10Z" fill="#d0d0d0"/><path d="M6.5 1.5 A4.3 4.3 0 0 1 6.5 9.5" stroke="#d0d0d0" stroke-width="1.2" fill="none"/></svg>
<svg style="left:203px;top:829px" width="12" height="11" viewBox="0 0 12 11"><rect y="0" width="12" height="3" fill="#4ab0e8"/><rect y="4" width="12" height="3" fill="#55585d"/><rect y="8" width="12" height="3" fill="#4a4d52"/></svg>
<div style="left:160px;top:829px;width:13px;height:11px;background:#2e3034;"></div>
<div style="left:160px;top:840px;width:13px;height:110px;background:#1e1f22;"></div>
<div style="left:162px;top:843.5px;width:9px;height:1px;background:#1f6a92;"></div>
<div style="left:162px;top:853.3px;width:9px;height:1px;background:#1f6a92;"></div>
<div style="left:162px;top:867.4px;width:9px;height:1px;background:#ddd;"></div>
<div style="left:162px;top:882.4px;width:9px;height:1px;background:#1f6a92;"></div>
<div style="left:162px;top:894.4px;width:9px;height:1px;background:#1f6a92;"></div>
<div style="left:162px;top:909.4px;width:9px;height:1px;background:#1f6a92;"></div>
<div style="left:162px;top:924.4px;width:9px;height:1px;background:#1f6a92;"></div>
<div style="left:162px;top:934.4px;width:9px;height:1px;background:#1f6a92;"></div>
<div style="left:162px;top:942.4px;width:9px;height:1px;background:#1f6a92;"></div>
<div class="t" style="left:138px;top:840px;font-size:8.5px;color:#d8d8d8;letter-spacing:-0.3px;width:20px;text-align:right;">10</div>
<div class="t" style="left:138px;top:849px;font-size:8.5px;color:#d8d8d8;letter-spacing:-0.3px;width:20px;text-align:right;">6</div>
<div class="t" style="left:138px;top:863.5px;font-size:8.5px;color:#d8d8d8;letter-spacing:-0.3px;width:20px;text-align:right;">0</div>
<div class="t" style="left:138px;top:879px;font-size:8.5px;color:#d8d8d8;letter-spacing:-0.3px;width:20px;text-align:right;">-6</div>
<div class="t" style="left:138px;top:890.5px;font-size:8.5px;color:#d8d8d8;letter-spacing:-0.3px;width:20px;text-align:right;">-12</div>
<div class="t" style="left:138px;top:905.5px;font-size:8.5px;color:#d8d8d8;letter-spacing:-0.3px;width:20px;text-align:right;">-24</div>
<div class="t" style="left:138px;top:920.5px;font-size:8.5px;color:#d8d8d8;letter-spacing:-0.3px;width:20px;text-align:right;">-36</div>
<div class="t" style="left:138px;top:930.5px;font-size:8.5px;color:#d8d8d8;letter-spacing:-0.3px;width:20px;text-align:right;">-48</div>
<div style="left:177px;top:904px;width:14px;height:46px;background:#6a6d72;"></div>
<div style="left:178px;top:918px;width:12px;height:1px;background:#85888d;"></div>
<div style="left:178px;top:928px;width:12px;height:1px;background:#85888d;"></div>
<div style="left:183.5px;top:845px;width:1.6px;height:88px;background:#151618;"></div>
<div style="left:178px;top:853px;width:12px;height:1px;background:#55585d;"></div>
<div style="left:178px;top:867px;width:12px;height:1px;background:#55585d;"></div>
<div style="left:175px;top:868px;width:18px;height:36px;background:linear-gradient(#f6f6f6,#d8d8d8 30%,#ffffff 50%,#e0e0e0 80%,#bdbdbd);border-radius:2px;box-shadow:0 1px 2px rgba(0,0,0,.7);border:1px solid #888;"></div>
<div style="left:176px;top:885px;width:16px;height:1px;background:#333;"></div>
<svg style="left:203px;top:931px" width="13" height="13" viewBox="0 0 13 13"><circle cx="6.5" cy="6.5" r="6.3" fill="#b4b6b8"/><path d="M6.5 6.5 L2.5 2.8" stroke="#3a3d42" stroke-width="2"/></svg>
<div class="t" style="left:156px;top:957px;font-size:13px;color:#e6e6e6;font-weight:bold;">2</div>
<svg style="left:200px;top:957px" width="17" height="10" viewBox="0 0 17 10"><path d="M0 0 H2.2 V6 H4.9 V0 H7.1 V6 H9.9 V0 H12.1 V6 H14.8 V0 H17 V10 H0Z" fill="#c8c8c8"/></svg>
<div style="left:149px;top:973px;width:71px;height:16px;background:#26282b;border-radius:2px;"></div>
<div class="t" style="left:149.5px;top:976px;font-size:10px;color:#8a8c90;width:55.5625px;left:156.71875px;transform:scaleX(0.684);transform-origin:50% 0;">オート: オフ</div>
<div style="left:144px;top:995px;width:81px;height:14px;background:#00c2e8;"></div>
<div class="t" style="left:144.0px;top:996px;font-size:12px;color:#0a1a20;width:81px;text-align:center;">Bass</div>
<div style="left:227px;top:577px;width:81px;height:3px;background:#00e5c8;"></div>
<div style="left:227px;top:580px;width:81px;height:110px;background:#3a3d42;"></div>
<svg style="left:231px;top:584px" width="11" height="11" viewBox="0 0 11 11"><path d="M3 2.5 A4.5 4.5 0 1 0 8 2.5" stroke="#3aa0e8" stroke-width="1.7" fill="none"/><path d="M5.5 0 V5" stroke="#3aa0e8" stroke-width="1.7"/></svg>
<div class="t" style="left:245px;top:583px;font-size:12px;color:#cfd1d4;transform:scaleX(0.633);transform-origin:0 0;">インサート</div>
<svg style="left:282px;top:587px" width="8" height="5" viewBox="0 0 8 5"><path d="M0 0 H8 L4.0 5Z" fill="#999"/></svg>
<svg style="left:294px;top:585px" width="10" height="10" viewBox="0 0 10 10"><path d="M5 0.5 V9.5 M0.5 5 H9.5" stroke="#8a8c90" stroke-width="1.8"/></svg>
<div style="left:227px;top:601px;width:81px;height:20px;background:#4a4d52;"></div>
<svg style="left:231px;top:606px" width="11" height="11" viewBox="0 0 11 11"><path d="M3 2.5 A4.5 4.5 0 1 0 8 2.5" stroke="#5ab0ee" stroke-width="1.7" fill="none"/><path d="M5.5 0 V5" stroke="#5ab0ee" stroke-width="1.7"/></svg>
<div class="t" style="left:244px;top:606px;font-size:11px;color:#d4d6d8;transform:scaleX(0.945);transform-origin:0 0;">AmpliTube ..</div>
<svg style="left:294px;top:609px" width="8" height="5" viewBox="0 0 8 5"><path d="M0 0 H8 L4.0 5Z" fill="#6a6d72"/></svg>
<div style="left:227px;top:622px;width:81px;height:20px;background:#4a4d52;"></div>
<svg style="left:231px;top:627px" width="11" height="11" viewBox="0 0 11 11"><path d="M3 2.5 A4.5 4.5 0 1 0 8 2.5" stroke="#5ab0ee" stroke-width="1.7" fill="none"/><path d="M5.5 0 V5" stroke="#5ab0ee" stroke-width="1.7"/></svg>
<div class="t" style="left:244px;top:627px;font-size:11px;color:#d4d6d8;transform:scaleX(0.933);transform-origin:0 0;">MCompress..</div>
<svg style="left:294px;top:630px" width="8" height="5" viewBox="0 0 8 5"><path d="M0 0 H8 L4.0 5Z" fill="#6a6d72"/></svg>
<div style="left:227px;top:643px;width:81px;height:20px;background:#4a4d52;"></div>
<svg style="left:231px;top:648px" width="11" height="11" viewBox="0 0 11 11"><path d="M3 2.5 A4.5 4.5 0 1 0 8 2.5" stroke="#5ab0ee" stroke-width="1.7" fill="none"/><path d="M5.5 0 V5" stroke="#5ab0ee" stroke-width="1.7"/></svg>
<div class="t" style="left:244px;top:648px;font-size:11px;color:#d4d6d8;transform:scaleX(0.887);transform-origin:0 0;">Pro EQ</div>
<svg style="left:294px;top:651px" width="8" height="5" viewBox="0 0 8 5"><path d="M0 0 H8 L4.0 5Z" fill="#6a6d72"/></svg>
<div style="left:227px;top:690px;width:81px;height:6px;background:#1b1c1f;"></div>
<div style="left:227px;top:691px;width:81px;height:3px;background:#3a3d42;"></div>
<div style="left:227px;top:696px;width:81px;height:3px;background:#00e5c8;"></div>
<div style="left:227px;top:699px;width:81px;height:310px;background:#3a3d42;"></div>
<div style="left:232px;top:705px;width:71px;height:17px;background:#4b4e53;border-radius:3px 3px 0 0;"></div>
<div class="t" style="left:222.5px;top:708px;font-size:12px;color:#e8b84a;width:77.375px;left:228.8125px;transform:scaleX(0.918);transform-origin:50% 0;">sforzando.. (2)</div>
<div style="left:232px;top:722px;width:71px;height:17px;background:#42454a;"></div>
<div class="t" style="left:227.5px;top:725px;font-size:12px;color:#e8b84a;width:80px;text-align:center;">Guitar</div>
<div style="left:232px;top:739px;width:71px;height:17px;background:#26282b;"></div>
<svg style="left:232.5px;top:740px" width="35.0" height="16" viewBox="0 0 35.0 16"><path d="M0 0 L35.0 16 H0Z" fill="#1d5a88"/><path d="M0 0 L35.0 16 V0Z" fill="#1d4a6a"/></svg>
<div style="left:232.5px;top:740px;width:3px;height:16px;background:#2a8fe0;"></div>
<div style="left:232px;top:756px;width:71px;height:16px;background:#36393e;"></div>
<div style="left:267px;top:758px;width:1px;height:13px;background:#2c2e32;"></div>
<div class="t" style="left:229.0px;top:759px;font-size:12px;color:#e0e0e0;width:40px;text-align:center;">-6.3</div>
<div class="t" style="left:265.0px;top:759px;font-size:12px;color:#e0e0e0;width:40px;text-align:center;">&lt;L&gt;</div>
<div style="left:233px;top:779px;width:69px;height:42px;background:#232427;border-radius:3px;"></div>
<div style="left:234px;top:780px;width:33px;height:19px;background:#3f4247;"></div>
<div style="left:268px;top:780px;width:33px;height:19px;background:#3f4247;"></div>
<div class="t" style="left:235.5px;top:783px;font-size:13px;color:#ddd;width:30px;text-align:center;">M</div>
<div class="t" style="left:269.5px;top:783px;font-size:13px;color:#ddd;width:30px;text-align:center;">S</div>
<div style="left:234px;top:800px;width:33px;height:20px;background:#3f4247;"></div>
<div style="left:268px;top:800px;width:33px;height:20px;background:#3f4247;"></div>
<svg style="left:245px;top:805px" width="10" height="10" viewBox="0 0 10 10"><circle cx="5" cy="5" r="4.6" fill="#c8c8c8"/></svg>
<svg style="left:279px;top:804px" width="10" height="11" viewBox="0 0 10 11"><path d="M5 1 A4.5 4.5 0 0 0 5 10Z" fill="#d0d0d0"/><path d="M6.5 1.5 A4.3 4.3 0 0 1 6.5 9.5" stroke="#d0d0d0" stroke-width="1.2" fill="none"/></svg>
<svg style="left:286px;top:829px" width="12" height="11" viewBox="0 0 12 11"><rect y="0" width="12" height="3" fill="#4ab0e8"/><rect y="4" width="12" height="3" fill="#55585d"/><rect y="8" width="12" height="3" fill="#4a4d52"/></svg>
<div style="left:243px;top:829px;width:13px;height:11px;background:#2e3034;"></div>
<div style="left:243px;top:840px;width:13px;height:110px;background:#1e1f22;"></div>
<div style="left:245px;top:843.5px;width:9px;height:1px;background:#1f6a92;"></div>
<div style="left:245px;top:853.3px;width:9px;height:1px;background:#1f6a92;"></div>
<div style="left:245px;top:867.4px;width:9px;height:1px;background:#ddd;"></div>
<div style="left:245px;top:882.4px;width:9px;height:1px;background:#1f6a92;"></div>
<div style="left:245px;top:894.4px;width:9px;height:1px;background:#1f6a92;"></div>
<div style="left:245px;top:909.4px;width:9px;height:1px;background:#1f6a92;"></div>
<div style="left:245px;top:924.4px;width:9px;height:1px;background:#1f6a92;"></div>
<div style="left:245px;top:934.4px;width:9px;height:1px;background:#1f6a92;"></div>
<div style="left:245px;top:942.4px;width:9px;height:1px;background:#1f6a92;"></div>
<div class="t" style="left:221px;top:840px;font-size:8.5px;color:#d8d8d8;letter-spacing:-0.3px;width:20px;text-align:right;">10</div>
<div class="t" style="left:221px;top:849px;font-size:8.5px;color:#d8d8d8;letter-spacing:-0.3px;width:20px;text-align:right;">6</div>
<div class="t" style="left:221px;top:863.5px;font-size:8.5px;color:#d8d8d8;letter-spacing:-0.3px;width:20px;text-align:right;">0</div>
<div class="t" style="left:221px;top:879px;font-size:8.5px;color:#d8d8d8;letter-spacing:-0.3px;width:20px;text-align:right;">-6</div>
<div class="t" style="left:221px;top:890.5px;font-size:8.5px;color:#d8d8d8;letter-spacing:-0.3px;width:20px;text-align:right;">-12</div>
<div class="t" style="left:221px;top:905.5px;font-size:8.5px;color:#d8d8d8;letter-spacing:-0.3px;width:20px;text-align:right;">-24</div>
<div class="t" style="left:221px;top:920.5px;font-size:8.5px;color:#d8d8d8;letter-spacing:-0.3px;width:20px;text-align:right;">-36</div>
<div class="t" style="left:221px;top:930.5px;font-size:8.5px;color:#d8d8d8;letter-spacing:-0.3px;width:20px;text-align:right;">-48</div>
<div style="left:260px;top:898px;width:14px;height:52px;background:#6a6d72;"></div>
<div style="left:261px;top:903px;width:12px;height:1px;background:#85888d;"></div>
<div style="left:261px;top:918px;width:12px;height:1px;background:#85888d;"></div>
<div style="left:261px;top:928px;width:12px;height:1px;background:#85888d;"></div>
<div style="left:266.5px;top:845px;width:1.6px;height:88px;background:#151618;"></div>
<div style="left:261px;top:853px;width:12px;height:1px;background:#55585d;"></div>
<div style="left:258px;top:862px;width:18px;height:36px;background:linear-gradient(#f6f6f6,#d8d8d8 30%,#ffffff 50%,#e0e0e0 80%,#bdbdbd);border-radius:2px;box-shadow:0 1px 2px rgba(0,0,0,.7);border:1px solid #888;"></div>
<div style="left:259px;top:879px;width:16px;height:1px;background:#333;"></div>
<svg style="left:286px;top:931px" width="13" height="13" viewBox="0 0 13 13"><circle cx="6.5" cy="6.5" r="6.3" fill="#b4b6b8"/><path d="M6.5 6.5 L2.5 2.8" stroke="#3a3d42" stroke-width="2"/></svg>
<div class="t" style="left:239px;top:957px;font-size:13px;color:#e6e6e6;font-weight:bold;">6</div>
<svg style="left:283px;top:957px" width="17" height="10" viewBox="0 0 17 10"><path d="M0 0 H2.2 V6 H4.9 V0 H7.1 V6 H9.9 V0 H12.1 V6 H14.8 V0 H17 V10 H0Z" fill="#c8c8c8"/></svg>
<div style="left:232px;top:973px;width:71px;height:16px;background:#26282b;border-radius:2px;"></div>
<div class="t" style="left:232.5px;top:976px;font-size:10px;color:#8a8c90;width:55.5625px;left:239.71875px;transform:scaleX(0.684);transform-origin:50% 0;">オート: オフ</div>
<div style="left:227px;top:995px;width:81px;height:14px;background:#00e5c8;"></div>
<div class="t" style="left:227.0px;top:996px;font-size:12px;color:#0a2020;width:81px;text-align:center;">Side G</div>
<div style="left:310px;top:577px;width:81px;height:3px;background:#00ffff;"></div>
<div style="left:310px;top:580px;width:81px;height:110px;background:#3a3d42;"></div>
<svg style="left:314px;top:584px" width="11" height="11" viewBox="0 0 11 11"><path d="M3 2.5 A4.5 4.5 0 1 0 8 2.5" stroke="#3aa0e8" stroke-width="1.7" fill="none"/><path d="M5.5 0 V5" stroke="#3aa0e8" stroke-width="1.7"/></svg>
<div class="t" style="left:328px;top:583px;font-size:12px;color:#cfd1d4;transform:scaleX(0.633);transform-origin:0 0;">インサート</div>
<svg style="left:365px;top:587px" width="8" height="5" viewBox="0 0 8 5"><path d="M0 0 H8 L4.0 5Z" fill="#999"/></svg>
<svg style="left:377px;top:585px" width="10" height="10" viewBox="0 0 10 10"><path d="M5 0.5 V9.5 M0.5 5 H9.5" stroke="#8a8c90" stroke-width="1.8"/></svg>
<div style="left:310px;top:601px;width:81px;height:20px;background:#4a4d52;"></div>
<svg style="left:314px;top:606px" width="11" height="11" viewBox="0 0 11 11"><path d="M3 2.5 A4.5 4.5 0 1 0 8 2.5" stroke="#5ab0ee" stroke-width="1.7" fill="none"/><path d="M5.5 0 V5" stroke="#5ab0ee" stroke-width="1.7"/></svg>
<div class="t" style="left:327px;top:606px;font-size:11px;color:#d4d6d8;transform:scaleX(0.929);transform-origin:0 0;">AmpliTube 5</div>
<svg style="left:377px;top:609px" width="8" height="5" viewBox="0 0 8 5"><path d="M0 0 H8 L4.0 5Z" fill="#6a6d72"/></svg>
<div style="left:310px;top:622px;width:81px;height:20px;background:#4a4d52;"></div>
<svg style="left:314px;top:627px" width="11" height="11" viewBox="0 0 11 11"><path d="M3 2.5 A4.5 4.5 0 1 0 8 2.5" stroke="#5ab0ee" stroke-width="1.7" fill="none"/><path d="M5.5 0 V5" stroke="#5ab0ee" stroke-width="1.7"/></svg>
<div class="t" style="left:327px;top:627px;font-size:11px;color:#d4d6d8;transform:scaleX(0.933);transform-origin:0 0;">MCompress..</div>
<svg style="left:377px;top:630px" width="8" height="5" viewBox="0 0 8 5"><path d="M0 0 H8 L4.0 5Z" fill="#6a6d72"/></svg>
<div style="left:310px;top:643px;width:81px;height:20px;background:#4a4d52;"></div>
<svg style="left:314px;top:648px" width="11" height="11" viewBox="0 0 11 11"><path d="M3 2.5 A4.5 4.5 0 1 0 8 2.5" stroke="#5ab0ee" stroke-width="1.7" fill="none"/><path d="M5.5 0 V5" stroke="#5ab0ee" stroke-width="1.7"/></svg>
<div class="t" style="left:327px;top:648px;font-size:11px;color:#d4d6d8;transform:scaleX(0.887);transform-origin:0 0;">Pro EQ</div>
<svg style="left:377px;top:651px" width="8" height="5" viewBox="0 0 8 5"><path d="M0 0 H8 L4.0 5Z" fill="#6a6d72"/></svg>
<div style="left:310px;top:690px;width:81px;height:6px;background:#1b1c1f;"></div>
<div style="left:310px;top:691px;width:81px;height:3px;background:#3a3d42;"></div>
<div style="left:310px;top:696px;width:81px;height:3px;background:#00ffff;"></div>
<div style="left:310px;top:699px;width:81px;height:310px;background:#3a3d42;"></div>
<div style="left:315px;top:705px;width:71px;height:17px;background:#4b4e53;border-radius:3px 3px 0 0;"></div>
<div class="t" style="left:305.5px;top:708px;font-size:12px;color:#e8b84a;width:75.375px;left:312.8125px;transform:scaleX(0.942);transform-origin:50% 0;">sforzan..._x64</div>
<div style="left:315px;top:722px;width:71px;height:17px;background:#42454a;"></div>
<div class="t" style="left:310.5px;top:725px;font-size:12px;color:#e8b84a;width:80px;text-align:center;">Guitar</div>
<div style="left:315px;top:739px;width:71px;height:17px;background:#26282b;"></div>
<svg style="left:350.5px;top:740px" width="35.0" height="16" viewBox="0 0 35.0 16"><path d="M35.0 0 L0 16 H35.0Z" fill="#1d5a88"/><path d="M35.0 0 L0 16 V0Z" fill="#1d4a6a"/></svg>
<div style="left:382.5px;top:740px;width:3px;height:16px;background:#2a8fe0;"></div>
<div style="left:315px;top:756px;width:71px;height:16px;background:#36393e;"></div>
<div style="left:350px;top:758px;width:1px;height:13px;background:#2c2e32;"></div>
<div class="t" style="left:312.0px;top:759px;font-size:12px;color:#e0e0e0;width:40px;text-align:center;">-6.3</div>
<div class="t" style="left:348.0px;top:759px;font-size:12px;color:#e0e0e0;width:40px;text-align:center;">&lt;R&gt;</div>
<div style="left:316px;top:779px;width:69px;height:42px;background:#232427;border-radius:3px;"></div>
<div style="left:317px;top:780px;width:33px;height:19px;background:#3f4247;"></div>
<div style="left:351px;top:780px;width:33px;height:19px;background:#3f4247;"></div>
<div class="t" style="left:318.5px;top:783px;font-size:13px;color:#ddd;width:30px;text-align:center;">M</div>
<div class="t" style="left:352.5px;top:783px;font-size:13px;color:#ddd;width:30px;text-align:center;">S</div>
<div style="left:317px;top:800px;width:33px;height:20px;background:#3f4247;"></div>
<div style="left:351px;top:800px;width:33px;height:20px;background:#3f4247;"></div>
<svg style="left:328px;top:805px" width="10" height="10" viewBox="0 0 10 10"><circle cx="5" cy="5" r="4.6" fill="#c8c8c8"/></svg>
<svg style="left:362px;top:804px" width="10" height="11" viewBox="0 0 10 11"><path d="M5 1 A4.5 4.5 0 0 0 5 10Z" fill="#d0d0d0"/><path d="M6.5 1.5 A4.3 4.3 0 0 1 6.5 9.5" stroke="#d0d0d0" stroke-width="1.2" fill="none"/></svg>
<svg style="left:369px;top:829px" width="12" height="11" viewBox="0 0 12 11"><rect y="0" width="12" height="3" fill="#4ab0e8"/><rect y="4" width="12" height="3" fill="#55585d"/><rect y="8" width="12" height="3" fill="#4a4d52"/></svg>
<div style="left:326px;top:829px;width:13px;height:11px;background:#2e3034;"></div>
<div style="left:326px;top:840px;width:13px;height:110px;background:#1e1f22;"></div>
<div style="left:328px;top:843.5px;width:9px;height:1px;background:#1f6a92;"></div>
<div style="left:328px;top:853.3px;width:9px;height:1px;background:#1f6a92;"></div>
<div style="left:328px;top:867.4px;width:9px;height:1px;background:#ddd;"></div>
<div style="left:328px;top:882.4px;width:9px;height:1px;background:#1f6a92;"></div>
<div style="left:328px;top:894.4px;width:9px;height:1px;background:#1f6a92;"></div>
<div style="left:328px;top:909.4px;width:9px;height:1px;background:#1f6a92;"></div>
<div style="left:328px;top:924.4px;width:9px;height:1px;background:#1f6a92;"></div>
<div style="left:328px;top:934.4px;width:9px;height:1px;background:#1f6a92;"></div>
<div style="left:328px;top:942.4px;width:9px;height:1px;background:#1f6a92;"></div>
<div class="t" style="left:304px;top:840px;font-size:8.5px;color:#d8d8d8;letter-spacing:-0.3px;width:20px;text-align:right;">10</div>
<div class="t" style="left:304px;top:849px;font-size:8.5px;color:#d8d8d8;letter-spacing:-0.3px;width:20px;text-align:right;">6</div>
<div class="t" style="left:304px;top:863.5px;font-size:8.5px;color:#d8d8d8;letter-spacing:-0.3px;width:20px;text-align:right;">0</div>
<div class="t" style="left:304px;top:879px;font-size:8.5px;color:#d8d8d8;letter-spacing:-0.3px;width:20px;text-align:right;">-6</div>
<div class="t" style="left:304px;top:890.5px;font-size:8.5px;color:#d8d8d8;letter-spacing:-0.3px;width:20px;text-align:right;">-12</div>
<div class="t" style="left:304px;top:905.5px;font-size:8.5px;color:#d8d8d8;letter-spacing:-0.3px;width:20px;text-align:right;">-24</div>
<div class="t" style="left:304px;top:920.5px;font-size:8.5px;color:#d8d8d8;letter-spacing:-0.3px;width:20px;text-align:right;">-36</div>
<div class="t" style="left:304px;top:930.5px;font-size:8.5px;color:#d8d8d8;letter-spacing:-0.3px;width:20px;text-align:right;">-48</div>
<div style="left:343px;top:898px;width:14px;height:52px;background:#6a6d72;"></div>
<div style="left:344px;top:903px;width:12px;height:1px;background:#85888d;"></div>
<div style="left:344px;top:918px;width:12px;height:1px;background:#85888d;"></div>
<div style="left:344px;top:928px;width:12px;height:1px;background:#85888d;"></div>
<div style="left:349.5px;top:845px;width:1.6px;height:88px;background:#151618;"></div>
<div style="left:344px;top:853px;width:12px;height:1px;background:#55585d;"></div>
<div style="left:341px;top:862px;width:18px;height:36px;background:linear-gradient(#f6f6f6,#d8d8d8 30%,#ffffff 50%,#e0e0e0 80%,#bdbdbd);border-radius:2px;box-shadow:0 1px 2px rgba(0,0,0,.7);border:1px solid #888;"></div>
<div style="left:342px;top:879px;width:16px;height:1px;background:#333;"></div>
<svg style="left:369px;top:931px" width="13" height="13" viewBox="0 0 13 13"><circle cx="6.5" cy="6.5" r="6.3" fill="#b4b6b8"/><path d="M6.5 6.5 L2.5 2.8" stroke="#3a3d42" stroke-width="2"/></svg>
<div class="t" style="left:322px;top:957px;font-size:13px;color:#e6e6e6;font-weight:bold;">7</div>
<svg style="left:366px;top:957px" width="17" height="10" viewBox="0 0 17 10"><path d="M0 0 H2.2 V6 H4.9 V0 H7.1 V6 H9.9 V0 H12.1 V6 H14.8 V0 H17 V10 H0Z" fill="#c8c8c8"/></svg>
<div style="left:315px;top:973px;width:71px;height:16px;background:#26282b;border-radius:2px;"></div>
<div class="t" style="left:315.5px;top:976px;font-size:10px;color:#8a8c90;width:55.5625px;left:322.71875px;transform:scaleX(0.684);transform-origin:50% 0;">オート: オフ</div>
<div style="left:310px;top:995px;width:81px;height:14px;background:#00ffff;"></div>
<div class="t" style="left:310.0px;top:996px;font-size:12px;color:#0a2020;width:81px;text-align:center;">Backing G</div>
<div style="left:393px;top:577px;width:81px;height:3px;background:#00e5c8;"></div>
<div style="left:393px;top:580px;width:81px;height:110px;background:#3a3d42;"></div>
<svg style="left:397px;top:584px" width="11" height="11" viewBox="0 0 11 11"><path d="M3 2.5 A4.5 4.5 0 1 0 8 2.5" stroke="#3aa0e8" stroke-width="1.7" fill="none"/><path d="M5.5 0 V5" stroke="#3aa0e8" stroke-width="1.7"/></svg>
<div class="t" style="left:411px;top:583px;font-size:12px;color:#cfd1d4;transform:scaleX(0.633);transform-origin:0 0;">インサート</div>
<svg style="left:448px;top:587px" width="8" height="5" viewBox="0 0 8 5"><path d="M0 0 H8 L4.0 5Z" fill="#999"/></svg>
<svg style="left:460px;top:585px" width="10" height="10" viewBox="0 0 10 10"><path d="M5 0.5 V9.5 M0.5 5 H9.5" stroke="#8a8c90" stroke-width="1.8"/></svg>
<div style="left:393px;top:601px;width:81px;height:20px;background:#4a4d52;"></div>
<svg style="left:397px;top:606px" width="11" height="11" viewBox="0 0 11 11"><path d="M3 2.5 A4.5 4.5 0 1 0 8 2.5" stroke="#5ab0ee" stroke-width="1.7" fill="none"/><path d="M5.5 0 V5" stroke="#5ab0ee" stroke-width="1.7"/></svg>
<div class="t" style="left:410px;top:606px;font-size:11px;color:#d4d6d8;transform:scaleX(0.945);transform-origin:0 0;">AmpliTube ..</div>
<svg style="left:460px;top:609px" width="8" height="5" viewBox="0 0 8 5"><path d="M0 0 H8 L4.0 5Z" fill="#6a6d72"/></svg>
<div style="left:393px;top:622px;width:81px;height:20px;background:#4a4d52;"></div>
<svg style="left:397px;top:627px" width="11" height="11" viewBox="0 0 11 11"><path d="M3 2.5 A4.5 4.5 0 1 0 8 2.5" stroke="#5ab0ee" stroke-width="1.7" fill="none"/><path d="M5.5 0 V5" stroke="#5ab0ee" stroke-width="1.7"/></svg>
<div class="t" style="left:410px;top:627px;font-size:11px;color:#d4d6d8;transform:scaleX(0.917);transform-origin:0 0;">Dr Drive</div>
<svg style="left:460px;top:630px" width="8" height="5" viewBox="0 0 8 5"><path d="M0 0 H8 L4.0 5Z" fill="#6a6d72"/></svg>
<div style="left:393px;top:690px;width:81px;height:6px;background:#1b1c1f;"></div>
<div style="left:393px;top:691px;width:81px;height:3px;background:#3a3d42;"></div>
<div style="left:393px;top:696px;width:81px;height:3px;background:#00e5c8;"></div>
<div style="left:393px;top:699px;width:81px;height:310px;background:#3a3d42;"></div>
<div style="left:398px;top:705px;width:71px;height:17px;background:#4b4e53;border-radius:3px 3px 0 0;"></div>
<div class="t" style="left:388.5px;top:708px;font-size:12px;color:#e8b84a;width:77.375px;left:394.8125px;transform:scaleX(0.918);transform-origin:50% 0;">sforzando.. (3)</div>
<div style="left:398px;top:722px;width:71px;height:17px;background:#42454a;"></div>
<div class="t" style="left:393.5px;top:725px;font-size:12px;color:#e8b84a;width:80px;text-align:center;">Guitar</div>
<div style="left:398px;top:739px;width:71px;height:17px;background:#26282b;"></div>
<div style="left:432.0px;top:740px;width:3px;height:16px;background:#2a8fe0;"></div>
<div style="left:398px;top:756px;width:71px;height:16px;background:#36393e;"></div>
<div style="left:433px;top:758px;width:1px;height:13px;background:#2c2e32;"></div>
<div class="t" style="left:395.0px;top:759px;font-size:12px;color:#e0e0e0;width:40px;text-align:center;">-3.8</div>
<div class="t" style="left:431.0px;top:759px;font-size:12px;color:#e0e0e0;width:40px;text-align:center;">&lt;C&gt;</div>
<div style="left:399px;top:779px;width:69px;height:42px;background:#232427;border-radius:3px;"></div>
<div style="left:400px;top:780px;width:33px;height:19px;background:#3f4247;"></div>
<div style="left:434px;top:780px;width:33px;height:19px;background:#3f4247;"></div>
<div class="t" style="left:401.5px;top:783px;font-size:13px;color:#ddd;width:30px;text-align:center;">M</div>
<div class="t" style="left:435.5px;top:783px;font-size:13px;color:#ddd;width:30px;text-align:center;">S</div>
<div style="left:400px;top:800px;width:33px;height:20px;background:#3f4247;"></div>
<div style="left:434px;top:800px;width:33px;height:20px;background:#3f4247;"></div>
<svg style="left:411px;top:805px" width="10" height="10" viewBox="0 0 10 10"><circle cx="5" cy="5" r="4.6" fill="#c8c8c8"/></svg>
<svg style="left:445px;top:804px" width="10" height="11" viewBox="0 0 10 11"><path d="M5 1 A4.5 4.5 0 0 0 5 10Z" fill="#d0d0d0"/><path d="M6.5 1.5 A4.3 4.3 0 0 1 6.5 9.5" stroke="#d0d0d0" stroke-width="1.2" fill="none"/></svg>
<svg style="left:452px;top:829px" width="12" height="11" viewBox="0 0 12 11"><rect y="0" width="12" height="3" fill="#4ab0e8"/><rect y="4" width="12" height="3" fill="#55585d"/><rect y="8" width="12" height="3" fill="#4a4d52"/></svg>
<div style="left:409px;top:829px;width:13px;height:11px;background:#2e3034;"></div>
<div style="left:409px;top:840px;width:13px;height:110px;background:#1e1f22;"></div>
<div style="left:411px;top:843.5px;width:9px;height:1px;background:#1f6a92;"></div>
<div style="left:411px;top:853.3px;width:9px;height:1px;background:#1f6a92;"></div>
<div style="left:411px;top:867.4px;width:9px;height:1px;background:#ddd;"></div>
<div style="left:411px;top:882.4px;width:9px;height:1px;background:#1f6a92;"></div>
<div style="left:411px;top:894.4px;width:9px;height:1px;background:#1f6a92;"></div>
<div style="left:411px;top:909.4px;width:9px;height:1px;background:#1f6a92;"></div>
<div style="left:411px;top:924.4px;width:9px;height:1px;background:#1f6a92;"></div>
<div style="left:411px;top:934.4px;width:9px;height:1px;background:#1f6a92;"></div>
<div style="left:411px;top:942.4px;width:9px;height:1px;background:#1f6a92;"></div>
<div class="t" style="left:387px;top:840px;font-size:8.5px;color:#d8d8d8;letter-spacing:-0.3px;width:20px;text-align:right;">10</div>
<div class="t" style="left:387px;top:849px;font-size:8.5px;color:#d8d8d8;letter-spacing:-0.3px;width:20px;text-align:right;">6</div>
<div class="t" style="left:387px;top:863.5px;font-size:8.5px;color:#d8d8d8;letter-spacing:-0.3px;width:20px;text-align:right;">0</div>
<div class="t" style="left:387px;top:879px;font-size:8.5px;color:#d8d8d8;letter-spacing:-0.3px;width:20px;text-align:right;">-6</div>
<div class="t" style="left:387px;top:890.5px;font-size:8.5px;color:#d8d8d8;letter-spacing:-0.3px;width:20px;text-align:right;">-12</div>
<div class="t" style="left:387px;top:905.5px;font-size:8.5px;color:#d8d8d8;letter-spacing:-0.3px;width:20px;text-align:right;">-24</div>
<div class="t" style="left:387px;top:920.5px;font-size:8.5px;color:#d8d8d8;letter-spacing:-0.3px;width:20px;text-align:right;">-36</div>
<div class="t" style="left:387px;top:930.5px;font-size:8.5px;color:#d8d8d8;letter-spacing:-0.3px;width:20px;text-align:right;">-48</div>
<div style="left:426px;top:892px;width:14px;height:58px;background:#6a6d72;"></div>
<div style="left:427px;top:903px;width:12px;height:1px;background:#85888d;"></div>
<div style="left:427px;top:918px;width:12px;height:1px;background:#85888d;"></div>
<div style="left:427px;top:928px;width:12px;height:1px;background:#85888d;"></div>
<div style="left:432.5px;top:845px;width:1.6px;height:88px;background:#151618;"></div>
<div style="left:427px;top:853px;width:12px;height:1px;background:#55585d;"></div>
<div style="left:424px;top:856px;width:18px;height:36px;background:linear-gradient(#f6f6f6,#d8d8d8 30%,#ffffff 50%,#e0e0e0 80%,#bdbdbd);border-radius:2px;box-shadow:0 1px 2px rgba(0,0,0,.7);border:1px solid #888;"></div>
<div style="left:425px;top:873px;width:16px;height:1px;background:#333;"></div>
<svg style="left:452px;top:931px" width="13" height="13" viewBox="0 0 13 13"><circle cx="6.5" cy="6.5" r="6.3" fill="#b4b6b8"/><path d="M6.5 6.5 L2.5 2.8" stroke="#3a3d42" stroke-width="2"/></svg>
<div class="t" style="left:405px;top:957px;font-size:13px;color:#e6e6e6;font-weight:bold;">8</div>
<svg style="left:449px;top:957px" width="17" height="10" viewBox="0 0 17 10"><path d="M0 0 H2.2 V6 H4.9 V0 H7.1 V6 H9.9 V0 H12.1 V6 H14.8 V0 H17 V10 H0Z" fill="#c8c8c8"/></svg>
<div style="left:398px;top:973px;width:71px;height:16px;background:#26282b;border-radius:2px;"></div>
<div class="t" style="left:398.5px;top:976px;font-size:10px;color:#8a8c90;width:55.5625px;left:405.71875px;transform:scaleX(0.684);transform-origin:50% 0;">オート: オフ</div>
<div style="left:393px;top:995px;width:81px;height:14px;background:#00e5c8;"></div>
<div class="t" style="left:393.0px;top:996px;font-size:12px;color:#0a2020;width:81px;text-align:center;">G Solo</div>
<div style="left:476px;top:577px;width:81px;height:3px;background:#6efc9e;"></div>
<div style="left:476px;top:580px;width:81px;height:110px;background:#3a3d42;"></div>
<svg style="left:480px;top:584px" width="11" height="11" viewBox="0 0 11 11"><path d="M3 2.5 A4.5 4.5 0 1 0 8 2.5" stroke="#3aa0e8" stroke-width="1.7" fill="none"/><path d="M5.5 0 V5" stroke="#3aa0e8" stroke-width="1.7"/></svg>
<div class="t" style="left:494px;top:583px;font-size:12px;color:#cfd1d4;transform:scaleX(0.633);transform-origin:0 0;">インサート</div>
<svg style="left:531px;top:587px" width="8" height="5" viewBox="0 0 8 5"><path d="M0 0 H8 L4.0 5Z" fill="#999"/></svg>
<svg style="left:543px;top:585px" width="10" height="10" viewBox="0 0 10 10"><path d="M5 0.5 V9.5 M0.5 5 H9.5" stroke="#8a8c90" stroke-width="1.8"/></svg>
<div style="left:476px;top:601px;width:81px;height:20px;background:#4a4d52;"></div>
<svg style="left:480px;top:606px" width="11" height="11" viewBox="0 0 11 11"><path d="M3 2.5 A4.5 4.5 0 1 0 8 2.5" stroke="#5ab0ee" stroke-width="1.7" fill="none"/><path d="M5.5 0 V5" stroke="#5ab0ee" stroke-width="1.7"/></svg>
<div class="t" style="left:493px;top:606px;font-size:11px;color:#d4d6d8;transform:scaleX(0.945);transform-origin:0 0;">AmpliTube ..</div>
<svg style="left:543px;top:609px" width="8" height="5" viewBox="0 0 8 5"><path d="M0 0 H8 L4.0 5Z" fill="#6a6d72"/></svg>
<div style="left:476px;top:622px;width:81px;height:20px;background:#4a4d52;"></div>
<svg style="left:480px;top:627px" width="11" height="11" viewBox="0 0 11 11"><path d="M3 2.5 A4.5 4.5 0 1 0 8 2.5" stroke="#5ab0ee" stroke-width="1.7" fill="none"/><path d="M5.5 0 V5" stroke="#5ab0ee" stroke-width="1.7"/></svg>
<div class="t" style="left:493px;top:627px;font-size:11px;color:#d4d6d8;transform:scaleX(0.917);transform-origin:0 0;">Dr Drive</div>
<svg style="left:543px;top:630px" width="8" height="5" viewBox="0 0 8 5"><path d="M0 0 H8 L4.0 5Z" fill="#6a6d72"/></svg>
<div style="left:476px;top:690px;width:81px;height:6px;background:#1b1c1f;"></div>
<div style="left:476px;top:691px;width:81px;height:3px;background:#3a3d42;"></div>
<div style="left:476px;top:696px;width:81px;height:3px;background:#6efc9e;"></div>
<div style="left:476px;top:699px;width:81px;height:310px;background:#3a3d42;"></div>
<div style="left:481px;top:705px;width:71px;height:17px;background:#4b4e53;border-radius:3px 3px 0 0;"></div>
<div class="t" style="left:471.5px;top:708px;font-size:12px;color:#e8b84a;width:77.375px;left:477.8125px;transform:scaleX(0.918);transform-origin:50% 0;">sforzando.. (4)</div>
<div style="left:481px;top:722px;width:71px;height:17px;background:#42454a;"></div>
<div class="t" style="left:476.5px;top:725px;font-size:12px;color:#e8b84a;width:80px;text-align:center;">Guitar</div>
<div style="left:481px;top:739px;width:71px;height:17px;background:#26282b;"></div>
<svg style="left:509.5px;top:740px" width="7.0" height="16" viewBox="0 0 7.0 16"><path d="M0 0 L7.0 16 H0Z" fill="#1d5a88"/><path d="M0 0 L7.0 16 V0Z" fill="#1d4a6a"/></svg>
<div style="left:509.5px;top:740px;width:3px;height:16px;background:#2a8fe0;"></div>
<div style="left:481px;top:756px;width:71px;height:16px;background:#36393e;"></div>
<div style="left:516px;top:758px;width:1px;height:13px;background:#2c2e32;"></div>
<div class="t" style="left:478.0px;top:759px;font-size:12px;color:#e0e0e0;width:40px;text-align:center;">-2.9</div>
<div class="t" style="left:514.0px;top:759px;font-size:12px;color:#e0e0e0;width:40px;text-align:center;">L20</div>
<div style="left:482px;top:779px;width:69px;height:42px;background:#232427;border-radius:3px;"></div>
<div style="left:483px;top:780px;width:33px;height:19px;background:#3f4247;"></div>
<div style="left:517px;top:780px;width:33px;height:19px;background:#3f4247;"></div>
<div class="t" style="left:484.5px;top:783px;font-size:13px;color:#ddd;width:30px;text-align:center;">M</div>
<div class="t" style="left:518.5px;top:783px;font-size:13px;color:#ddd;width:30px;text-align:center;">S</div>
<div style="left:483px;top:800px;width:33px;height:20px;background:#3f4247;"></div>
<div style="left:517px;top:800px;width:33px;height:20px;background:#3f4247;"></div>
<svg style="left:494px;top:805px" width="10" height="10" viewBox="0 0 10 10"><circle cx="5" cy="5" r="4.6" fill="#c8c8c8"/></svg>
<svg style="left:528px;top:804px" width="10" height="11" viewBox="0 0 10 11"><path d="M5 1 A4.5 4.5 0 0 0 5 10Z" fill="#d0d0d0"/><path d="M6.5 1.5 A4.3 4.3 0 0 1 6.5 9.5" stroke="#d0d0d0" stroke-width="1.2" fill="none"/></svg>
<svg style="left:535px;top:829px" width="12" height="11" viewBox="0 0 12 11"><rect y="0" width="12" height="3" fill="#4ab0e8"/><rect y="4" width="12" height="3" fill="#55585d"/><rect y="8" width="12" height="3" fill="#4a4d52"/></svg>
<div style="left:492px;top:829px;width:13px;height:11px;background:#2e3034;"></div>
<div style="left:492px;top:840px;width:13px;height:110px;background:#1e1f22;"></div>
<div style="left:494px;top:843.5px;width:9px;height:1px;background:#1f6a92;"></div>
<div style="left:494px;top:853.3px;width:9px;height:1px;background:#1f6a92;"></div>
<div style="left:494px;top:867.4px;width:9px;height:1px;background:#ddd;"></div>
<div style="left:494px;top:882.4px;width:9px;height:1px;background:#1f6a92;"></div>
<div style="left:494px;top:894.4px;width:9px;height:1px;background:#1f6a92;"></div>
<div style="left:494px;top:909.4px;width:9px;height:1px;background:#1f6a92;"></div>
<div style="left:494px;top:924.4px;width:9px;height:1px;background:#1f6a92;"></div>
<div style="left:494px;top:934.4px;width:9px;height:1px;background:#1f6a92;"></div>
<div style="left:494px;top:942.4px;width:9px;height:1px;background:#1f6a92;"></div>
<div class="t" style="left:470px;top:840px;font-size:8.5px;color:#d8d8d8;letter-spacing:-0.3px;width:20px;text-align:right;">10</div>
<div class="t" style="left:470px;top:849px;font-size:8.5px;color:#d8d8d8;letter-spacing:-0.3px;width:20px;text-align:right;">6</div>
<div class="t" style="left:470px;top:863.5px;font-size:8.5px;color:#d8d8d8;letter-spacing:-0.3px;width:20px;text-align:right;">0</div>
<div class="t" style="left:470px;top:879px;font-size:8.5px;color:#d8d8d8;letter-spacing:-0.3px;width:20px;text-align:right;">-6</div>
<div class="t" style="left:470px;top:890.5px;font-size:8.5px;color:#d8d8d8;letter-spacing:-0.3px;width:20px;text-align:right;">-12</div>
<div class="t" style="left:470px;top:905.5px;font-size:8.5px;color:#d8d8d8;letter-spacing:-0.3px;width:20px;text-align:right;">-24</div>
<div class="t" style="left:470px;top:920.5px;font-size:8.5px;color:#d8d8d8;letter-spacing:-0.3px;width:20px;text-align:right;">-36</div>
<div class="t" style="left:470px;top:930.5px;font-size:8.5px;color:#d8d8d8;letter-spacing:-0.3px;width:20px;text-align:right;">-48</div>
<div style="left:509px;top:891px;width:14px;height:59px;background:#6a6d72;"></div>
<div style="left:510px;top:903px;width:12px;height:1px;background:#85888d;"></div>
<div style="left:510px;top:918px;width:12px;height:1px;background:#85888d;"></div>
<div style="left:510px;top:928px;width:12px;height:1px;background:#85888d;"></div>
<div style="left:515.5px;top:845px;width:1.6px;height:88px;background:#151618;"></div>
<div style="left:510px;top:853px;width:12px;height:1px;background:#55585d;"></div>
<div style="left:507px;top:855px;width:18px;height:36px;background:linear-gradient(#f6f6f6,#d8d8d8 30%,#ffffff 50%,#e0e0e0 80%,#bdbdbd);border-radius:2px;box-shadow:0 1px 2px rgba(0,0,0,.7);border:1px solid #888;"></div>
<div style="left:508px;top:872px;width:16px;height:1px;background:#333;"></div>
<svg style="left:535px;top:931px" width="13" height="13" viewBox="0 0 13 13"><circle cx="6.5" cy="6.5" r="6.3" fill="#b4b6b8"/><path d="M6.5 6.5 L2.5 2.8" stroke="#3a3d42" stroke-width="2"/></svg>
<div class="t" style="left:488px;top:957px;font-size:13px;color:#e6e6e6;font-weight:bold;">9</div>
<svg style="left:532px;top:957px" width="17" height="10" viewBox="0 0 17 10"><path d="M0 0 H2.2 V6 H4.9 V0 H7.1 V6 H9.9 V0 H12.1 V6 H14.8 V0 H17 V10 H0Z" fill="#c8c8c8"/></svg>
<div style="left:481px;top:973px;width:71px;height:16px;background:#26282b;border-radius:2px;"></div>
<div class="t" style="left:481.5px;top:976px;font-size:10px;color:#8a8c90;width:55.5625px;left:488.71875px;transform:scaleX(0.684);transform-origin:50% 0;">オート: オフ</div>
<div style="left:476px;top:995px;width:81px;height:14px;background:#6efc9e;"></div>
<div class="t" style="left:476.0px;top:996px;font-size:12px;color:#0a2010;width:81px;text-align:center;">G Solo L</div>
<div style="left:559px;top:577px;width:81px;height:3px;background:#a8fb8f;"></div>
<div style="left:559px;top:580px;width:81px;height:110px;background:#3a3d42;"></div>
<svg style="left:563px;top:584px" width="11" height="11" viewBox="0 0 11 11"><path d="M3 2.5 A4.5 4.5 0 1 0 8 2.5" stroke="#3aa0e8" stroke-width="1.7" fill="none"/><path d="M5.5 0 V5" stroke="#3aa0e8" stroke-width="1.7"/></svg>
<div class="t" style="left:577px;top:583px;font-size:12px;color:#cfd1d4;transform:scaleX(0.633);transform-origin:0 0;">インサート</div>
<svg style="left:614px;top:587px" width="8" height="5" viewBox="0 0 8 5"><path d="M0 0 H8 L4.0 5Z" fill="#999"/></svg>
<svg style="left:626px;top:585px" width="10" height="10" viewBox="0 0 10 10"><path d="M5 0.5 V9.5 M0.5 5 H9.5" stroke="#8a8c90" stroke-width="1.8"/></svg>
<div style="left:559px;top:601px;width:81px;height:20px;background:#4a4d52;"></div>
<svg style="left:563px;top:606px" width="11" height="11" viewBox="0 0 11 11"><path d="M3 2.5 A4.5 4.5 0 1 0 8 2.5" stroke="#5ab0ee" stroke-width="1.7" fill="none"/><path d="M5.5 0 V5" stroke="#5ab0ee" stroke-width="1.7"/></svg>
<div class="t" style="left:576px;top:606px;font-size:11px;color:#d4d6d8;transform:scaleX(0.945);transform-origin:0 0;">AmpliTube ..</div>
<svg style="left:626px;top:609px" width="8" height="5" viewBox="0 0 8 5"><path d="M0 0 H8 L4.0 5Z" fill="#6a6d72"/></svg>
<div style="left:559px;top:622px;width:81px;height:20px;background:#4a4d52;"></div>
<svg style="left:563px;top:627px" width="11" height="11" viewBox="0 0 11 11"><path d="M3 2.5 A4.5 4.5 0 1 0 8 2.5" stroke="#5ab0ee" stroke-width="1.7" fill="none"/><path d="M5.5 0 V5" stroke="#5ab0ee" stroke-width="1.7"/></svg>
<div class="t" style="left:576px;top:627px;font-size:11px;color:#d4d6d8;transform:scaleX(0.917);transform-origin:0 0;">Dr Drive</div>
<svg style="left:626px;top:630px" width="8" height="5" viewBox="0 0 8 5"><path d="M0 0 H8 L4.0 5Z" fill="#6a6d72"/></svg>
<div style="left:559px;top:690px;width:81px;height:6px;background:#1b1c1f;"></div>
<div style="left:559px;top:691px;width:81px;height:3px;background:#3a3d42;"></div>
<div style="left:559px;top:696px;width:81px;height:3px;background:#a8fb8f;"></div>
<div style="left:559px;top:699px;width:81px;height:310px;background:#3a3d42;"></div>
<div style="left:564px;top:705px;width:71px;height:17px;background:#4b4e53;border-radius:3px 3px 0 0;"></div>
<div class="t" style="left:554.5px;top:708px;font-size:12px;color:#e8b84a;width:77.375px;left:560.8125px;transform:scaleX(0.918);transform-origin:50% 0;">sforzando.. (5)</div>
<div style="left:564px;top:722px;width:71px;height:17px;background:#42454a;"></div>
<div class="t" style="left:559.5px;top:725px;font-size:12px;color:#e8b84a;width:80px;text-align:center;">Guitar</div>
<div style="left:564px;top:739px;width:71px;height:17px;background:#26282b;"></div>
<svg style="left:599.5px;top:740px" width="7.0" height="16" viewBox="0 0 7.0 16"><path d="M7.0 0 L0 16 H7.0Z" fill="#1d5a88"/><path d="M7.0 0 L0 16 V0Z" fill="#1d4a6a"/></svg>
<div style="left:603.5px;top:740px;width:3px;height:16px;background:#2a8fe0;"></div>
<div style="left:564px;top:756px;width:71px;height:16px;background:#36393e;"></div>
<div style="left:599px;top:758px;width:1px;height:13px;background:#2c2e32;"></div>
<div class="t" style="left:561.0px;top:759px;font-size:12px;color:#e0e0e0;width:40px;text-align:center;">-2.9</div>
<div class="t" style="left:597.0px;top:759px;font-size:12px;color:#e0e0e0;width:40px;text-align:center;">R20</div>
<div style="left:565px;top:779px;width:69px;height:42px;background:#232427;border-radius:3px;"></div>
<div style="left:566px;top:780px;width:33px;height:19px;background:#3f4247;"></div>
<div style="left:600px;top:780px;width:33px;height:19px;background:#3f4247;"></div>
<div class="t" style="left:567.5px;top:783px;font-size:13px;color:#ddd;width:30px;text-align:center;">M</div>
<div class="t" style="left:601.5px;top:783px;font-size:13px;color:#ddd;width:30px;text-align:center;">S</div>
<div style="left:566px;top:800px;width:33px;height:20px;background:#f05050;"></div>
<div style="left:600px;top:800px;width:33px;height:20px;background:#5ab4d6;"></div>
<svg style="left:577px;top:805px" width="10" height="10" viewBox="0 0 10 10"><circle cx="5" cy="5" r="4.6" fill="#f8f8f8"/></svg>
<svg style="left:611px;top:804px" width="10" height="11" viewBox="0 0 10 11"><path d="M5 1 A4.5 4.5 0 0 0 5 10Z" fill="#d0d0d0"/><path d="M6.5 1.5 A4.3 4.3 0 0 1 6.5 9.5" stroke="#d0d0d0" stroke-width="1.2" fill="none"/></svg>
<svg style="left:618px;top:829px" width="12" height="11" viewBox="0 0 12 11"><rect y="0" width="12" height="3" fill="#4ab0e8"/><rect y="4" width="12" height="3" fill="#55585d"/><rect y="8" width="12" height="3" fill="#4a4d52"/></svg>
<div style="left:575px;top:829px;width:13px;height:11px;background:#2e3034;"></div>
<div style="left:575px;top:840px;width:13px;height:110px;background:#1e1f22;"></div>
<div style="left:577px;top:843.5px;width:9px;height:1px;background:#1f6a92;"></div>
<div style="left:577px;top:853.3px;width:9px;height:1px;background:#1f6a92;"></div>
<div style="left:577px;top:867.4px;width:9px;height:1px;background:#ddd;"></div>
<div style="left:577px;top:882.4px;width:9px;height:1px;background:#1f6a92;"></div>
<div style="left:577px;top:894.4px;width:9px;height:1px;background:#1f6a92;"></div>
<div style="left:577px;top:909.4px;width:9px;height:1px;background:#1f6a92;"></div>
<div style="left:577px;top:924.4px;width:9px;height:1px;background:#1f6a92;"></div>
<div style="left:577px;top:934.4px;width:9px;height:1px;background:#1f6a92;"></div>
<div style="left:577px;top:942.4px;width:9px;height:1px;background:#1f6a92;"></div>
<div class="t" style="left:553px;top:840px;font-size:8.5px;color:#d8d8d8;letter-spacing:-0.3px;width:20px;text-align:right;">10</div>
<div class="t" style="left:553px;top:849px;font-size:8.5px;color:#d8d8d8;letter-spacing:-0.3px;width:20px;text-align:right;">6</div>
<div class="t" style="left:553px;top:863.5px;font-size:8.5px;color:#d8d8d8;letter-spacing:-0.3px;width:20px;text-align:right;">0</div>
<div class="t" style="left:553px;top:879px;font-size:8.5px;color:#d8d8d8;letter-spacing:-0.3px;width:20px;text-align:right;">-6</div>
<div class="t" style="left:553px;top:890.5px;font-size:8.5px;color:#d8d8d8;letter-spacing:-0.3px;width:20px;text-align:right;">-12</div>
<div class="t" style="left:553px;top:905.5px;font-size:8.5px;color:#d8d8d8;letter-spacing:-0.3px;width:20px;text-align:right;">-24</div>
<div class="t" style="left:553px;top:920.5px;font-size:8.5px;color:#d8d8d8;letter-spacing:-0.3px;width:20px;text-align:right;">-36</div>
<div class="t" style="left:553px;top:930.5px;font-size:8.5px;color:#d8d8d8;letter-spacing:-0.3px;width:20px;text-align:right;">-48</div>
<div style="left:592px;top:891px;width:14px;height:59px;background:#6a6d72;"></div>
<div style="left:593px;top:903px;width:12px;height:1px;background:#85888d;"></div>
<div style="left:593px;top:918px;width:12px;height:1px;background:#85888d;"></div>
<div style="left:593px;top:928px;width:12px;height:1px;background:#85888d;"></div>
<div style="left:598.5px;top:845px;width:1.6px;height:88px;background:#151618;"></div>
<div style="left:593px;top:853px;width:12px;height:1px;background:#55585d;"></div>
<div style="left:590px;top:855px;width:18px;height:36px;background:linear-gradient(#f6f6f6,#d8d8d8 30%,#ffffff 50%,#e0e0e0 80%,#bdbdbd);border-radius:2px;box-shadow:0 1px 2px rgba(0,0,0,.7);border:1px solid #888;"></div>
<div style="left:591px;top:872px;width:16px;height:1px;background:#333;"></div>
<svg style="left:618px;top:931px" width="13" height="13" viewBox="0 0 13 13"><circle cx="6.5" cy="6.5" r="6.3" fill="#b4b6b8"/><path d="M6.5 6.5 L2.5 2.8" stroke="#3a3d42" stroke-width="2"/></svg>
<div class="t" style="left:571px;top:957px;font-size:13px;color:#e6e6e6;font-weight:bold;">10</div>
<svg style="left:615px;top:957px" width="17" height="10" viewBox="0 0 17 10"><path d="M0 0 H2.2 V6 H4.9 V0 H7.1 V6 H9.9 V0 H12.1 V6 H14.8 V0 H17 V10 H0Z" fill="#c8c8c8"/></svg>
<div style="left:564px;top:973px;width:71px;height:16px;background:#26282b;border-radius:2px;"></div>
<div class="t" style="left:564.5px;top:976px;font-size:10px;color:#8a8c90;width:55.5625px;left:571.71875px;transform:scaleX(0.684);transform-origin:50% 0;">オート: オフ</div>
<div style="left:559px;top:995px;width:81px;height:14px;background:#a8fb8f;"></div>
<div class="t" style="left:559.0px;top:996px;font-size:12px;color:#102010;width:81px;text-align:center;">G Solo R</div>
<div style="left:642px;top:577px;width:81px;height:3px;background:#00e5c8;"></div>
<div style="left:642px;top:580px;width:81px;height:110px;background:#3a3d42;"></div>
<svg style="left:646px;top:584px" width="11" height="11" viewBox="0 0 11 11"><path d="M3 2.5 A4.5 4.5 0 1 0 8 2.5" stroke="#3aa0e8" stroke-width="1.7" fill="none"/><path d="M5.5 0 V5" stroke="#3aa0e8" stroke-width="1.7"/></svg>
<div class="t" style="left:660px;top:583px;font-size:12px;color:#cfd1d4;transform:scaleX(0.633);transform-origin:0 0;">インサート</div>
<svg style="left:697px;top:587px" width="8" height="5" viewBox="0 0 8 5"><path d="M0 0 H8 L4.0 5Z" fill="#999"/></svg>
<svg style="left:709px;top:585px" width="10" height="10" viewBox="0 0 10 10"><path d="M5 0.5 V9.5 M0.5 5 H9.5" stroke="#8a8c90" stroke-width="1.8"/></svg>
<div style="left:642px;top:601px;width:81px;height:20px;background:#4a4d52;"></div>
<svg style="left:646px;top:606px" width="11" height="11" viewBox="0 0 11 11"><path d="M3 2.5 A4.5 4.5 0 1 0 8 2.5" stroke="#5ab0ee" stroke-width="1.7" fill="none"/><path d="M5.5 0 V5" stroke="#5ab0ee" stroke-width="1.7"/></svg>
<div class="t" style="left:659px;top:606px;font-size:11px;color:#d4d6d8;transform:scaleX(0.933);transform-origin:0 0;">MCompress..</div>
<svg style="left:709px;top:609px" width="8" height="5" viewBox="0 0 8 5"><path d="M0 0 H8 L4.0 5Z" fill="#6a6d72"/></svg>
<div style="left:642px;top:622px;width:81px;height:20px;background:#4a4d52;"></div>
<svg style="left:646px;top:627px" width="11" height="11" viewBox="0 0 11 11"><path d="M3 2.5 A4.5 4.5 0 1 0 8 2.5" stroke="#5ab0ee" stroke-width="1.7" fill="none"/><path d="M5.5 0 V5" stroke="#5ab0ee" stroke-width="1.7"/></svg>
<div class="t" style="left:659px;top:627px;font-size:11px;color:#d4d6d8;transform:scaleX(0.887);transform-origin:0 0;">Pro EQ</div>
<svg style="left:709px;top:630px" width="8" height="5" viewBox="0 0 8 5"><path d="M0 0 H8 L4.0 5Z" fill="#6a6d72"/></svg>
<div style="left:642px;top:690px;width:81px;height:6px;background:#1b1c1f;"></div>
<div style="left:642px;top:691px;width:81px;height:3px;background:#3a3d42;"></div>
<div style="left:642px;top:696px;width:81px;height:3px;background:#00e5c8;"></div>
<div style="left:642px;top:699px;width:81px;height:310px;background:#3a3d42;"></div>
<div style="left:647px;top:705px;width:71px;height:17px;background:#4b4e53;border-radius:3px 3px 0 0;"></div>
<div class="t" style="left:637.5px;top:708px;font-size:12px;color:#e8b84a;width:90px;text-align:center;">Mai Tai</div>
<div style="left:647px;top:722px;width:71px;height:17px;background:#42454a;"></div>
<div class="t" style="left:642.5px;top:725px;font-size:12px;color:#e8b84a;width:36px;left:664.5px;transform:scaleX(0.722);transform-origin:50% 0;">メイン</div>
<div style="left:647px;top:739px;width:71px;height:17px;background:#26282b;"></div>
<svg style="left:682.5px;top:740px" width="17.5" height="16" viewBox="0 0 17.5 16"><path d="M17.5 0 L0 16 H17.5Z" fill="#1d5a88"/><path d="M17.5 0 L0 16 V0Z" fill="#1d4a6a"/></svg>
<div style="left:697.0px;top:740px;width:3px;height:16px;background:#2a8fe0;"></div>
<div style="left:647px;top:756px;width:71px;height:16px;background:#36393e;"></div>
<div style="left:682px;top:758px;width:1px;height:13px;background:#2c2e32;"></div>
<div class="t" style="left:644.0px;top:759px;font-size:12px;color:#e0e0e0;width:40px;text-align:center;">-15.8</div>
<div class="t" style="left:680.0px;top:759px;font-size:12px;color:#e0e0e0;width:40px;text-align:center;">R50</div>
<div style="left:648px;top:779px;width:69px;height:42px;background:#232427;border-radius:3px;"></div>
<div style="left:649px;top:780px;width:33px;height:19px;background:#3f4247;"></div>
<div style="left:683px;top:780px;width:33px;height:19px;background:#3f4247;"></div>
<div class="t" style="left:650.5px;top:783px;font-size:13px;color:#ddd;width:30px;text-align:center;">M</div>
<div class="t" style="left:684.5px;top:783px;font-size:13px;color:#ddd;width:30px;text-align:center;">S</div>
<div style="left:649px;top:800px;width:33px;height:20px;background:#3f4247;"></div>
<div style="left:683px;top:800px;width:33px;height:20px;background:#3f4247;"></div>
<svg style="left:660px;top:805px" width="10" height="10" viewBox="0 0 10 10"><circle cx="5" cy="5" r="4.6" fill="#c8c8c8"/></svg>
<svg style="left:694px;top:804px" width="10" height="11" viewBox="0 0 10 11"><path d="M5 1 A4.5 4.5 0 0 0 5 10Z" fill="#d0d0d0"/><path d="M6.5 1.5 A4.3 4.3 0 0 1 6.5 9.5" stroke="#d0d0d0" stroke-width="1.2" fill="none"/></svg>
<svg style="left:701px;top:829px" width="12" height="11" viewBox="0 0 12 11"><rect y="0" width="12" height="3" fill="#4ab0e8"/><rect y="4" width="12" height="3" fill="#55585d"/><rect y="8" width="12" height="3" fill="#4a4d52"/></svg>
<div style="left:658px;top:829px;width:13px;height:11px;background:#2e3034;"></div>
<div style="left:658px;top:840px;width:13px;height:110px;background:#1e1f22;"></div>
<div style="left:660px;top:843.5px;width:9px;height:1px;background:#1f6a92;"></div>
<div style="left:660px;top:853.3px;width:9px;height:1px;background:#1f6a92;"></div>
<div style="left:660px;top:867.4px;width:9px;height:1px;background:#ddd;"></div>
<div style="left:660px;top:882.4px;width:9px;height:1px;background:#1f6a92;"></div>
<div style="left:660px;top:894.4px;width:9px;height:1px;background:#1f6a92;"></div>
<div style="left:660px;top:909.4px;width:9px;height:1px;background:#1f6a92;"></div>
<div style="left:660px;top:924.4px;width:9px;height:1px;background:#1f6a92;"></div>
<div style="left:660px;top:934.4px;width:9px;height:1px;background:#1f6a92;"></div>
<div style="left:660px;top:942.4px;width:9px;height:1px;background:#1f6a92;"></div>
<div class="t" style="left:636px;top:840px;font-size:8.5px;color:#d8d8d8;letter-spacing:-0.3px;width:20px;text-align:right;">10</div>
<div class="t" style="left:636px;top:849px;font-size:8.5px;color:#d8d8d8;letter-spacing:-0.3px;width:20px;text-align:right;">6</div>
<div class="t" style="left:636px;top:863.5px;font-size:8.5px;color:#d8d8d8;letter-spacing:-0.3px;width:20px;text-align:right;">0</div>
<div class="t" style="left:636px;top:879px;font-size:8.5px;color:#d8d8d8;letter-spacing:-0.3px;width:20px;text-align:right;">-6</div>
<div class="t" style="left:636px;top:890.5px;font-size:8.5px;color:#d8d8d8;letter-spacing:-0.3px;width:20px;text-align:right;">-12</div>
<div class="t" style="left:636px;top:905.5px;font-size:8.5px;color:#d8d8d8;letter-spacing:-0.3px;width:20px;text-align:right;">-24</div>
<div class="t" style="left:636px;top:920.5px;font-size:8.5px;color:#d8d8d8;letter-spacing:-0.3px;width:20px;text-align:right;">-36</div>
<div class="t" style="left:636px;top:930.5px;font-size:8.5px;color:#d8d8d8;letter-spacing:-0.3px;width:20px;text-align:right;">-48</div>
<div style="left:675px;top:911px;width:14px;height:39px;background:#6a6d72;"></div>
<div style="left:676px;top:918px;width:12px;height:1px;background:#85888d;"></div>
<div style="left:676px;top:928px;width:12px;height:1px;background:#85888d;"></div>
<div style="left:681.5px;top:845px;width:1.6px;height:88px;background:#151618;"></div>
<div style="left:676px;top:853px;width:12px;height:1px;background:#55585d;"></div>
<div style="left:676px;top:867px;width:12px;height:1px;background:#55585d;"></div>
<div style="left:673px;top:875px;width:18px;height:36px;background:linear-gradient(#f6f6f6,#d8d8d8 30%,#ffffff 50%,#e0e0e0 80%,#bdbdbd);border-radius:2px;box-shadow:0 1px 2px rgba(0,0,0,.7);border:1px solid #888;"></div>
<div style="left:674px;top:892px;width:16px;height:1px;background:#333;"></div>
<svg style="left:701px;top:931px" width="13" height="13" viewBox="0 0 13 13"><circle cx="6.5" cy="6.5" r="6.3" fill="#b4b6b8"/><path d="M6.5 6.5 L2.5 2.8" stroke="#3a3d42" stroke-width="2"/></svg>
<div class="t" style="left:654px;top:957px;font-size:13px;color:#e6e6e6;font-weight:bold;">11</div>
<svg style="left:698px;top:957px" width="17" height="10" viewBox="0 0 17 10"><path d="M0 0 H2.2 V6 H4.9 V0 H7.1 V6 H9.9 V0 H12.1 V6 H14.8 V0 H17 V10 H0Z" fill="#c8c8c8"/></svg>
<div style="left:647px;top:973px;width:71px;height:16px;background:#26282b;border-radius:2px;"></div>
<div class="t" style="left:647.5px;top:976px;font-size:10px;color:#8a8c90;width:55.5625px;left:654.71875px;transform:scaleX(0.684);transform-origin:50% 0;">オート: オフ</div>
<div style="left:642px;top:995px;width:81px;height:14px;background:#00e5c8;"></div>
<div class="t" style="left:642.0px;top:996px;font-size:12px;color:#0a2020;width:81px;text-align:center;">Synth</div>
<div style="left:725px;top:577px;width:81px;height:3px;background:#0a97d6;"></div>
<div style="left:725px;top:580px;width:81px;height:110px;background:#3a3d42;"></div>
<svg style="left:729px;top:584px" width="11" height="11" viewBox="0 0 11 11"><path d="M3 2.5 A4.5 4.5 0 1 0 8 2.5" stroke="#3aa0e8" stroke-width="1.7" fill="none"/><path d="M5.5 0 V5" stroke="#3aa0e8" stroke-width="1.7"/></svg>
<div class="t" style="left:743px;top:583px;font-size:12px;color:#cfd1d4;transform:scaleX(0.633);transform-origin:0 0;">インサート</div>
<svg style="left:780px;top:587px" width="8" height="5" viewBox="0 0 8 5"><path d="M0 0 H8 L4.0 5Z" fill="#999"/></svg>
<svg style="left:792px;top:585px" width="10" height="10" viewBox="0 0 10 10"><path d="M5 0.5 V9.5 M0.5 5 H9.5" stroke="#8a8c90" stroke-width="1.8"/></svg>
<div style="left:725px;top:601px;width:81px;height:20px;background:#4a4d52;"></div>
<svg style="left:729px;top:606px" width="11" height="11" viewBox="0 0 11 11"><path d="M3 2.5 A4.5 4.5 0 1 0 8 2.5" stroke="#5ab0ee" stroke-width="1.7" fill="none"/><path d="M5.5 0 V5" stroke="#5ab0ee" stroke-width="1.7"/></svg>
<div class="t" style="left:742px;top:606px;font-size:11px;color:#d4d6d8;transform:scaleX(0.846);transform-origin:0 0;">Chorus</div>
<svg style="left:792px;top:609px" width="8" height="5" viewBox="0 0 8 5"><path d="M0 0 H8 L4.0 5Z" fill="#6a6d72"/></svg>
<div style="left:725px;top:622px;width:81px;height:20px;background:#4a4d52;"></div>
<svg style="left:729px;top:627px" width="11" height="11" viewBox="0 0 11 11"><path d="M3 2.5 A4.5 4.5 0 1 0 8 2.5" stroke="#5ab0ee" stroke-width="1.7" fill="none"/><path d="M5.5 0 V5" stroke="#5ab0ee" stroke-width="1.7"/></svg>
<div class="t" style="left:742px;top:627px;font-size:11px;color:#d4d6d8;transform:scaleX(0.878);transform-origin:0 0;">Ozone Imag..</div>
<svg style="left:792px;top:630px" width="8" height="5" viewBox="0 0 8 5"><path d="M0 0 H8 L4.0 5Z" fill="#6a6d72"/></svg>
<div style="left:725px;top:690px;width:81px;height:6px;background:#1b1c1f;"></div>
<div style="left:725px;top:691px;width:81px;height:3px;background:#3a3d42;"></div>
<div style="left:725px;top:696px;width:81px;height:3px;background:#0a97d6;"></div>
<div style="left:725px;top:699px;width:81px;height:310px;background:#3a3d42;"></div>
<div style="left:730px;top:705px;width:71px;height:17px;background:#4b4e53;border-radius:3px 3px 0 0;"></div>
<div class="t" style="left:720.5px;top:708px;font-size:12px;color:#e8b84a;width:90px;text-align:center;">Presence 2</div>
<div style="left:730px;top:722px;width:71px;height:17px;background:#42454a;"></div>
<div class="t" style="left:725.5px;top:725px;font-size:12px;color:#e8b84a;width:36px;left:747.5px;transform:scaleX(0.722);transform-origin:50% 0;">メイン</div>
<div style="left:730px;top:739px;width:71px;height:17px;background:#26282b;"></div>
<div style="left:764.0px;top:740px;width:3px;height:16px;background:#2a8fe0;"></div>
<div style="left:730px;top:756px;width:71px;height:16px;background:#36393e;"></div>
<div style="left:765px;top:758px;width:1px;height:13px;background:#2c2e32;"></div>
<div class="t" style="left:727.0px;top:759px;font-size:12px;color:#e0e0e0;width:40px;text-align:center;">-10.0</div>
<div class="t" style="left:763.0px;top:759px;font-size:12px;color:#e0e0e0;width:40px;text-align:center;">&lt;C&gt;</div>
<div style="left:731px;top:779px;width:69px;height:42px;background:#232427;border-radius:3px;"></div>
<div style="left:732px;top:780px;width:33px;height:19px;background:#3f4247;"></div>
<div style="left:766px;top:780px;width:33px;height:19px;background:#3f4247;"></div>
<div class="t" style="left:733.5px;top:783px;font-size:13px;color:#ddd;width:30px;text-align:center;">M</div>
<div class="t" style="left:767.5px;top:783px;font-size:13px;color:#ddd;width:30px;text-align:center;">S</div>
<div style="left:732px;top:800px;width:33px;height:20px;background:#3f4247;"></div>
<div style="left:766px;top:800px;width:33px;height:20px;background:#3f4247;"></div>
<svg style="left:743px;top:805px" width="10" height="10" viewBox="0 0 10 10"><circle cx="5" cy="5" r="4.6" fill="#c8c8c8"/></svg>
<svg style="left:777px;top:804px" width="10" height="11" viewBox="0 0 10 11"><path d="M5 1 A4.5 4.5 0 0 0 5 10Z" fill="#d0d0d0"/><path d="M6.5 1.5 A4.3 4.3 0 0 1 6.5 9.5" stroke="#d0d0d0" stroke-width="1.2" fill="none"/></svg>
<svg style="left:784px;top:829px" width="12" height="11" viewBox="0 0 12 11"><rect y="0" width="12" height="3" fill="#4ab0e8"/><rect y="4" width="12" height="3" fill="#55585d"/><rect y="8" width="12" height="3" fill="#4a4d52"/></svg>
<div style="left:741px;top:829px;width:13px;height:11px;background:#2e3034;"></div>
<div style="left:741px;top:840px;width:13px;height:110px;background:#1e1f22;"></div>
<div style="left:743px;top:843.5px;width:9px;height:1px;background:#1f6a92;"></div>
<div style="left:743px;top:853.3px;width:9px;height:1px;background:#1f6a92;"></div>
<div style="left:743px;top:867.4px;width:9px;height:1px;background:#ddd;"></div>
<div style="left:743px;top:882.4px;width:9px;height:1px;background:#1f6a92;"></div>
<div style="left:743px;top:894.4px;width:9px;height:1px;background:#1f6a92;"></div>
<div style="left:743px;top:909.4px;width:9px;height:1px;background:#1f6a92;"></div>
<div style="left:743px;top:924.4px;width:9px;height:1px;background:#1f6a92;"></div>
<div style="left:743px;top:934.4px;width:9px;height:1px;background:#1f6a92;"></div>
<div style="left:743px;top:942.4px;width:9px;height:1px;background:#1f6a92;"></div>
<div class="t" style="left:719px;top:840px;font-size:8.5px;color:#d8d8d8;letter-spacing:-0.3px;width:20px;text-align:right;">10</div>
<div class="t" style="left:719px;top:849px;font-size:8.5px;color:#d8d8d8;letter-spacing:-0.3px;width:20px;text-align:right;">6</div>
<div class="t" style="left:719px;top:863.5px;font-size:8.5px;color:#d8d8d8;letter-spacing:-0.3px;width:20px;text-align:right;">0</div>
<div class="t" style="left:719px;top:879px;font-size:8.5px;color:#d8d8d8;letter-spacing:-0.3px;width:20px;text-align:right;">-6</div>
<div class="t" style="left:719px;top:890.5px;font-size:8.5px;color:#d8d8d8;letter-spacing:-0.3px;width:20px;text-align:right;">-12</div>
<div class="t" style="left:719px;top:905.5px;font-size:8.5px;color:#d8d8d8;letter-spacing:-0.3px;width:20px;text-align:right;">-24</div>
<div class="t" style="left:719px;top:920.5px;font-size:8.5px;color:#d8d8d8;letter-spacing:-0.3px;width:20px;text-align:right;">-36</div>
<div class="t" style="left:719px;top:930.5px;font-size:8.5px;color:#d8d8d8;letter-spacing:-0.3px;width:20px;text-align:right;">-48</div>
<div style="left:758px;top:904px;width:14px;height:46px;background:#6a6d72;"></div>
<div style="left:759px;top:918px;width:12px;height:1px;background:#85888d;"></div>
<div style="left:759px;top:928px;width:12px;height:1px;background:#85888d;"></div>
<div style="left:764.5px;top:845px;width:1.6px;height:88px;background:#151618;"></div>
<div style="left:759px;top:853px;width:12px;height:1px;background:#55585d;"></div>
<div style="left:759px;top:867px;width:12px;height:1px;background:#55585d;"></div>
<div style="left:756px;top:868px;width:18px;height:36px;background:linear-gradient(#f6f6f6,#d8d8d8 30%,#ffffff 50%,#e0e0e0 80%,#bdbdbd);border-radius:2px;box-shadow:0 1px 2px rgba(0,0,0,.7);border:1px solid #888;"></div>
<div style="left:757px;top:885px;width:16px;height:1px;background:#333;"></div>
<svg style="left:784px;top:931px" width="13" height="13" viewBox="0 0 13 13"><circle cx="6.5" cy="6.5" r="6.3" fill="#b4b6b8"/><path d="M6.5 6.5 L2.5 2.8" stroke="#3a3d42" stroke-width="2"/></svg>
<div class="t" style="left:737px;top:957px;font-size:13px;color:#e6e6e6;font-weight:bold;">12</div>
<svg style="left:781px;top:957px" width="17" height="10" viewBox="0 0 17 10"><path d="M0 0 H2.2 V6 H4.9 V0 H7.1 V6 H9.9 V0 H12.1 V6 H14.8 V0 H17 V10 H0Z" fill="#c8c8c8"/></svg>
<div style="left:730px;top:973px;width:71px;height:16px;background:#26282b;border-radius:2px;"></div>
<div class="t" style="left:730.5px;top:976px;font-size:10px;color:#8a8c90;width:55.5625px;left:737.71875px;transform:scaleX(0.684);transform-origin:50% 0;">オート: オフ</div>
<div style="left:725px;top:995px;width:81px;height:14px;background:#0a97d6;"></div>
<div class="t" style="left:725.0px;top:996px;font-size:12px;color:#f4f8fc;width:81px;text-align:center;">Strings</div>
<div style="left:808px;top:577px;width:81px;height:3px;background:#00e5c8;"></div>
<div style="left:808px;top:580px;width:81px;height:110px;background:#3a3d42;"></div>
<svg style="left:812px;top:584px" width="11" height="11" viewBox="0 0 11 11"><path d="M3 2.5 A4.5 4.5 0 1 0 8 2.5" stroke="#3aa0e8" stroke-width="1.7" fill="none"/><path d="M5.5 0 V5" stroke="#3aa0e8" stroke-width="1.7"/></svg>
<div class="t" style="left:826px;top:583px;font-size:12px;color:#cfd1d4;transform:scaleX(0.633);transform-origin:0 0;">インサート</div>
<svg style="left:863px;top:587px" width="8" height="5" viewBox="0 0 8 5"><path d="M0 0 H8 L4.0 5Z" fill="#999"/></svg>
<svg style="left:875px;top:585px" width="10" height="10" viewBox="0 0 10 10"><path d="M5 0.5 V9.5 M0.5 5 H9.5" stroke="#8a8c90" stroke-width="1.8"/></svg>
<div style="left:808px;top:601px;width:81px;height:20px;background:#4a4d52;"></div>
<svg style="left:812px;top:606px" width="11" height="11" viewBox="0 0 11 11"><path d="M3 2.5 A4.5 4.5 0 1 0 8 2.5" stroke="#5ab0ee" stroke-width="1.7" fill="none"/><path d="M5.5 0 V5" stroke="#5ab0ee" stroke-width="1.7"/></svg>
<div class="t" style="left:825px;top:606px;font-size:11px;color:#d4d6d8;transform:scaleX(0.933);transform-origin:0 0;">MCompress..</div>
<svg style="left:875px;top:609px" width="8" height="5" viewBox="0 0 8 5"><path d="M0 0 H8 L4.0 5Z" fill="#6a6d72"/></svg>
<div style="left:808px;top:622px;width:81px;height:20px;background:#4a4d52;"></div>
<svg style="left:812px;top:627px" width="11" height="11" viewBox="0 0 11 11"><path d="M3 2.5 A4.5 4.5 0 1 0 8 2.5" stroke="#5ab0ee" stroke-width="1.7" fill="none"/><path d="M5.5 0 V5" stroke="#5ab0ee" stroke-width="1.7"/></svg>
<div class="t" style="left:825px;top:627px;font-size:11px;color:#d4d6d8;transform:scaleX(0.887);transform-origin:0 0;">Pro EQ</div>
<svg style="left:875px;top:630px" width="8" height="5" viewBox="0 0 8 5"><path d="M0 0 H8 L4.0 5Z" fill="#6a6d72"/></svg>
<div style="left:808px;top:690px;width:81px;height:6px;background:#1b1c1f;"></div>
<div style="left:808px;top:691px;width:81px;height:3px;background:#3a3d42;"></div>
<div style="left:808px;top:696px;width:81px;height:3px;background:#00e5c8;"></div>
<div style="left:808px;top:699px;width:81px;height:310px;background:#3a3d42;"></div>
<div style="left:813px;top:705px;width:71px;height:17px;background:#4b4e53;border-radius:3px 3px 0 0;"></div>
<div class="t" style="left:803.5px;top:708px;font-size:12px;color:#e8b84a;width:90px;text-align:center;">Presence 6</div>
<div style="left:813px;top:722px;width:71px;height:17px;background:#42454a;"></div>
<div class="t" style="left:808.5px;top:725px;font-size:12px;color:#e8b84a;width:36px;left:830.5px;transform:scaleX(0.722);transform-origin:50% 0;">メイン</div>
<div style="left:813px;top:739px;width:71px;height:17px;background:#26282b;"></div>
<svg style="left:831.0px;top:740px" width="17.5" height="16" viewBox="0 0 17.5 16"><path d="M0 0 L17.5 16 H0Z" fill="#1d5a88"/><path d="M0 0 L17.5 16 V0Z" fill="#1d4a6a"/></svg>
<div style="left:831.0px;top:740px;width:3px;height:16px;background:#2a8fe0;"></div>
<div style="left:813px;top:756px;width:71px;height:16px;background:#36393e;"></div>
<div style="left:848px;top:758px;width:1px;height:13px;background:#2c2e32;"></div>
<div class="t" style="left:810.0px;top:759px;font-size:12px;color:#e0e0e0;width:40px;text-align:center;">-8.8</div>
<div class="t" style="left:846.0px;top:759px;font-size:12px;color:#e0e0e0;width:40px;text-align:center;">L50</div>
<div style="left:814px;top:779px;width:69px;height:42px;background:#232427;border-radius:3px;"></div>
<div style="left:815px;top:780px;width:33px;height:19px;background:#3f4247;"></div>
<div style="left:849px;top:780px;width:33px;height:19px;background:#3f4247;"></div>
<div class="t" style="left:816.5px;top:783px;font-size:13px;color:#ddd;width:30px;text-align:center;">M</div>
<div class="t" style="left:850.5px;top:783px;font-size:13px;color:#ddd;width:30px;text-align:center;">S</div>
<div style="left:815px;top:800px;width:33px;height:20px;background:#3f4247;"></div>
<div style="left:849px;top:800px;width:33px;height:20px;background:#3f4247;"></div>
<svg style="left:826px;top:805px" width="10" height="10" viewBox="0 0 10 10"><circle cx="5" cy="5" r="4.6" fill="#c8c8c8"/></svg>
<svg style="left:860px;top:804px" width="10" height="11" viewBox="0 0 10 11"><path d="M5 1 A4.5 4.5 0 0 0 5 10Z" fill="#d0d0d0"/><path d="M6.5 1.5 A4.3 4.3 0 0 1 6.5 9.5" stroke="#d0d0d0" stroke-width="1.2" fill="none"/></svg>
<svg style="left:867px;top:829px" width="12" height="11" viewBox="0 0 12 11"><rect y="0" width="12" height="3" fill="#4ab0e8"/><rect y="4" width="12" height="3" fill="#55585d"/><rect y="8" width="12" height="3" fill="#4a4d52"/></svg>
<div style="left:824px;top:829px;width:13px;height:11px;background:#2e3034;"></div>
<div style="left:824px;top:840px;width:13px;height:110px;background:#1e1f22;"></div>
<div style="left:826px;top:843.5px;width:9px;height:1px;background:#1f6a92;"></div>
<div style="left:826px;top:853.3px;width:9px;height:1px;background:#1f6a92;"></div>
<div style="left:826px;top:867.4px;width:9px;height:1px;background:#ddd;"></div>
<div style="left:826px;top:882.4px;width:9px;height:1px;background:#1f6a92;"></div>
<div style="left:826px;top:894.4px;width:9px;height:1px;background:#1f6a92;"></div>
<div style="left:826px;top:909.4px;width:9px;height:1px;background:#1f6a92;"></div>
<div style="left:826px;top:924.4px;width:9px;height:1px;background:#1f6a92;"></div>
<div style="left:826px;top:934.4px;width:9px;height:1px;background:#1f6a92;"></div>
<div style="left:826px;top:942.4px;width:9px;height:1px;background:#1f6a92;"></div>
<div class="t" style="left:802px;top:840px;font-size:8.5px;color:#d8d8d8;letter-spacing:-0.3px;width:20px;text-align:right;">10</div>
<div class="t" style="left:802px;top:849px;font-size:8.5px;color:#d8d8d8;letter-spacing:-0.3px;width:20px;text-align:right;">6</div>
<div class="t" style="left:802px;top:863.5px;font-size:8.5px;color:#d8d8d8;letter-spacing:-0.3px;width:20px;text-align:right;">0</div>
<div class="t" style="left:802px;top:879px;font-size:8.5px;color:#d8d8d8;letter-spacing:-0.3px;width:20px;text-align:right;">-6</div>
<div class="t" style="left:802px;top:890.5px;font-size:8.5px;color:#d8d8d8;letter-spacing:-0.3px;width:20px;text-align:right;">-12</div>
<div class="t" style="left:802px;top:905.5px;font-size:8.5px;color:#d8d8d8;letter-spacing:-0.3px;width:20px;text-align:right;">-24</div>
<div class="t" style="left:802px;top:920.5px;font-size:8.5px;color:#d8d8d8;letter-spacing:-0.3px;width:20px;text-align:right;">-36</div>
<div class="t" style="left:802px;top:930.5px;font-size:8.5px;color:#d8d8d8;letter-spacing:-0.3px;width:20px;text-align:right;">-48</div>
<div style="left:841px;top:902px;width:14px;height:48px;background:#6a6d72;"></div>
<div style="left:842px;top:903px;width:12px;height:1px;background:#85888d;"></div>
<div style="left:842px;top:918px;width:12px;height:1px;background:#85888d;"></div>
<div style="left:842px;top:928px;width:12px;height:1px;background:#85888d;"></div>
<div style="left:847.5px;top:845px;width:1.6px;height:88px;background:#151618;"></div>
<div style="left:842px;top:853px;width:12px;height:1px;background:#55585d;"></div>
<div style="left:839px;top:866px;width:18px;height:36px;background:linear-gradient(#f6f6f6,#d8d8d8 30%,#ffffff 50%,#e0e0e0 80%,#bdbdbd);border-radius:2px;box-shadow:0 1px 2px rgba(0,0,0,.7);border:1px solid #888;"></div>
<div style="left:840px;top:883px;width:16px;height:1px;background:#333;"></div>
<svg style="left:867px;top:931px" width="13" height="13" viewBox="0 0 13 13"><circle cx="6.5" cy="6.5" r="6.3" fill="#b4b6b8"/><path d="M6.5 6.5 L2.5 2.8" stroke="#3a3d42" stroke-width="2"/></svg>
<div class="t" style="left:820px;top:957px;font-size:13px;color:#e6e6e6;font-weight:bold;">13</div>
<svg style="left:864px;top:957px" width="17" height="10" viewBox="0 0 17 10"><path d="M0 0 H2.2 V6 H4.9 V0 H7.1 V6 H9.9 V0 H12.1 V6 H14.8 V0 H17 V10 H0Z" fill="#c8c8c8"/></svg>
<div style="left:813px;top:973px;width:71px;height:16px;background:#26282b;border-radius:2px;"></div>
<div class="t" style="left:813.5px;top:976px;font-size:10px;color:#8a8c90;width:55.5625px;left:820.71875px;transform:scaleX(0.684);transform-origin:50% 0;">オート: オフ</div>
<div style="left:808px;top:995px;width:81px;height:14px;background:#00e5c8;"></div>
<div class="t" style="left:808.0px;top:996px;font-size:12px;color:#0a2020;width:81px;text-align:center;">Piano</div>
<div style="left:891px;top:577px;width:81px;height:3px;background:#00c2e8;"></div>
<div style="left:891px;top:580px;width:81px;height:110px;background:#3a3d42;"></div>
<svg style="left:895px;top:584px" width="11" height="11" viewBox="0 0 11 11"><path d="M3 2.5 A4.5 4.5 0 1 0 8 2.5" stroke="#3aa0e8" stroke-width="1.7" fill="none"/><path d="M5.5 0 V5" stroke="#3aa0e8" stroke-width="1.7"/></svg>
<div class="t" style="left:909px;top:583px;font-size:12px;color:#cfd1d4;transform:scaleX(0.633);transform-origin:0 0;">インサート</div>
<svg style="left:946px;top:587px" width="8" height="5" viewBox="0 0 8 5"><path d="M0 0 H8 L4.0 5Z" fill="#999"/></svg>
<svg style="left:958px;top:585px" width="10" height="10" viewBox="0 0 10 10"><path d="M5 0.5 V9.5 M0.5 5 H9.5" stroke="#8a8c90" stroke-width="1.8"/></svg>
<div style="left:891px;top:601px;width:81px;height:20px;background:#4a4d52;"></div>
<svg style="left:895px;top:606px" width="11" height="11" viewBox="0 0 11 11"><path d="M3 2.5 A4.5 4.5 0 1 0 8 2.5" stroke="#5ab0ee" stroke-width="1.7" fill="none"/><path d="M5.5 0 V5" stroke="#5ab0ee" stroke-width="1.7"/></svg>
<div class="t" style="left:908px;top:606px;font-size:11px;color:#d4d6d8;transform:scaleX(0.933);transform-origin:0 0;">MCompress..</div>
<svg style="left:958px;top:609px" width="8" height="5" viewBox="0 0 8 5"><path d="M0 0 H8 L4.0 5Z" fill="#6a6d72"/></svg>
<div style="left:891px;top:622px;width:81px;height:20px;background:#4a4d52;"></div>
<svg style="left:895px;top:627px" width="11" height="11" viewBox="0 0 11 11"><path d="M3 2.5 A4.5 4.5 0 1 0 8 2.5" stroke="#5ab0ee" stroke-width="1.7" fill="none"/><path d="M5.5 0 V5" stroke="#5ab0ee" stroke-width="1.7"/></svg>
<div class="t" style="left:908px;top:627px;font-size:11px;color:#d4d6d8;transform:scaleX(0.887);transform-origin:0 0;">Pro EQ</div>
<svg style="left:958px;top:630px" width="8" height="5" viewBox="0 0 8 5"><path d="M0 0 H8 L4.0 5Z" fill="#6a6d72"/></svg>
<div style="left:891px;top:690px;width:81px;height:6px;background:#1b1c1f;"></div>
<div style="left:891px;top:691px;width:81px;height:3px;background:#3a3d42;"></div>
<div style="left:891px;top:696px;width:81px;height:3px;background:#00c2e8;"></div>
<div style="left:891px;top:699px;width:81px;height:310px;background:#3a3d42;"></div>
<div style="left:896px;top:705px;width:71px;height:17px;background:#4b4e53;border-radius:3px 3px 0 0;"></div>
<div class="t" style="left:886.5px;top:708px;font-size:12px;color:#dcdcdc;width:90px;text-align:center;">入力 L</div>
<div style="left:896px;top:722px;width:71px;height:17px;background:#42454a;"></div>
<div class="t" style="left:891.5px;top:725px;font-size:12px;color:#dcdcdc;width:29.359375px;left:916.8203125px;transform:scaleX(1.124);transform-origin:50% 0;">Voice</div>
<div style="left:896px;top:739px;width:71px;height:17px;background:#26282b;"></div>
<div style="left:930.0px;top:740px;width:3px;height:16px;background:#2a8fe0;"></div>
<div style="left:896px;top:756px;width:71px;height:16px;background:#36393e;"></div>
<div style="left:931px;top:758px;width:1px;height:13px;background:#2c2e32;"></div>
<div class="t" style="left:893.0px;top:759px;font-size:12px;color:#e0e0e0;width:40px;text-align:center;">0dB</div>
<div class="t" style="left:929.0px;top:759px;font-size:12px;color:#e0e0e0;width:40px;text-align:center;">&lt;C&gt;</div>
<div style="left:897px;top:779px;width:69px;height:42px;background:#232427;border-radius:3px;"></div>
<div style="left:898px;top:780px;width:33px;height:19px;background:#3f4247;"></div>
<div style="left:932px;top:780px;width:33px;height:19px;background:#3f4247;"></div>
<div class="t" style="left:899.5px;top:783px;font-size:13px;color:#ddd;width:30px;text-align:center;">M</div>
<div class="t" style="left:933.5px;top:783px;font-size:13px;color:#ddd;width:30px;text-align:center;">S</div>
<div style="left:898px;top:800px;width:33px;height:20px;background:#3f4247;"></div>
<div style="left:932px;top:800px;width:33px;height:20px;background:#3f4247;"></div>
<svg style="left:909px;top:805px" width="10" height="10" viewBox="0 0 10 10"><circle cx="5" cy="5" r="4.6" fill="#c8c8c8"/></svg>
<svg style="left:943px;top:804px" width="10" height="11" viewBox="0 0 10 11"><path d="M5 1 A4.5 4.5 0 0 0 5 10Z" fill="#d0d0d0"/><path d="M6.5 1.5 A4.3 4.3 0 0 1 6.5 9.5" stroke="#d0d0d0" stroke-width="1.2" fill="none"/></svg>
<svg style="left:950px;top:829px" width="12" height="11" viewBox="0 0 12 11"><rect y="0" width="12" height="3" fill="#4ab0e8"/><rect y="4" width="12" height="3" fill="#55585d"/><rect y="8" width="12" height="3" fill="#4a4d52"/></svg>
<div style="left:907px;top:829px;width:13px;height:11px;background:#2e3034;"></div>
<div style="left:907px;top:840px;width:13px;height:110px;background:#1e1f22;"></div>
<div style="left:909px;top:843.5px;width:9px;height:1px;background:#1f6a92;"></div>
<div style="left:909px;top:853.3px;width:9px;height:1px;background:#1f6a92;"></div>
<div style="left:909px;top:867.4px;width:9px;height:1px;background:#ddd;"></div>
<div style="left:909px;top:882.4px;width:9px;height:1px;background:#1f6a92;"></div>
<div style="left:909px;top:894.4px;width:9px;height:1px;background:#1f6a92;"></div>
<div style="left:909px;top:909.4px;width:9px;height:1px;background:#1f6a92;"></div>
<div style="left:909px;top:924.4px;width:9px;height:1px;background:#1f6a92;"></div>
<div style="left:909px;top:934.4px;width:9px;height:1px;background:#1f6a92;"></div>
<div style="left:909px;top:942.4px;width:9px;height:1px;background:#1f6a92;"></div>
<div class="t" style="left:885px;top:840px;font-size:8.5px;color:#d8d8d8;letter-spacing:-0.3px;width:20px;text-align:right;">10</div>
<div class="t" style="left:885px;top:849px;font-size:8.5px;color:#d8d8d8;letter-spacing:-0.3px;width:20px;text-align:right;">6</div>
<div class="t" style="left:885px;top:863.5px;font-size:8.5px;color:#d8d8d8;letter-spacing:-0.3px;width:20px;text-align:right;">0</div>
<div class="t" style="left:885px;top:879px;font-size:8.5px;color:#d8d8d8;letter-spacing:-0.3px;width:20px;text-align:right;">-6</div>
<div class="t" style="left:885px;top:890.5px;font-size:8.5px;color:#d8d8d8;letter-spacing:-0.3px;width:20px;text-align:right;">-12</div>
<div class="t" style="left:885px;top:905.5px;font-size:8.5px;color:#d8d8d8;letter-spacing:-0.3px;width:20px;text-align:right;">-24</div>
<div class="t" style="left:885px;top:920.5px;font-size:8.5px;color:#d8d8d8;letter-spacing:-0.3px;width:20px;text-align:right;">-36</div>
<div class="t" style="left:885px;top:930.5px;font-size:8.5px;color:#d8d8d8;letter-spacing:-0.3px;width:20px;text-align:right;">-48</div>
<div style="left:924px;top:885px;width:14px;height:65px;background:#6a6d72;"></div>
<div style="left:925px;top:889px;width:12px;height:1px;background:#85888d;"></div>
<div style="left:925px;top:903px;width:12px;height:1px;background:#85888d;"></div>
<div style="left:925px;top:918px;width:12px;height:1px;background:#85888d;"></div>
<div style="left:925px;top:928px;width:12px;height:1px;background:#85888d;"></div>
<div style="left:930.5px;top:845px;width:1.6px;height:88px;background:#151618;"></div>
<div style="left:922px;top:849px;width:18px;height:36px;background:linear-gradient(#f6f6f6,#d8d8d8 30%,#ffffff 50%,#e0e0e0 80%,#bdbdbd);border-radius:2px;box-shadow:0 1px 2px rgba(0,0,0,.7);border:1px solid #888;"></div>
<div style="left:923px;top:866px;width:16px;height:1px;background:#333;"></div>
<svg style="left:950px;top:931px" width="13" height="13" viewBox="0 0 13 13"><circle cx="6.5" cy="6.5" r="6.3" fill="#b4b6b8"/><path d="M6.5 6.5 L2.5 2.8" stroke="#3a3d42" stroke-width="2"/></svg>
<div class="t" style="left:903px;top:957px;font-size:13px;color:#e6e6e6;font-weight:bold;">14</div>
<svg style="left:946px;top:955px" width="18" height="13" viewBox="0 0 18 13"><path d="M0 9 H3 L5 4 L7 12 L9 1 L11 12 L13 3 L15 10 L17 7 H18" stroke="#c8c8c8" stroke-width="1.6" fill="none"/></svg>
<div style="left:896px;top:973px;width:71px;height:16px;background:#26282b;border-radius:2px;"></div>
<div class="t" style="left:896.5px;top:976px;font-size:10px;color:#8a8c90;width:55.5625px;left:903.71875px;transform:scaleX(0.684);transform-origin:50% 0;">オート: オフ</div>
<div style="left:891px;top:995px;width:81px;height:14px;background:#00c2e8;"></div>
<div class="t" style="left:891.0px;top:996px;font-size:12px;color:#0a1a20;width:81px;text-align:center;">Vocal</div>
<div style="left:974px;top:577px;width:81px;height:3px;background:#00e5c8;"></div>
<div style="left:974px;top:580px;width:81px;height:110px;background:#3a3d42;"></div>
<svg style="left:978px;top:584px" width="11" height="11" viewBox="0 0 11 11"><path d="M3 2.5 A4.5 4.5 0 1 0 8 2.5" stroke="#3aa0e8" stroke-width="1.7" fill="none"/><path d="M5.5 0 V5" stroke="#3aa0e8" stroke-width="1.7"/></svg>
<div class="t" style="left:992px;top:583px;font-size:12px;color:#cfd1d4;transform:scaleX(0.633);transform-origin:0 0;">インサート</div>
<svg style="left:1029px;top:587px" width="8" height="5" viewBox="0 0 8 5"><path d="M0 0 H8 L4.0 5Z" fill="#999"/></svg>
<svg style="left:1041px;top:585px" width="10" height="10" viewBox="0 0 10 10"><path d="M5 0.5 V9.5 M0.5 5 H9.5" stroke="#8a8c90" stroke-width="1.8"/></svg>
<div style="left:974px;top:601px;width:81px;height:20px;background:#4a4d52;"></div>
<svg style="left:978px;top:606px" width="11" height="11" viewBox="0 0 11 11"><path d="M3 2.5 A4.5 4.5 0 1 0 8 2.5" stroke="#5ab0ee" stroke-width="1.7" fill="none"/><path d="M5.5 0 V5" stroke="#5ab0ee" stroke-width="1.7"/></svg>
<div class="t" style="left:991px;top:606px;font-size:11px;color:#d4d6d8;transform:scaleX(0.933);transform-origin:0 0;">MCompress..</div>
<svg style="left:1041px;top:609px" width="8" height="5" viewBox="0 0 8 5"><path d="M0 0 H8 L4.0 5Z" fill="#6a6d72"/></svg>
<div style="left:974px;top:622px;width:81px;height:20px;background:#4a4d52;"></div>
<svg style="left:978px;top:627px" width="11" height="11" viewBox="0 0 11 11"><path d="M3 2.5 A4.5 4.5 0 1 0 8 2.5" stroke="#5ab0ee" stroke-width="1.7" fill="none"/><path d="M5.5 0 V5" stroke="#5ab0ee" stroke-width="1.7"/></svg>
<div class="t" style="left:991px;top:627px;font-size:11px;color:#d4d6d8;transform:scaleX(0.887);transform-origin:0 0;">Pro EQ</div>
<svg style="left:1041px;top:630px" width="8" height="5" viewBox="0 0 8 5"><path d="M0 0 H8 L4.0 5Z" fill="#6a6d72"/></svg>
<div style="left:974px;top:690px;width:81px;height:6px;background:#1b1c1f;"></div>
<div style="left:974px;top:691px;width:81px;height:3px;background:#3a3d42;"></div>
<div style="left:974px;top:696px;width:81px;height:3px;background:#00e5c8;"></div>
<div style="left:974px;top:699px;width:81px;height:310px;background:#3a3d42;"></div>
<div style="left:979px;top:705px;width:71px;height:17px;background:#4b4e53;border-radius:3px 3px 0 0;"></div>
<div class="t" style="left:969.5px;top:708px;font-size:12px;color:#dcdcdc;width:90px;text-align:center;">入力 L</div>
<div style="left:979px;top:722px;width:71px;height:17px;background:#42454a;"></div>
<div class="t" style="left:974.5px;top:725px;font-size:12px;color:#dcdcdc;width:29.359375px;left:999.8203125px;transform:scaleX(1.124);transform-origin:50% 0;">Voice</div>
<div style="left:979px;top:739px;width:71px;height:17px;background:#26282b;"></div>
<svg style="left:979.5px;top:740px" width="35.0" height="16" viewBox="0 0 35.0 16"><path d="M0 0 L35.0 16 H0Z" fill="#1d5a88"/><path d="M0 0 L35.0 16 V0Z" fill="#1d4a6a"/></svg>
<div style="left:979.5px;top:740px;width:3px;height:16px;background:#2a8fe0;"></div>
<div style="left:979px;top:756px;width:71px;height:16px;background:#36393e;"></div>
<div style="left:1014px;top:758px;width:1px;height:13px;background:#2c2e32;"></div>
<div class="t" style="left:976.0px;top:759px;font-size:12px;color:#e0e0e0;width:40px;text-align:center;">-13.3</div>
<div class="t" style="left:1012.0px;top:759px;font-size:12px;color:#e0e0e0;width:40px;text-align:center;">&lt;L&gt;</div>
<div style="left:980px;top:779px;width:69px;height:42px;background:#232427;border-radius:3px;"></div>
<div style="left:981px;top:780px;width:33px;height:19px;background:#3f4247;"></div>
<div style="left:1015px;top:780px;width:33px;height:19px;background:#3f4247;"></div>
<div class="t" style="left:982.5px;top:783px;font-size:13px;color:#ddd;width:30px;text-align:center;">M</div>
<div class="t" style="left:1016.5px;top:783px;font-size:13px;color:#ddd;width:30px;text-align:center;">S</div>
<div style="left:981px;top:800px;width:33px;height:20px;background:#3f4247;"></div>
<div style="left:1015px;top:800px;width:33px;height:20px;background:#3f4247;"></div>
<svg style="left:992px;top:805px" width="10" height="10" viewBox="0 0 10 10"><circle cx="5" cy="5" r="4.6" fill="#c8c8c8"/></svg>
<svg style="left:1026px;top:804px" width="10" height="11" viewBox="0 0 10 11"><path d="M5 1 A4.5 4.5 0 0 0 5 10Z" fill="#d0d0d0"/><path d="M6.5 1.5 A4.3 4.3 0 0 1 6.5 9.5" stroke="#d0d0d0" stroke-width="1.2" fill="none"/></svg>
<svg style="left:1033px;top:829px" width="12" height="11" viewBox="0 0 12 11"><rect y="0" width="12" height="3" fill="#4ab0e8"/><rect y="4" width="12" height="3" fill="#55585d"/><rect y="8" width="12" height="3" fill="#4a4d52"/></svg>
<div style="left:990px;top:829px;width:13px;height:11px;background:#2e3034;"></div>
<div style="left:990px;top:840px;width:13px;height:110px;background:#1e1f22;"></div>
<div style="left:992px;top:843.5px;width:9px;height:1px;background:#1f6a92;"></div>
<div style="left:992px;top:853.3px;width:9px;height:1px;background:#1f6a92;"></div>
<div style="left:992px;top:867.4px;width:9px;height:1px;background:#ddd;"></div>
<div style="left:992px;top:882.4px;width:9px;height:1px;background:#1f6a92;"></div>
<div style="left:992px;top:894.4px;width:9px;height:1px;background:#1f6a92;"></div>
<div style="left:992px;top:909.4px;width:9px;height:1px;background:#1f6a92;"></div>
<div style="left:992px;top:924.4px;width:9px;height:1px;background:#1f6a92;"></div>
<div style="left:992px;top:934.4px;width:9px;height:1px;background:#1f6a92;"></div>
<div style="left:992px;top:942.4px;width:9px;height:1px;background:#1f6a92;"></div>
<div class="t" style="left:968px;top:840px;font-size:8.5px;color:#d8d8d8;letter-spacing:-0.3px;width:20px;text-align:right;">10</div>
<div class="t" style="left:968px;top:849px;font-size:8.5px;color:#d8d8d8;letter-spacing:-0.3px;width:20px;text-align:right;">6</div>
<div class="t" style="left:968px;top:863.5px;font-size:8.5px;color:#d8d8d8;letter-spacing:-0.3px;width:20px;text-align:right;">0</div>
<div class="t" style="left:968px;top:879px;font-size:8.5px;color:#d8d8d8;letter-spacing:-0.3px;width:20px;text-align:right;">-6</div>
<div class="t" style="left:968px;top:890.5px;font-size:8.5px;color:#d8d8d8;letter-spacing:-0.3px;width:20px;text-align:right;">-12</div>
<div class="t" style="left:968px;top:905.5px;font-size:8.5px;color:#d8d8d8;letter-spacing:-0.3px;width:20px;text-align:right;">-24</div>
<div class="t" style="left:968px;top:920.5px;font-size:8.5px;color:#d8d8d8;letter-spacing:-0.3px;width:20px;text-align:right;">-36</div>
<div class="t" style="left:968px;top:930.5px;font-size:8.5px;color:#d8d8d8;letter-spacing:-0.3px;width:20px;text-align:right;">-48</div>
<div style="left:1007px;top:908px;width:14px;height:42px;background:#6a6d72;"></div>
<div style="left:1008px;top:918px;width:12px;height:1px;background:#85888d;"></div>
<div style="left:1008px;top:928px;width:12px;height:1px;background:#85888d;"></div>
<div style="left:1013.5px;top:845px;width:1.6px;height:88px;background:#151618;"></div>
<div style="left:1008px;top:853px;width:12px;height:1px;background:#55585d;"></div>
<div style="left:1008px;top:867px;width:12px;height:1px;background:#55585d;"></div>
<div style="left:1005px;top:872px;width:18px;height:36px;background:linear-gradient(#f6f6f6,#d8d8d8 30%,#ffffff 50%,#e0e0e0 80%,#bdbdbd);border-radius:2px;box-shadow:0 1px 2px rgba(0,0,0,.7);border:1px solid #888;"></div>
<div style="left:1006px;top:889px;width:16px;height:1px;background:#333;"></div>
<svg style="left:1033px;top:931px" width="13" height="13" viewBox="0 0 13 13"><circle cx="6.5" cy="6.5" r="6.3" fill="#b4b6b8"/><path d="M6.5 6.5 L2.5 2.8" stroke="#3a3d42" stroke-width="2"/></svg>
<div class="t" style="left:986px;top:957px;font-size:13px;color:#e6e6e6;font-weight:bold;">15</div>
<svg style="left:1029px;top:955px" width="18" height="13" viewBox="0 0 18 13"><path d="M0 9 H3 L5 4 L7 12 L9 1 L11 12 L13 3 L15 10 L17 7 H18" stroke="#c8c8c8" stroke-width="1.6" fill="none"/></svg>
<div style="left:979px;top:973px;width:71px;height:16px;background:#26282b;border-radius:2px;"></div>
<div class="t" style="left:979.5px;top:976px;font-size:10px;color:#8a8c90;width:55.5625px;left:986.71875px;transform:scaleX(0.684);transform-origin:50% 0;">オート: オフ</div>
<div style="left:974px;top:995px;width:81px;height:14px;background:#00e5c8;"></div>
<div class="t" style="left:974.0px;top:996px;font-size:12px;color:#0a2020;width:81px;text-align:center;">ChoLo</div>
<div style="left:1057px;top:577px;width:81px;height:3px;background:#00ffff;"></div>
<div style="left:1057px;top:580px;width:81px;height:110px;background:#3a3d42;"></div>
<svg style="left:1061px;top:584px" width="11" height="11" viewBox="0 0 11 11"><path d="M3 2.5 A4.5 4.5 0 1 0 8 2.5" stroke="#3aa0e8" stroke-width="1.7" fill="none"/><path d="M5.5 0 V5" stroke="#3aa0e8" stroke-width="1.7"/></svg>
<div class="t" style="left:1075px;top:583px;font-size:12px;color:#cfd1d4;transform:scaleX(0.633);transform-origin:0 0;">インサート</div>
<svg style="left:1112px;top:587px" width="8" height="5" viewBox="0 0 8 5"><path d="M0 0 H8 L4.0 5Z" fill="#999"/></svg>
<svg style="left:1124px;top:585px" width="10" height="10" viewBox="0 0 10 10"><path d="M5 0.5 V9.5 M0.5 5 H9.5" stroke="#8a8c90" stroke-width="1.8"/></svg>
<div style="left:1057px;top:601px;width:81px;height:20px;background:#4a4d52;"></div>
<svg style="left:1061px;top:606px" width="11" height="11" viewBox="0 0 11 11"><path d="M3 2.5 A4.5 4.5 0 1 0 8 2.5" stroke="#5ab0ee" stroke-width="1.7" fill="none"/><path d="M5.5 0 V5" stroke="#5ab0ee" stroke-width="1.7"/></svg>
<div class="t" style="left:1074px;top:606px;font-size:11px;color:#d4d6d8;transform:scaleX(0.933);transform-origin:0 0;">MCompress..</div>
<svg style="left:1124px;top:609px" width="8" height="5" viewBox="0 0 8 5"><path d="M0 0 H8 L4.0 5Z" fill="#6a6d72"/></svg>
<div style="left:1057px;top:622px;width:81px;height:20px;background:#4a4d52;"></div>
<svg style="left:1061px;top:627px" width="11" height="11" viewBox="0 0 11 11"><path d="M3 2.5 A4.5 4.5 0 1 0 8 2.5" stroke="#5ab0ee" stroke-width="1.7" fill="none"/><path d="M5.5 0 V5" stroke="#5ab0ee" stroke-width="1.7"/></svg>
<div class="t" style="left:1074px;top:627px;font-size:11px;color:#d4d6d8;transform:scaleX(0.887);transform-origin:0 0;">Pro EQ</div>
<svg style="left:1124px;top:630px" width="8" height="5" viewBox="0 0 8 5"><path d="M0 0 H8 L4.0 5Z" fill="#6a6d72"/></svg>
<div style="left:1057px;top:690px;width:81px;height:6px;background:#1b1c1f;"></div>
<div style="left:1057px;top:691px;width:81px;height:3px;background:#3a3d42;"></div>
<div style="left:1057px;top:696px;width:81px;height:3px;background:#00ffff;"></div>
<div style="left:1057px;top:699px;width:81px;height:310px;background:#3a3d42;"></div>
<div style="left:1062px;top:705px;width:71px;height:17px;background:#4b4e53;border-radius:3px 3px 0 0;"></div>
<div class="t" style="left:1052.5px;top:708px;font-size:12px;color:#dcdcdc;width:90px;text-align:center;">入力 L</div>
<div style="left:1062px;top:722px;width:71px;height:17px;background:#42454a;"></div>
<div class="t" style="left:1057.5px;top:725px;font-size:12px;color:#dcdcdc;width:29.359375px;left:1082.8203125px;transform:scaleX(1.124);transform-origin:50% 0;">Voice</div>
<div style="left:1062px;top:739px;width:71px;height:17px;background:#26282b;"></div>
<svg style="left:1097.5px;top:740px" width="35.0" height="16" viewBox="0 0 35.0 16"><path d="M35.0 0 L0 16 H35.0Z" fill="#1d5a88"/><path d="M35.0 0 L0 16 V0Z" fill="#1d4a6a"/></svg>
<div style="left:1129.5px;top:740px;width:3px;height:16px;background:#2a8fe0;"></div>
<div style="left:1062px;top:756px;width:71px;height:16px;background:#36393e;"></div>
<div style="left:1097px;top:758px;width:1px;height:13px;background:#2c2e32;"></div>
<div class="t" style="left:1059.0px;top:759px;font-size:12px;color:#e0e0e0;width:40px;text-align:center;">-13.3</div>
<div class="t" style="left:1095.0px;top:759px;font-size:12px;color:#e0e0e0;width:40px;text-align:center;">&lt;R&gt;</div>
<div style="left:1063px;top:779px;width:69px;height:42px;background:#232427;border-radius:3px;"></div>
<div style="left:1064px;top:780px;width:33px;height:19px;background:#3f4247;"></div>
<div style="left:1098px;top:780px;width:33px;height:19px;background:#3f4247;"></div>
<div class="t" style="left:1065.5px;top:783px;font-size:13px;color:#ddd;width:30px;text-align:center;">M</div>
<div class="t" style="left:1099.5px;top:783px;font-size:13px;color:#ddd;width:30px;text-align:center;">S</div>
<div style="left:1064px;top:800px;width:33px;height:20px;background:#3f4247;"></div>
<div style="left:1098px;top:800px;width:33px;height:20px;background:#3f4247;"></div>
<svg style="left:1075px;top:805px" width="10" height="10" viewBox="0 0 10 10"><circle cx="5" cy="5" r="4.6" fill="#c8c8c8"/></svg>
<svg style="left:1109px;top:804px" width="10" height="11" viewBox="0 0 10 11"><path d="M5 1 A4.5 4.5 0 0 0 5 10Z" fill="#d0d0d0"/><path d="M6.5 1.5 A4.3 4.3 0 0 1 6.5 9.5" stroke="#d0d0d0" stroke-width="1.2" fill="none"/></svg>
<svg style="left:1116px;top:829px" width="12" height="11" viewBox="0 0 12 11"><rect y="0" width="12" height="3" fill="#4ab0e8"/><rect y="4" width="12" height="3" fill="#55585d"/><rect y="8" width="12" height="3" fill="#4a4d52"/></svg>
<div style="left:1073px;top:829px;width:13px;height:11px;background:#2e3034;"></div>
<div style="left:1073px;top:840px;width:13px;height:110px;background:#1e1f22;"></div>
<div style="left:1075px;top:843.5px;width:9px;height:1px;background:#1f6a92;"></div>
<div style="left:1075px;top:853.3px;width:9px;height:1px;background:#1f6a92;"></div>
<div style="left:1075px;top:867.4px;width:9px;height:1px;background:#ddd;"></div>
<div style="left:1075px;top:882.4px;width:9px;height:1px;background:#1f6a92;"></div>
<div style="left:1075px;top:894.4px;width:9px;height:1px;background:#1f6a92;"></div>
<div style="left:1075px;top:909.4px;width:9px;height:1px;background:#1f6a92;"></div>
<div style="left:1075px;top:924.4px;width:9px;height:1px;background:#1f6a92;"></div>
<div style="left:1075px;top:934.4px;width:9px;height:1px;background:#1f6a92;"></div>
<div style="left:1075px;top:942.4px;width:9px;height:1px;background:#1f6a92;"></div>
<div class="t" style="left:1051px;top:840px;font-size:8.5px;color:#d8d8d8;letter-spacing:-0.3px;width:20px;text-align:right;">10</div>
<div class="t" style="left:1051px;top:849px;font-size:8.5px;color:#d8d8d8;letter-spacing:-0.3px;width:20px;text-align:right;">6</div>
<div class="t" style="left:1051px;top:863.5px;font-size:8.5px;color:#d8d8d8;letter-spacing:-0.3px;width:20px;text-align:right;">0</div>
<div class="t" style="left:1051px;top:879px;font-size:8.5px;color:#d8d8d8;letter-spacing:-0.3px;width:20px;text-align:right;">-6</div>
<div class="t" style="left:1051px;top:890.5px;font-size:8.5px;color:#d8d8d8;letter-spacing:-0.3px;width:20px;text-align:right;">-12</div>
<div class="t" style="left:1051px;top:905.5px;font-size:8.5px;color:#d8d8d8;letter-spacing:-0.3px;width:20px;text-align:right;">-24</div>
<div class="t" style="left:1051px;top:920.5px;font-size:8.5px;color:#d8d8d8;letter-spacing:-0.3px;width:20px;text-align:right;">-36</div>
<div class="t" style="left:1051px;top:930.5px;font-size:8.5px;color:#d8d8d8;letter-spacing:-0.3px;width:20px;text-align:right;">-48</div>
<div style="left:1090px;top:908px;width:14px;height:42px;background:#6a6d72;"></div>
<div style="left:1091px;top:918px;width:12px;height:1px;background:#85888d;"></div>
<div style="left:1091px;top:928px;width:12px;height:1px;background:#85888d;"></div>
<div style="left:1096.5px;top:845px;width:1.6px;height:88px;background:#151618;"></div>
<div style="left:1091px;top:853px;width:12px;height:1px;background:#55585d;"></div>
<div style="left:1091px;top:867px;width:12px;height:1px;background:#55585d;"></div>
<div style="left:1088px;top:872px;width:18px;height:36px;background:linear-gradient(#f6f6f6,#d8d8d8 30%,#ffffff 50%,#e0e0e0 80%,#bdbdbd);border-radius:2px;box-shadow:0 1px 2px rgba(0,0,0,.7);border:1px solid #888;"></div>
<div style="left:1089px;top:889px;width:16px;height:1px;background:#333;"></div>
<svg style="left:1116px;top:931px" width="13" height="13" viewBox="0 0 13 13"><circle cx="6.5" cy="6.5" r="6.3" fill="#b4b6b8"/><path d="M6.5 6.5 L2.5 2.8" stroke="#3a3d42" stroke-width="2"/></svg>
<div class="t" style="left:1069px;top:957px;font-size:13px;color:#e6e6e6;font-weight:bold;">16</div>
<svg style="left:1112px;top:955px" width="18" height="13" viewBox="0 0 18 13"><path d="M0 9 H3 L5 4 L7 12 L9 1 L11 12 L13 3 L15 10 L17 7 H18" stroke="#c8c8c8" stroke-width="1.6" fill="none"/></svg>
<div style="left:1062px;top:973px;width:71px;height:16px;background:#26282b;border-radius:2px;"></div>
<div class="t" style="left:1062.5px;top:976px;font-size:10px;color:#8a8c90;width:55.5625px;left:1069.71875px;transform:scaleX(0.684);transform-origin:50% 0;">オート: オフ</div>
<div style="left:1057px;top:995px;width:81px;height:14px;background:#00ffff;"></div>
<div class="t" style="left:1057.0px;top:996px;font-size:12px;color:#0a2020;width:81px;text-align:center;">ChoHi</div>
<div style="left:1140px;top:580px;width:81px;height:110px;background:#2b2d31;"></div>
<svg style="left:1144px;top:584px" width="11" height="11" viewBox="0 0 11 11"><path d="M3 2.5 A4.5 4.5 0 1 0 8 2.5" stroke="#3aa0e8" stroke-width="1.7" fill="none"/><path d="M5.5 0 V5" stroke="#3aa0e8" stroke-width="1.7"/></svg>
<div class="t" style="left:1158px;top:583px;font-size:12px;color:#cfd1d4;transform:scaleX(0.633);transform-origin:0 0;">インサート</div>
<svg style="left:1195px;top:587px" width="8" height="5" viewBox="0 0 8 5"><path d="M0 0 H8 L4.0 5Z" fill="#999"/></svg>
<svg style="left:1207px;top:585px" width="10" height="10" viewBox="0 0 10 10"><path d="M5 0.5 V9.5 M0.5 5 H9.5" stroke="#8a8c90" stroke-width="1.8"/></svg>
<div style="left:1140px;top:601px;width:81px;height:20px;background:#4a4d52;"></div>
<svg style="left:1144px;top:606px" width="11" height="11" viewBox="0 0 11 11"><path d="M3 2.5 A4.5 4.5 0 1 0 8 2.5" stroke="#5ab0ee" stroke-width="1.7" fill="none"/><path d="M5.5 0 V5" stroke="#5ab0ee" stroke-width="1.7"/></svg>
<div class="t" style="left:1157px;top:606px;font-size:11px;color:#d4d6d8;transform:scaleX(0.883);transform-origin:0 0;">Mixverb</div>
<svg style="left:1207px;top:609px" width="8" height="5" viewBox="0 0 8 5"><path d="M0 0 H8 L4.0 5Z" fill="#6a6d72"/></svg>
<div style="left:1140px;top:690px;width:81px;height:6px;background:#1b1c1f;"></div>
<div style="left:1140px;top:691px;width:81px;height:3px;background:#2b2d31;"></div>
<div style="left:1140px;top:699px;width:81px;height:310px;background:#2f3135;"></div>
<div style="left:1145px;top:705px;width:71px;height:17px;background:#4b4e53;border-radius:3px 3px 0 0;"></div>
<svg style="left:1147px;top:711px" width="67" height="6" viewBox="0 0 67 6"><rect x="0.0" y="0" width="1.4" height="6" fill="#3aa0e8"/><rect x="3.1" y="0" width="1.4" height="6" fill="#3aa0e8"/><rect x="6.2" y="0" width="1.4" height="6" fill="#3aa0e8"/><rect x="9.3" y="0" width="1.4" height="6" fill="#7a7d82"/><rect x="12.4" y="0" width="1.4" height="6" fill="#7a7d82"/><rect x="15.5" y="0" width="1.4" height="6" fill="#7a7d82"/><rect x="18.6" y="0" width="1.4" height="6" fill="#7a7d82"/><rect x="21.7" y="0" width="1.4" height="6" fill="#7a7d82"/><rect x="24.8" y="0" width="1.4" height="6" fill="#7a7d82"/><rect x="27.9" y="0" width="1.4" height="6" fill="#7a7d82"/><rect x="31.0" y="0" width="1.4" height="6" fill="#7a7d82"/><rect x="34.1" y="0" width="1.4" height="6" fill="#7a7d82"/><rect x="37.2" y="0" width="1.4" height="6" fill="#7a7d82"/><rect x="40.3" y="0" width="1.4" height="6" fill="#7a7d82"/><rect x="43.4" y="0" width="1.4" height="6" fill="#7a7d82"/><rect x="46.5" y="0" width="1.4" height="6" fill="#7a7d82"/><rect x="49.6" y="0" width="1.4" height="6" fill="#7a7d82"/><rect x="52.7" y="0" width="1.4" height="6" fill="#7a7d82"/><rect x="55.8" y="0" width="1.4" height="6" fill="#7a7d82"/><rect x="58.9" y="0" width="1.4" height="6" fill="#7a7d82"/><rect x="62.0" y="0" width="1.4" height="6" fill="#7a7d82"/><rect x="65.1" y="0" width="1.4" height="6" fill="#7a7d82"/></svg>
<div style="left:1145px;top:722px;width:71px;height:17px;background:#42454a;"></div>
<div class="t" style="left:1140.5px;top:725px;font-size:12px;color:#3a9ee8;width:36px;left:1162.5px;transform:scaleX(0.722);transform-origin:50% 0;">メイン</div>
<div style="left:1145px;top:739px;width:71px;height:17px;background:#26282b;"></div>
<div style="left:1179.0px;top:740px;width:3px;height:16px;background:#2a8fe0;"></div>
<div style="left:1145px;top:756px;width:71px;height:16px;background:#36393e;"></div>
<div style="left:1180px;top:758px;width:1px;height:13px;background:#2c2e32;"></div>
<div class="t" style="left:1142.0px;top:759px;font-size:12px;color:#e0e0e0;width:40px;text-align:center;">-4.6</div>
<div class="t" style="left:1178.0px;top:759px;font-size:12px;color:#e0e0e0;width:40px;text-align:center;">&lt;C&gt;</div>
<div style="left:1146px;top:780px;width:69px;height:21px;background:#232427;border-radius:3px;"></div>
<div style="left:1147px;top:781px;width:33px;height:19px;background:#3f4247;"></div>
<div style="left:1181px;top:781px;width:33px;height:19px;background:#22a84a;"></div>
<div class="t" style="left:1148.5px;top:784px;font-size:13px;color:#ddd;width:30px;text-align:center;">M</div>
<div class="t" style="left:1182.5px;top:784px;font-size:13px;color:#f0f0f0;width:30px;text-align:center;">S</div>
<svg style="left:1199px;top:829px" width="12" height="11" viewBox="0 0 12 11"><rect y="0" width="12" height="3" fill="#4ab0e8"/><rect y="4" width="12" height="3" fill="#55585d"/><rect y="8" width="12" height="3" fill="#4a4d52"/></svg>
<div style="left:1156px;top:829px;width:13px;height:11px;background:#2e3034;"></div>
<div style="left:1156px;top:840px;width:13px;height:110px;background:#1e1f22;"></div>
<div style="left:1158px;top:843.5px;width:9px;height:1px;background:#1f6a92;"></div>
<div style="left:1158px;top:853.3px;width:9px;height:1px;background:#1f6a92;"></div>
<div style="left:1158px;top:867.4px;width:9px;height:1px;background:#ddd;"></div>
<div style="left:1158px;top:882.4px;width:9px;height:1px;background:#1f6a92;"></div>
<div style="left:1158px;top:894.4px;width:9px;height:1px;background:#1f6a92;"></div>
<div style="left:1158px;top:909.4px;width:9px;height:1px;background:#1f6a92;"></div>
<div style="left:1158px;top:924.4px;width:9px;height:1px;background:#1f6a92;"></div>
<div style="left:1158px;top:934.4px;width:9px;height:1px;background:#1f6a92;"></div>
<div style="left:1158px;top:942.4px;width:9px;height:1px;background:#1f6a92;"></div>
<div class="t" style="left:1134px;top:840px;font-size:8.5px;color:#d8d8d8;letter-spacing:-0.3px;width:20px;text-align:right;">10</div>
<div class="t" style="left:1134px;top:849px;font-size:8.5px;color:#d8d8d8;letter-spacing:-0.3px;width:20px;text-align:right;">6</div>
<div class="t" style="left:1134px;top:863.5px;font-size:8.5px;color:#d8d8d8;letter-spacing:-0.3px;width:20px;text-align:right;">0</div>
<div class="t" style="left:1134px;top:879px;font-size:8.5px;color:#d8d8d8;letter-spacing:-0.3px;width:20px;text-align:right;">-6</div>
<div class="t" style="left:1134px;top:890.5px;font-size:8.5px;color:#d8d8d8;letter-spacing:-0.3px;width:20px;text-align:right;">-12</div>
<div class="t" style="left:1134px;top:905.5px;font-size:8.5px;color:#d8d8d8;letter-spacing:-0.3px;width:20px;text-align:right;">-24</div>
<div class="t" style="left:1134px;top:920.5px;font-size:8.5px;color:#d8d8d8;letter-spacing:-0.3px;width:20px;text-align:right;">-36</div>
<div class="t" style="left:1134px;top:930.5px;font-size:8.5px;color:#d8d8d8;letter-spacing:-0.3px;width:20px;text-align:right;">-48</div>
<div style="left:1173px;top:894px;width:14px;height:56px;background:#6a6d72;"></div>
<div style="left:1174px;top:903px;width:12px;height:1px;background:#85888d;"></div>
<div style="left:1174px;top:918px;width:12px;height:1px;background:#85888d;"></div>
<div style="left:1174px;top:928px;width:12px;height:1px;background:#85888d;"></div>
<div style="left:1179.5px;top:845px;width:1.6px;height:88px;background:#151618;"></div>
<div style="left:1174px;top:853px;width:12px;height:1px;background:#55585d;"></div>
<div style="left:1171px;top:858px;width:18px;height:36px;background:linear-gradient(#5ab8e0,#2a8ab8 30%,#4aa8d4 50%,#2a88b8 80%,#1a6a98);border-radius:2px;box-shadow:0 1px 2px rgba(0,0,0,.7);border:1px solid #1a5a80;"></div>
<div style="left:1172px;top:875px;width:16px;height:1px;background:#1a4a68;"></div>
<svg style="left:1199px;top:931px" width="13" height="13" viewBox="0 0 13 13"><circle cx="6.5" cy="6.5" r="6.3" fill="#b4b6b8"/><path d="M6.5 6.5 L2.5 2.8" stroke="#3a3d42" stroke-width="2"/></svg>
<div class="t" style="left:1152px;top:957px;font-size:13px;color:#e6e6e6;font-weight:bold;">17</div>
<div class="t" style="left:1194px;top:956px;font-size:14px;color:#c8c8c8;font-weight:bold;">FX</div>
<div style="left:1145px;top:973px;width:71px;height:16px;background:#26282b;border-radius:2px;"></div>
<div class="t" style="left:1145.5px;top:976px;font-size:10px;color:#8a8c90;width:55.5625px;left:1152.71875px;transform:scaleX(0.684);transform-origin:50% 0;">オート: オフ</div>
<div style="left:1140px;top:995px;width:81px;height:14px;background:#26282b;"></div>
<div class="t" style="left:1140.0px;top:996px;font-size:12px;color:#f0f0f0;width:81px;text-align:center;">Reverb</div>
<div style="left:1223px;top:580px;width:81px;height:110px;background:#2b2d31;"></div>
<div style="left:1223px;top:580px;width:81px;height:20px;background:#1d2b36;"></div>
<div class="t" style="left:1226.0px;top:584px;font-size:12px;color:#ccc;width:58.671875px;left:1231.6640625px;transform:scaleX(0.579);transform-origin:50% 0;">ミックスF:</div>
<svg style="left:1289px;top:587px" width="9" height="6" viewBox="0 0 9 6"><path d="M0 0 H9 L4.5 6Z" fill="#aaa"/></svg>
<svg style="left:1227px;top:604px" width="11" height="11" viewBox="0 0 11 11"><path d="M3 2.5 A4.5 4.5 0 1 0 8 2.5" stroke="#3aa0e8" stroke-width="1.7" fill="none"/><path d="M5.5 0 V5" stroke="#3aa0e8" stroke-width="1.7"/></svg>
<div class="t" style="left:1241px;top:603px;font-size:12px;color:#cfd1d4;transform:scaleX(0.633);transform-origin:0 0;">インサート</div>
<svg style="left:1278px;top:607px" width="8" height="5" viewBox="0 0 8 5"><path d="M0 0 H8 L4.0 5Z" fill="#999"/></svg>
<svg style="left:1290px;top:605px" width="10" height="10" viewBox="0 0 10 10"><path d="M5 0.5 V9.5 M0.5 5 H9.5" stroke="#8a8c90" stroke-width="1.8"/></svg>
<div style="left:1223px;top:621px;width:81px;height:20px;background:#4a4d52;"></div>
<svg style="left:1227px;top:626px" width="11" height="11" viewBox="0 0 11 11"><path d="M3 2.5 A4.5 4.5 0 1 0 8 2.5" stroke="#5ab0ee" stroke-width="1.7" fill="none"/><path d="M5.5 0 V5" stroke="#5ab0ee" stroke-width="1.7"/></svg>
<div class="t" style="left:1240px;top:626px;font-size:11px;color:#d4d6d8;transform:scaleX(0.878);transform-origin:0 0;">Ozone Imag..</div>
<svg style="left:1290px;top:629px" width="8" height="5" viewBox="0 0 8 5"><path d="M0 0 H8 L4.0 5Z" fill="#6a6d72"/></svg>
<div style="left:1223px;top:690px;width:81px;height:6px;background:#1b1c1f;"></div>
<div style="left:1223px;top:691px;width:81px;height:3px;background:#2b2d31;"></div>
<div style="left:1223px;top:699px;width:81px;height:310px;background:#2f3135;"></div>
<div style="left:1228px;top:705px;width:71px;height:17px;background:#4b4e53;border-radius:3px 3px 0 0;"></div>
<svg style="left:1230px;top:711px" width="67" height="6" viewBox="0 0 67 6"><rect x="0.0" y="0" width="1.4" height="6" fill="#3aa0e8"/><rect x="3.1" y="0" width="1.4" height="6" fill="#3aa0e8"/><rect x="6.2" y="0" width="1.4" height="6" fill="#3aa0e8"/><rect x="9.3" y="0" width="1.4" height="6" fill="#7a7d82"/><rect x="12.4" y="0" width="1.4" height="6" fill="#7a7d82"/><rect x="15.5" y="0" width="1.4" height="6" fill="#7a7d82"/><rect x="18.6" y="0" width="1.4" height="6" fill="#7a7d82"/><rect x="21.7" y="0" width="1.4" height="6" fill="#7a7d82"/><rect x="24.8" y="0" width="1.4" height="6" fill="#7a7d82"/><rect x="27.9" y="0" width="1.4" height="6" fill="#7a7d82"/><rect x="31.0" y="0" width="1.4" height="6" fill="#7a7d82"/><rect x="34.1" y="0" width="1.4" height="6" fill="#7a7d82"/><rect x="37.2" y="0" width="1.4" height="6" fill="#7a7d82"/><rect x="40.3" y="0" width="1.4" height="6" fill="#7a7d82"/><rect x="43.4" y="0" width="1.4" height="6" fill="#7a7d82"/><rect x="46.5" y="0" width="1.4" height="6" fill="#7a7d82"/><rect x="49.6" y="0" width="1.4" height="6" fill="#7a7d82"/><rect x="52.7" y="0" width="1.4" height="6" fill="#7a7d82"/><rect x="55.8" y="0" width="1.4" height="6" fill="#7a7d82"/><rect x="58.9" y="0" width="1.4" height="6" fill="#7a7d82"/><rect x="62.0" y="0" width="1.4" height="6" fill="#7a7d82"/><rect x="65.1" y="0" width="1.4" height="6" fill="#7a7d82"/></svg>
<div style="left:1228px;top:722px;width:71px;height:17px;background:#42454a;"></div>
<div class="t" style="left:1223.5px;top:725px;font-size:12px;color:#3a9ee8;width:36px;left:1245.5px;transform:scaleX(0.722);transform-origin:50% 0;">メイン</div>
<div style="left:1228px;top:739px;width:71px;height:17px;background:#26282b;"></div>
<div style="left:1262.0px;top:740px;width:3px;height:16px;background:#2a8fe0;"></div>
<div style="left:1228px;top:756px;width:71px;height:16px;background:#36393e;"></div>
<div style="left:1263px;top:758px;width:1px;height:13px;background:#2c2e32;"></div>
<div class="t" style="left:1225.0px;top:759px;font-size:12px;color:#e0e0e0;width:40px;text-align:center;">0dB</div>
<div class="t" style="left:1261.0px;top:759px;font-size:12px;color:#e0e0e0;width:40px;text-align:center;">&lt;C&gt;</div>
<div style="left:1229px;top:779px;width:69px;height:42px;background:#232427;border-radius:3px;"></div>
<div style="left:1230px;top:780px;width:33px;height:19px;background:#3f4247;"></div>
<div style="left:1264px;top:780px;width:33px;height:19px;background:#3f4247;"></div>
<div class="t" style="left:1231.5px;top:783px;font-size:13px;color:#ddd;width:30px;text-align:center;">M</div>
<div class="t" style="left:1265.5px;top:783px;font-size:13px;color:#ddd;width:30px;text-align:center;">S</div>
<div style="left:1264px;top:800px;width:35px;height:22px;background:#2f3135;"></div>
<div style="left:1230px;top:800px;width:33px;height:20px;background:#3f4247;"></div>
<svg style="left:1239px;top:805px" width="16" height="10" viewBox="0 0 16 10"><circle cx="5" cy="5" r="4.3" fill="#ccc"/><circle cx="11" cy="5" r="4" stroke="#ccc" stroke-width="1.6" fill="#3f4247"/></svg>
<svg style="left:1282px;top:829px" width="12" height="11" viewBox="0 0 12 11"><rect y="0" width="12" height="3" fill="#4ab0e8"/><rect y="4" width="12" height="3" fill="#55585d"/><rect y="8" width="12" height="3" fill="#4a4d52"/></svg>
<div style="left:1239px;top:829px;width:13px;height:11px;background:#2e3034;"></div>
<div style="left:1239px;top:840px;width:13px;height:110px;background:#1e1f22;"></div>
<div style="left:1241px;top:843.5px;width:9px;height:1px;background:#1f6a92;"></div>
<div style="left:1241px;top:853.3px;width:9px;height:1px;background:#1f6a92;"></div>
<div style="left:1241px;top:867.4px;width:9px;height:1px;background:#ddd;"></div>
<div style="left:1241px;top:882.4px;width:9px;height:1px;background:#1f6a92;"></div>
<div style="left:1241px;top:894.4px;width:9px;height:1px;background:#1f6a92;"></div>
<div style="left:1241px;top:909.4px;width:9px;height:1px;background:#1f6a92;"></div>
<div style="left:1241px;top:924.4px;width:9px;height:1px;background:#1f6a92;"></div>
<div style="left:1241px;top:934.4px;width:9px;height:1px;background:#1f6a92;"></div>
<div style="left:1241px;top:942.4px;width:9px;height:1px;background:#1f6a92;"></div>
<div class="t" style="left:1217px;top:840px;font-size:8.5px;color:#d8d8d8;letter-spacing:-0.3px;width:20px;text-align:right;">10</div>
<div class="t" style="left:1217px;top:849px;font-size:8.5px;color:#d8d8d8;letter-spacing:-0.3px;width:20px;text-align:right;">6</div>
<div class="t" style="left:1217px;top:863.5px;font-size:8.5px;color:#d8d8d8;letter-spacing:-0.3px;width:20px;text-align:right;">0</div>
<div class="t" style="left:1217px;top:879px;font-size:8.5px;color:#d8d8d8;letter-spacing:-0.3px;width:20px;text-align:right;">-6</div>
<div class="t" style="left:1217px;top:890.5px;font-size:8.5px;color:#d8d8d8;letter-spacing:-0.3px;width:20px;text-align:right;">-12</div>
<div class="t" style="left:1217px;top:905.5px;font-size:8.5px;color:#d8d8d8;letter-spacing:-0.3px;width:20px;text-align:right;">-24</div>
<div class="t" style="left:1217px;top:920.5px;font-size:8.5px;color:#d8d8d8;letter-spacing:-0.3px;width:20px;text-align:right;">-36</div>
<div class="t" style="left:1217px;top:930.5px;font-size:8.5px;color:#d8d8d8;letter-spacing:-0.3px;width:20px;text-align:right;">-48</div>
<div style="left:1256px;top:885px;width:14px;height:65px;background:#6a6d72;"></div>
<div style="left:1257px;top:889px;width:12px;height:1px;background:#85888d;"></div>
<div style="left:1257px;top:903px;width:12px;height:1px;background:#85888d;"></div>
<div style="left:1257px;top:918px;width:12px;height:1px;background:#85888d;"></div>
<div style="left:1257px;top:928px;width:12px;height:1px;background:#85888d;"></div>
<div style="left:1262.5px;top:845px;width:1.6px;height:88px;background:#151618;"></div>
<div style="left:1254px;top:849px;width:18px;height:36px;background:linear-gradient(#5ab8e0,#2a8ab8 30%,#4aa8d4 50%,#2a88b8 80%,#1a6a98);border-radius:2px;box-shadow:0 1px 2px rgba(0,0,0,.7);border:1px solid #1a5a80;"></div>
<div style="left:1255px;top:866px;width:16px;height:1px;background:#1a4a68;"></div>
<svg style="left:1282px;top:931px" width="13" height="13" viewBox="0 0 13 13"><circle cx="6.5" cy="6.5" r="6.3" fill="#b4b6b8"/><path d="M6.5 6.5 L2.5 2.8" stroke="#3a3d42" stroke-width="2"/></svg>
<div class="t" style="left:1235px;top:957px;font-size:13px;color:#e6e6e6;font-weight:bold;">18</div>
<svg style="left:1284px;top:955px" width="14" height="13" viewBox="0 0 14 13"><path d="M1 1 H9 V12 H1 M9 6.5 H14 M1 6.5 H6" stroke="#c8c8c8" stroke-width="1.8" fill="none"/></svg>
<div style="left:1228px;top:973px;width:71px;height:16px;background:#26282b;border-radius:2px;"></div>
<div class="t" style="left:1228.5px;top:976px;font-size:10px;color:#8a8c90;width:55.5625px;left:1235.71875px;transform:scaleX(0.684);transform-origin:50% 0;">オート: オフ</div>
<div style="left:1223px;top:995px;width:81px;height:14px;background:#26282b;"></div>
<div class="t" style="left:1223.0px;top:996px;font-size:12px;color:#f0f0f0;width:81px;text-align:center;">Voice</div>
<div style="left:1306px;top:580px;width:81px;height:110px;background:#2b2d31;"></div>
<div style="left:1306px;top:580px;width:81px;height:20px;background:#1d2b36;"></div>
<div class="t" style="left:1309.0px;top:584px;font-size:12px;color:#ccc;width:58.671875px;left:1314.6640625px;transform:scaleX(0.579);transform-origin:50% 0;">ミックスF:</div>
<svg style="left:1372px;top:587px" width="9" height="6" viewBox="0 0 9 6"><path d="M0 0 H9 L4.5 6Z" fill="#aaa"/></svg>
<svg style="left:1310px;top:604px" width="11" height="11" viewBox="0 0 11 11"><path d="M3 2.5 A4.5 4.5 0 1 0 8 2.5" stroke="#3aa0e8" stroke-width="1.7" fill="none"/><path d="M5.5 0 V5" stroke="#3aa0e8" stroke-width="1.7"/></svg>
<div class="t" style="left:1324px;top:603px;font-size:12px;color:#cfd1d4;transform:scaleX(0.633);transform-origin:0 0;">インサート</div>
<svg style="left:1361px;top:607px" width="8" height="5" viewBox="0 0 8 5"><path d="M0 0 H8 L4.0 5Z" fill="#999"/></svg>
<svg style="left:1373px;top:605px" width="10" height="10" viewBox="0 0 10 10"><path d="M5 0.5 V9.5 M0.5 5 H9.5" stroke="#8a8c90" stroke-width="1.8"/></svg>
<div style="left:1306px;top:621px;width:81px;height:20px;background:#4a4d52;"></div>
<svg style="left:1310px;top:626px" width="11" height="11" viewBox="0 0 11 11"><path d="M3 2.5 A4.5 4.5 0 1 0 8 2.5" stroke="#5ab0ee" stroke-width="1.7" fill="none"/><path d="M5.5 0 V5" stroke="#5ab0ee" stroke-width="1.7"/></svg>
<div class="t" style="left:1323px;top:626px;font-size:11px;color:#d4d6d8;transform:scaleX(0.878);transform-origin:0 0;">Ozone Imag..</div>
<svg style="left:1373px;top:629px" width="8" height="5" viewBox="0 0 8 5"><path d="M0 0 H8 L4.0 5Z" fill="#6a6d72"/></svg>
<div style="left:1306px;top:690px;width:81px;height:6px;background:#1b1c1f;"></div>
<div style="left:1306px;top:691px;width:81px;height:3px;background:#2b2d31;"></div>
<div style="left:1306px;top:699px;width:81px;height:310px;background:#2f3135;"></div>
<div style="left:1311px;top:705px;width:71px;height:17px;background:#4b4e53;border-radius:3px 3px 0 0;"></div>
<svg style="left:1313px;top:711px" width="67" height="6" viewBox="0 0 67 6"><rect x="0.0" y="0" width="1.4" height="6" fill="#3aa0e8"/><rect x="3.1" y="0" width="1.4" height="6" fill="#3aa0e8"/><rect x="6.2" y="0" width="1.4" height="6" fill="#3aa0e8"/><rect x="9.3" y="0" width="1.4" height="6" fill="#3aa0e8"/><rect x="12.4" y="0" width="1.4" height="6" fill="#3aa0e8"/><rect x="15.5" y="0" width="1.4" height="6" fill="#7a7d82"/><rect x="18.6" y="0" width="1.4" height="6" fill="#7a7d82"/><rect x="21.7" y="0" width="1.4" height="6" fill="#7a7d82"/><rect x="24.8" y="0" width="1.4" height="6" fill="#7a7d82"/><rect x="27.9" y="0" width="1.4" height="6" fill="#7a7d82"/><rect x="31.0" y="0" width="1.4" height="6" fill="#7a7d82"/><rect x="34.1" y="0" width="1.4" height="6" fill="#7a7d82"/><rect x="37.2" y="0" width="1.4" height="6" fill="#7a7d82"/><rect x="40.3" y="0" width="1.4" height="6" fill="#7a7d82"/><rect x="43.4" y="0" width="1.4" height="6" fill="#7a7d82"/><rect x="46.5" y="0" width="1.4" height="6" fill="#7a7d82"/><rect x="49.6" y="0" width="1.4" height="6" fill="#7a7d82"/><rect x="52.7" y="0" width="1.4" height="6" fill="#7a7d82"/><rect x="55.8" y="0" width="1.4" height="6" fill="#7a7d82"/><rect x="58.9" y="0" width="1.4" height="6" fill="#7a7d82"/><rect x="62.0" y="0" width="1.4" height="6" fill="#7a7d82"/><rect x="65.1" y="0" width="1.4" height="6" fill="#7a7d82"/></svg>
<div style="left:1311px;top:722px;width:71px;height:17px;background:#42454a;"></div>
<div class="t" style="left:1306.5px;top:725px;font-size:12px;color:#3a9ee8;width:36px;left:1328.5px;transform:scaleX(0.722);transform-origin:50% 0;">メイン</div>
<div style="left:1311px;top:739px;width:71px;height:17px;background:#26282b;"></div>
<div style="left:1345.0px;top:740px;width:3px;height:16px;background:#2a8fe0;"></div>
<div style="left:1311px;top:756px;width:71px;height:16px;background:#36393e;"></div>
<div style="left:1346px;top:758px;width:1px;height:13px;background:#2c2e32;"></div>
<div class="t" style="left:1308.0px;top:759px;font-size:12px;color:#e0e0e0;width:40px;text-align:center;">0dB</div>
<div class="t" style="left:1344.0px;top:759px;font-size:12px;color:#e0e0e0;width:40px;text-align:center;">&lt;C&gt;</div>
<div style="left:1312px;top:779px;width:69px;height:42px;background:#232427;border-radius:3px;"></div>
<div style="left:1313px;top:780px;width:33px;height:19px;background:#3f4247;"></div>
<div style="left:1347px;top:780px;width:33px;height:19px;background:#3f4247;"></div>
<div class="t" style="left:1314.5px;top:783px;font-size:13px;color:#ddd;width:30px;text-align:center;">M</div>
<div class="t" style="left:1348.5px;top:783px;font-size:13px;color:#ddd;width:30px;text-align:center;">S</div>
<div style="left:1347px;top:800px;width:35px;height:22px;background:#2f3135;"></div>
<div style="left:1313px;top:800px;width:33px;height:20px;background:#3f4247;"></div>
<svg style="left:1322px;top:805px" width="16" height="10" viewBox="0 0 16 10"><circle cx="5" cy="5" r="4.3" fill="#ccc"/><circle cx="11" cy="5" r="4" stroke="#ccc" stroke-width="1.6" fill="#3f4247"/></svg>
<svg style="left:1365px;top:829px" width="12" height="11" viewBox="0 0 12 11"><rect y="0" width="12" height="3" fill="#4ab0e8"/><rect y="4" width="12" height="3" fill="#55585d"/><rect y="8" width="12" height="3" fill="#4a4d52"/></svg>
<div style="left:1322px;top:829px;width:13px;height:11px;background:#2e3034;"></div>
<div style="left:1322px;top:840px;width:13px;height:110px;background:#1e1f22;"></div>
<div style="left:1324px;top:843.5px;width:9px;height:1px;background:#1f6a92;"></div>
<div style="left:1324px;top:853.3px;width:9px;height:1px;background:#1f6a92;"></div>
<div style="left:1324px;top:867.4px;width:9px;height:1px;background:#ddd;"></div>
<div style="left:1324px;top:882.4px;width:9px;height:1px;background:#1f6a92;"></div>
<div style="left:1324px;top:894.4px;width:9px;height:1px;background:#1f6a92;"></div>
<div style="left:1324px;top:909.4px;width:9px;height:1px;background:#1f6a92;"></div>
<div style="left:1324px;top:924.4px;width:9px;height:1px;background:#1f6a92;"></div>
<div style="left:1324px;top:934.4px;width:9px;height:1px;background:#1f6a92;"></div>
<div style="left:1324px;top:942.4px;width:9px;height:1px;background:#1f6a92;"></div>
<div class="t" style="left:1300px;top:840px;font-size:8.5px;color:#d8d8d8;letter-spacing:-0.3px;width:20px;text-align:right;">10</div>
<div class="t" style="left:1300px;top:849px;font-size:8.5px;color:#d8d8d8;letter-spacing:-0.3px;width:20px;text-align:right;">6</div>
<div class="t" style="left:1300px;top:863.5px;font-size:8.5px;color:#d8d8d8;letter-spacing:-0.3px;width:20px;text-align:right;">0</div>
<div class="t" style="left:1300px;top:879px;font-size:8.5px;color:#d8d8d8;letter-spacing:-0.3px;width:20px;text-align:right;">-6</div>
<div class="t" style="left:1300px;top:890.5px;font-size:8.5px;color:#d8d8d8;letter-spacing:-0.3px;width:20px;text-align:right;">-12</div>
<div class="t" style="left:1300px;top:905.5px;font-size:8.5px;color:#d8d8d8;letter-spacing:-0.3px;width:20px;text-align:right;">-24</div>
<div class="t" style="left:1300px;top:920.5px;font-size:8.5px;color:#d8d8d8;letter-spacing:-0.3px;width:20px;text-align:right;">-36</div>
<div class="t" style="left:1300px;top:930.5px;font-size:8.5px;color:#d8d8d8;letter-spacing:-0.3px;width:20px;text-align:right;">-48</div>
<div style="left:1339px;top:885px;width:14px;height:65px;background:#6a6d72;"></div>
<div style="left:1340px;top:889px;width:12px;height:1px;background:#85888d;"></div>
<div style="left:1340px;top:903px;width:12px;height:1px;background:#85888d;"></div>
<div style="left:1340px;top:918px;width:12px;height:1px;background:#85888d;"></div>
<div style="left:1340px;top:928px;width:12px;height:1px;background:#85888d;"></div>
<div style="left:1345.5px;top:845px;width:1.6px;height:88px;background:#151618;"></div>
<div style="left:1337px;top:849px;width:18px;height:36px;background:linear-gradient(#5ab8e0,#2a8ab8 30%,#4aa8d4 50%,#2a88b8 80%,#1a6a98);border-radius:2px;box-shadow:0 1px 2px rgba(0,0,0,.7);border:1px solid #1a5a80;"></div>
<div style="left:1338px;top:866px;width:16px;height:1px;background:#1a4a68;"></div>
<svg style="left:1365px;top:931px" width="13" height="13" viewBox="0 0 13 13"><circle cx="6.5" cy="6.5" r="6.3" fill="#b4b6b8"/><path d="M6.5 6.5 L2.5 2.8" stroke="#3a3d42" stroke-width="2"/></svg>
<div class="t" style="left:1318px;top:957px;font-size:13px;color:#e6e6e6;font-weight:bold;">19</div>
<svg style="left:1367px;top:955px" width="14" height="13" viewBox="0 0 14 13"><path d="M1 1 H9 V12 H1 M9 6.5 H14 M1 6.5 H6" stroke="#c8c8c8" stroke-width="1.8" fill="none"/></svg>
<div style="left:1311px;top:973px;width:71px;height:16px;background:#26282b;border-radius:2px;"></div>
<div class="t" style="left:1311.5px;top:976px;font-size:10px;color:#8a8c90;width:55.5625px;left:1318.71875px;transform:scaleX(0.684);transform-origin:50% 0;">オート: オフ</div>
<div style="left:1306px;top:995px;width:81px;height:14px;background:#26282b;"></div>
<div class="t" style="left:1306.0px;top:996px;font-size:12px;color:#f0f0f0;width:81px;text-align:center;">Guitar</div>
<div style="left:1388px;top:577px;width:67px;height:432px;background:#2b2d31;"></div>
<div style="left:1455px;top:577px;width:81px;height:3px;background:#2b2d31;"></div>
<div style="left:1455px;top:580px;width:81px;height:110px;background:#2b2d31;"></div>
<div style="left:1455px;top:580px;width:81px;height:20px;background:#1d2b36;"></div>
<div class="t" style="left:1458.0px;top:584px;font-size:12px;color:#ccc;width:58.671875px;left:1463.6640625px;transform:scaleX(0.579);transform-origin:50% 0;">ミックスF:</div>
<svg style="left:1521px;top:587px" width="9" height="6" viewBox="0 0 9 6"><path d="M0 0 H9 L4.5 6Z" fill="#aaa"/></svg>
<svg style="left:1459px;top:604px" width="11" height="11" viewBox="0 0 11 11"><path d="M3 2.5 A4.5 4.5 0 1 0 8 2.5" stroke="#3aa0e8" stroke-width="1.7" fill="none"/><path d="M5.5 0 V5" stroke="#3aa0e8" stroke-width="1.7"/></svg>
<div class="t" style="left:1473px;top:603px;font-size:12px;color:#cfd1d4;transform:scaleX(0.567);transform-origin:0 0;">インサート</div>
<svg style="left:1508px;top:607px" width="8" height="5" viewBox="0 0 8 5"><path d="M0 0 H8 L4.0 5Z" fill="#999"/></svg>
<svg style="left:1522px;top:605px" width="10" height="10" viewBox="0 0 10 10"><path d="M5 0.5 V9.5 M0.5 5 H9.5" stroke="#8a8c90" stroke-width="1.8"/></svg>
<div style="left:1455px;top:620px;width:74px;height:20px;background:#4a4d52;"></div>
<div style="left:1531px;top:622px;width:4px;height:8px;background:#6a6d72;"></div>
<svg style="left:1459px;top:624px" width="11" height="11" viewBox="0 0 11 11"><path d="M3 2.5 A4.5 4.5 0 1 0 8 2.5" stroke="#3aa0e8" stroke-width="1.7" fill="none"/><path d="M5.5 0 V5" stroke="#3aa0e8" stroke-width="1.7"/></svg>
<div class="t" style="left:1472px;top:624px;font-size:11px;color:#cfd1d4;transform:scaleX(0.834);transform-origin:0 0;">Ozone Ima..</div>
<svg style="left:1459px;top:643px" width="11" height="11" viewBox="0 0 11 11"><path d="M3 2.5 A4.5 4.5 0 1 0 8 2.5" stroke="#777" stroke-width="1.7" fill="none"/><path d="M5.5 0 V5" stroke="#777" stroke-width="1.7"/></svg>
<div class="t" style="left:1472px;top:642px;font-size:12px;color:#cfd1d4;transform:scaleX(0.611);transform-origin:0 0;">ポスト</div>
<svg style="left:1512px;top:646px" width="8" height="5" viewBox="0 0 8 5"><path d="M0 0 H8 L4.0 5Z" fill="#999"/></svg>
<svg style="left:1522px;top:644px" width="10" height="10" viewBox="0 0 10 10"><path d="M5 0.5 V9.5 M0.5 5 H9.5" stroke="#8a8c90" stroke-width="1.8"/></svg>
<div style="left:1455px;top:690px;width:81px;height:6px;background:#1b1c1f;"></div>
<div style="left:1455px;top:696px;width:81px;height:313px;background:#33363a;"></div>
<div style="left:1460px;top:705px;width:71px;height:17px;background:#3a3d42;"></div>
<div style="left:1460px;top:722px;width:71px;height:17px;background:#42454a;"></div>
<div class="t" style="left:1455.5px;top:725px;font-size:12px;color:#e0e0e0;width:80px;text-align:center;">Mbox2 .. + 2</div>
<div style="left:1460px;top:739px;width:71px;height:17px;background:#2f3135;"></div>
<div style="left:1495px;top:740px;width:1px;height:15px;background:#26282b;"></div>
<div class="t" style="left:1462.0px;top:744px;font-size:9px;color:#3a9ee8;width:30px;text-align:center;">-∞</div>
<div class="t" style="left:1498.0px;top:744px;font-size:9px;color:#3a9ee8;width:30px;text-align:center;">-∞</div>
<div style="left:1460px;top:756px;width:71px;height:16px;background:#36393e;"></div>
<div class="t" style="left:1457.0px;top:759px;font-size:12px;color:#e0e0e0;width:40px;text-align:center;">0dB</div>
<div class="t" style="left:1493.0px;top:759px;font-size:12px;color:#888;width:40px;text-align:center;">0</div>
<div style="left:1461px;top:779px;width:69px;height:42px;background:#232427;border-radius:3px;"></div>
<div style="left:1462px;top:780px;width:33px;height:19px;background:#3f4247;"></div>
<div style="left:1496px;top:780px;width:33px;height:19px;background:#3f4247;"></div>
<div class="t" style="left:1463.5px;top:783px;font-size:13px;color:#ddd;width:30px;text-align:center;">M</div>
<div class="t" style="left:1497.5px;top:783px;font-size:13px;color:#ddd;width:30px;text-align:center;">S</div>
<div style="left:1462px;top:800px;width:24px;height:20px;background:#4a9ac8;"></div>
<svg style="left:1467px;top:803px" width="14" height="13" viewBox="0 0 14 13"><path d="M1 12 L7 1 L13 12Z" fill="#eee"/><path d="M4 12 L8 6" stroke="#4a9ac8" stroke-width="1.5"/></svg>
<div style="left:1487px;top:800px;width:18px;height:20px;background:#3f4247;"></div>
<svg style="left:1492px;top:803px" width="8" height="13" viewBox="0 0 8 13"><rect x="2" y="0" width="4" height="8" rx="2" fill="#ccc"/><path d="M4 8 V13 M1 6 Q4 10 7 6" stroke="#ccc" stroke-width="1" fill="none"/></svg>
<div style="left:1506px;top:800px;width:23px;height:20px;background:#3f4247;"></div>
<svg style="left:1509px;top:805px" width="16" height="10" viewBox="0 0 16 10"><circle cx="5" cy="5" r="4.3" fill="#ccc"/><circle cx="11" cy="5" r="4" stroke="#ccc" stroke-width="1.6" fill="#3f4247"/></svg>
<svg style="left:1466px;top:829px" width="12" height="11" viewBox="0 0 12 11"><rect y="0" width="12" height="3" fill="#4ab0e8"/><rect y="4" width="12" height="3" fill="#55585d"/><rect y="8" width="12" height="3" fill="#4a4d52"/></svg>
<div style="left:1488px;top:885px;width:14px;height:65px;background:#6a6d72;"></div>
<div style="left:1494.5px;top:845px;width:1.6px;height:88px;background:#151618;"></div>
<div style="left:1486px;top:849px;width:18px;height:36px;background:linear-gradient(#5ab8e0,#2a8ab8 30%,#4aa8d4 50%,#2a88b8 80%,#1a6a98);border-radius:2px;border:1px solid #1a5a80;"></div>
<div style="left:1487px;top:866px;width:16px;height:1px;background:#1a4a68;"></div>
<div style="left:1508px;top:840px;width:13px;height:110px;background:#1e1f22;"></div>
<div style="left:1510px;top:843px;width:9px;height:1px;background:#1f6a92;"></div>
<div style="left:1510px;top:851px;width:9px;height:1px;background:#1f6a92;"></div>
<div style="left:1510px;top:864px;width:9px;height:1px;background:#1f6a92;"></div>
<div style="left:1510px;top:870px;width:9px;height:1px;background:#1f6a92;"></div>
<div style="left:1510px;top:889px;width:9px;height:1px;background:#1f6a92;"></div>
<div style="left:1510px;top:905px;width:9px;height:1px;background:#1f6a92;"></div>
<div style="left:1510px;top:917px;width:9px;height:1px;background:#1f6a92;"></div>
<div style="left:1510px;top:926px;width:9px;height:1px;background:#1f6a92;"></div>
<div style="left:1510px;top:940px;width:9px;height:1px;background:#1f6a92;"></div>
<div style="left:1510px;top:851px;width:9px;height:1px;background:#ddd;"></div>
<div class="t" style="left:1515px;top:840px;font-size:8.5px;color:#d8d8d8;width:20px;text-align:right;">6</div>
<div class="t" style="left:1515px;top:852px;font-size:8.5px;color:#d8d8d8;width:20px;text-align:right;">-3</div>
<div class="t" style="left:1515px;top:863px;font-size:8.5px;color:#d8d8d8;width:20px;text-align:right;">-9</div>
<div class="t" style="left:1515px;top:887px;font-size:8.5px;color:#d8d8d8;width:20px;text-align:right;">-24</div>
<div class="t" style="left:1515px;top:905px;font-size:8.5px;color:#d8d8d8;width:20px;text-align:right;">-36</div>
<div class="t" style="left:1515px;top:921px;font-size:8.5px;color:#d8d8d8;width:20px;text-align:right;">-48</div>
<div class="t" style="left:1515px;top:941px;font-size:8.5px;color:#d8d8d8;width:20px;text-align:right;">-60</div>
<svg style="left:1466px;top:931px" width="13" height="13" viewBox="0 0 13 13"><circle cx="6.5" cy="6.5" r="6.3" fill="#b4b6b8"/><path d="M6.5 6.5 L2.5 2.8" stroke="#3a3d42" stroke-width="2"/></svg>
<svg style="left:1489px;top:955px" width="14" height="13" viewBox="0 0 14 13"><path d="M1 5 L6 1 H11 L4 8 H13 L8 12 H1" stroke="#c8c8c8" stroke-width="1.4" fill="none"/></svg>
<div style="left:1460px;top:973px;width:71px;height:16px;background:#26282b;border-radius:2px;"></div>
<div class="t" style="left:1460.5px;top:976px;font-size:10px;color:#8a8c90;width:55.5625px;left:1467.71875px;transform:scaleX(0.684);transform-origin:50% 0;">オート: オフ</div>
<div style="left:1455px;top:995px;width:81px;height:14px;background:#26282b;"></div>
<div class="t" style="left:1455.0px;top:996px;font-size:12px;color:#f0f0f0;width:36px;left:1477.5px;transform:scaleX(0.722);transform-origin:50% 0;">メイン</div>
<div style="left:61px;top:1009px;width:1476px;height:18px;background:#26282b;"></div>
<div style="left:1455px;top:1009px;width:1px;height:18px;background:#1b1c1f;"></div>
<svg style="left:67px;top:1014px" width="7" height="10" viewBox="0 0 7 10"><path d="M7 0 V10 L0 5Z" fill="#666"/></svg>
<svg style="left:1439px;top:1014px" width="7" height="10" viewBox="0 0 7 10"><path d="M0 0 V10 L7 5Z" fill="#666"/></svg>
<div style="left:0px;top:1027px;width:1920px;height:53px;background:#1b1c1f;"></div>
<div style="left:0px;top:1031px;width:1920px;height:41px;background:#141517;"></div>
<svg style="left:0px;top:1031px" width="152" height="41" viewBox="0 0 152 41"><path d="M0 0 H141 L151 41 H0Z" fill="#5d6269"/></svg>
<svg style="left:1592px;top:1031px" width="328" height="41" viewBox="0 0 328 41"><path d="M14 0 H328 V41 H0Z" fill="#5d6269"/></svg>
<div style="left:0px;top:1072px;width:1920px;height:3px;background:#5d6269;"></div>
<div style="left:0px;top:1075px;width:1920px;height:5px;background:#2b2d31;"></div>
<svg style="left:172px;top:1040px" width="6" height="8" viewBox="0 0 6 8"><path d="M0 0 L5 4 L0 8Z" fill="#777"/></svg>
<svg style="left:177px;top:1036px" width="17" height="17" viewBox="0 0 17 17"><circle cx="8.5" cy="8.5" r="7.5" stroke="#999" stroke-width="1.2" fill="none"/><g fill="#999"><circle cx="4.5" cy="8" r="1"/><circle cx="12.5" cy="8" r="1"/><circle cx="8.5" cy="4.5" r="1"/><circle cx="6" cy="5.5" r="1"/><circle cx="11" cy="5.5" r="1"/></g></svg>
<svg style="left:195px;top:1040px" width="6" height="8" viewBox="0 0 6 8"><path d="M0 0 L5 4 L0 8Z" fill="#777"/></svg>
<div class="t" style="left:165.0px;top:1057px;font-size:10px;color:#aaa;width:40px;text-align:center;">MIDI</div>
<div style="left:209px;top:1039px;width:65px;height:5px;background:#2e3034;"></div>
<div style="left:269px;top:1039px;width:5px;height:5px;background:#222;"></div>
<div style="left:209px;top:1046px;width:65px;height:5px;background:#2e3034;"></div>
<div style="left:269px;top:1046px;width:5px;height:5px;background:#222;"></div>
<div class="t" style="left:202.0px;top:1057px;font-size:11px;color:#aaa;width:77px;left:203.5px;transform:scaleX(0.675);transform-origin:50% 0;">パフォーマンス</div>
<svg style="left:290px;top:1040px" width="24" height="24" viewBox="0 0 24 24"><circle cx="22.00" cy="12.00" r="1.5" fill="#ccc"/><circle cx="20.09" cy="17.88" r="1.5" fill="#ccc"/><circle cx="15.09" cy="21.51" r="1.5" fill="#ccc"/><circle cx="8.91" cy="21.51" r="1.5" fill="#ccc"/><circle cx="3.91" cy="17.88" r="1.5" fill="#ccc"/><circle cx="2.00" cy="12.00" r="1.5" fill="#ccc"/><circle cx="3.91" cy="6.12" r="1.5" fill="#ccc"/><circle cx="8.91" cy="2.49" r="1.5" fill="#ccc"/><circle cx="15.09" cy="2.49" r="1.5" fill="#ccc"/><circle cx="20.09" cy="6.12" r="1.5" fill="#ccc"/></svg>
<div class="t" style="left:327px;top:1039px;font-size:13px;color:#e0e0e0;">48.0 kHz</div>
<div class="t" style="left:327px;top:1055px;font-size:12px;color:#e0e0e0;">1.7 ms</div>
<div class="t" style="left:395px;top:1039px;font-size:13px;color:#e0e0e0;transform:scaleX(0.936);transform-origin:0 0;">19:03 日</div>
<div class="t" style="left:395px;top:1056px;font-size:11px;color:#8a8c90;transform:scaleX(0.924);transform-origin:0 0;">最大録音時間</div>
<div class="t" style="left:487px;top:1039px;font-size:13px;color:#e0e0e0;transform:scaleX(0.988);transform-origin:0 0;">00:00:00.000</div>
<div class="t" style="left:509.0px;top:1056px;font-size:11px;color:#8a8c90;width:20px;text-align:center;">秒</div>
<div class="t" style="left:593px;top:1037px;font-size:19px;color:#f0f0f0;font-weight:bold;transform:scaleX(1.007);transform-origin:0 0;">00001.01.01.00</div>
<div class="t" style="left:660px;top:1057px;font-size:11px;color:#8a8c90;transform:scaleX(0.909);transform-origin:0 0;">小節</div>
<svg style="left:681px;top:1061px" width="7" height="5" viewBox="0 0 7 5"><path d="M0 0 H7 L3.5 5Z" fill="#8a8c90"/></svg>
<svg style="left:746px;top:1043px" width="10" height="14" viewBox="0 0 10 14"><path d="M10 0 V14 L0 7Z" fill="#c8c8c8"/></svg>
<svg style="left:768px;top:1043px" width="18" height="14" viewBox="0 0 18 14"><path d="M9 0 V14 L0 7Z M18 0 V14 L9 7Z" fill="#c8c8c8"/></svg>
<svg style="left:799px;top:1043px" width="18" height="14" viewBox="0 0 18 14"><path d="M0 0 V14 L9 7Z M9 0 V14 L18 7Z" fill="#c8c8c8"/></svg>
<svg style="left:826px;top:1043px" width="10" height="14" viewBox="0 0 10 14"><path d="M0 0 V14 L10 7Z" fill="#c8c8c8"/></svg>
<svg style="left:851px;top:1043px" width="13" height="14" viewBox="0 0 13 14"><rect x="0" y="0" width="1.8" height="14" fill="#c8c8c8"/><path d="M13 0 V14 L3 7Z" fill="#c8c8c8"/></svg>
<div style="left:884px;top:1042px;width:20px;height:20px;background:#29a8e0;"></div>
<svg style="left:921px;top:1041px" width="18" height="22" viewBox="0 0 18 22"><path d="M0 0 V22 L18 11Z" fill="#c8c8c8"/></svg>
<svg style="left:954px;top:1042px" width="20" height="20" viewBox="0 0 20 20"><circle cx="10" cy="10" r="10" fill="#c8c8c8"/></svg>
<svg style="left:989px;top:1042px" width="34" height="21" viewBox="0 0 34 21"><path d="M12 19 H8 Q2 19 2 10.5 Q2 2 10 2 H24 Q32 2 32 10.5 Q32 19 24 19 H20 L16 12" stroke="#3aaee0" stroke-width="2.6" fill="none"/><path d="M12 19 L18 19" stroke="#3aaee0" stroke-width="2.6"/></svg>
<div class="t" style="left:1041px;top:1039px;font-size:12px;color:#6a7a8a;font-weight:bold;">L</div>
<div class="t" style="left:1041px;top:1054px;font-size:12px;color:#6a7a8a;font-weight:bold;">R</div>
<div class="t" style="left:1056px;top:1039px;font-size:13px;color:#e0e0e0;transform:scaleX(0.985);transform-origin:0 0;">00001.01.01.00</div>
<div class="t" style="left:1056px;top:1054px;font-size:13px;color:#e0e0e0;transform:scaleX(0.985);transform-origin:0 0;">00303.01.01.00</div>
<div class="t" style="left:1164.0px;top:1038px;font-size:15px;color:#e0e0e0;width:30px;left:1169.0px;transform:scaleX(0.800);transform-origin:50% 0;">オフ</div>
<div class="t" style="left:1164.0px;top:1056px;font-size:11px;color:#8a8c90;width:22px;left:1173.0px;transform:scaleX(1.000);transform-origin:50% 0;">同期</div>
<svg style="left:1211px;top:1041px" width="17" height="6" viewBox="0 0 17 6"><path d="M0 3 H5 L8 1 L11 4 H17" stroke="#aaa" stroke-width="1.2" fill="none"/></svg>
<svg style="left:1239px;top:1039px" width="15" height="10" viewBox="0 0 15 10"><path d="M1 0 V10 M5 5 H14" stroke="#aaa" stroke-width="1.4"/><rect x="8" y="2" width="6" height="6" fill="#aaa"/></svg>
<svg style="left:1213px;top:1053px" width="12" height="12" viewBox="0 0 12 12"><circle cx="6" cy="6" r="3.5" stroke="#aaa" stroke-width="2.5" fill="none" stroke-dasharray="2 1"/></svg>
<svg style="left:1237px;top:1054px" width="17" height="10" viewBox="0 0 17 10"><path d="M0 5 H17" stroke="#aaa" stroke-width="1" stroke-dasharray="1.5 1"/><rect x="4" y="1" width="9" height="8" fill="#aaa"/></svg>
<svg style="left:1267px;top:1039px" width="11" height="11" viewBox="0 0 11 11"><circle cx="5.5" cy="5.5" r="5" fill="#aaa"/></svg>
<svg style="left:1287px;top:1038px" width="13" height="12" viewBox="0 0 13 12"><path d="M1.2 3.2 A3.6 3.6 0 0 0 6.2 7.4 L10.3 11.5 Q11.3 12.3 12 11.5 Q12.6 10.7 11.8 9.9 L7.7 5.8 A3.6 3.6 0 0 0 3.4 1 L5.4 3 L4.9 4.7 L3.2 5.2 Z" fill="#aaa" transform="scale(0.923)"/></svg>
<svg style="left:1309px;top:1038px" width="13" height="12" viewBox="0 0 13 12"><path d="M0.5 11.5 L6.5 0.5 L12.5 11.5Z" fill="#aaa"/><path d="M3 11.5 L9 4" stroke="#141517" stroke-width="1.4"/></svg>
<div class="t" style="left:1258.0px;top:1056px;font-size:11px;color:#8a8c90;width:66px;left:1260.0px;transform:scaleX(0.667);transform-origin:50% 0;">メトロノーム</div>
<div class="t" style="left:1335.0px;top:1039px;font-size:13px;color:#e0e0e0;width:40px;text-align:center;">4 / 4</div>
<div class="t" style="left:1335.0px;top:1056px;font-size:11px;color:#8a8c90;width:22px;left:1344.0px;transform:scaleX(1.000);transform-origin:50% 0;">拍子</div>
<div class="t" style="left:1380.0px;top:1039px;font-size:13px;color:#e0e0e0;width:40px;text-align:center;">Em</div>
<div class="t" style="left:1380.0px;top:1056px;font-size:11px;color:#8a8c90;width:22px;left:1389.0px;transform:scaleX(0.818);transform-origin:50% 0;">キー</div>
<div class="t" style="left:1416.0px;top:1039px;font-size:13px;color:#e0e0e0;width:60px;text-align:center;">240.00</div>
<div class="t" style="left:1426.0px;top:1056px;font-size:11px;color:#8a8c90;width:33px;left:1429.5px;transform:scaleX(0.727);transform-origin:50% 0;">テンポ</div>
<div style="left:1483px;top:1039px;width:67px;height:4px;background:#2e3034;"></div>
<div style="left:1483px;top:1044px;width:67px;height:4px;background:#2e3034;"></div>
<div style="left:1552px;top:1039px;width:15px;height:9px;background:#1e1f22;"></div>
<svg style="left:1483px;top:1054px" width="68" height="10" viewBox="0 0 68 10"><rect x="0.00" y="0" width="1.1" height="10" fill="#3aaee0"/><rect x="1.95" y="0" width="1.1" height="10" fill="#3aaee0"/><rect x="3.90" y="0" width="1.1" height="10" fill="#3aaee0"/><rect x="5.85" y="0" width="1.1" height="10" fill="#3aaee0"/><rect x="7.80" y="0" width="1.1" height="10" fill="#3aaee0"/><rect x="9.75" y="0" width="1.1" height="10" fill="#3aaee0"/><rect x="11.70" y="0" width="1.1" height="10" fill="#3aaee0"/><rect x="13.65" y="0" width="1.1" height="10" fill="#3aaee0"/><rect x="15.60" y="0" width="1.1" height="10" fill="#3aaee0"/><rect x="17.55" y="0" width="1.1" height="10" fill="#3aaee0"/><rect x="19.50" y="0" width="1.1" height="10" fill="#3aaee0"/><rect x="21.45" y="0" width="1.1" height="10" fill="#3aaee0"/><rect x="23.40" y="0" width="1.1" height="10" fill="#3aaee0"/><rect x="25.35" y="0" width="1.1" height="10" fill="#3aaee0"/><rect x="27.30" y="0" width="1.1" height="10" fill="#3aaee0"/><rect x="29.25" y="0" width="1.1" height="10" fill="#3aaee0"/><rect x="31.20" y="0" width="1.1" height="10" fill="#3aaee0"/><rect x="33.15" y="0" width="1.1" height="10" fill="#3aaee0"/><rect x="35.10" y="0" width="1.1" height="10" fill="#3aaee0"/><rect x="37.05" y="0" width="1.1" height="10" fill="#3aaee0"/><rect x="39.00" y="0" width="1.1" height="10" fill="#3aaee0"/><rect x="40.95" y="0" width="1.1" height="10" fill="#3aaee0"/><rect x="42.90" y="0" width="1.1" height="10" fill="#3aaee0"/><rect x="44.85" y="0" width="1.1" height="10" fill="#3aaee0"/><rect x="46.80" y="0" width="1.1" height="10" fill="#3aaee0"/><rect x="48.75" y="0" width="1.1" height="10" fill="#3aaee0"/><rect x="50.70" y="0" width="1.1" height="10" fill="#3aaee0"/><rect x="52.65" y="0" width="1.1" height="10" fill="#555"/><rect x="54.60" y="0" width="1.1" height="10" fill="#555"/><rect x="56.55" y="0" width="1.1" height="10" fill="#555"/><rect x="58.50" y="0" width="1.1" height="10" fill="#555"/><rect x="60.45" y="0" width="1.1" height="10" fill="#555"/><rect x="62.40" y="0" width="1.1" height="10" fill="#555"/><rect x="64.35" y="0" width="1.1" height="10" fill="#555"/><rect x="66.30" y="0" width="1.1" height="10" fill="#555"/></svg>
<svg style="left:1558px;top:1055px" width="18" height="10" viewBox="0 0 18 10"><circle cx="5" cy="5" r="4.8" fill="#3aaee0"/><circle cx="12.5" cy="5" r="4" stroke="#3aaee0" stroke-width="1.8" fill="#141517"/></svg>
<div style="left:1742px;top:1031px;width:1px;height:44px;background:#45484e;"></div>
<div class="t" style="left:1745.0px;top:1046px;font-size:12px;color:#e0e0e0;width:24px;left:1758.0px;transform:scaleX(0.958);transform-origin:50% 0;">編集</div>
<div style="left:1799px;top:1031px;width:121px;height:44px;background:#3a96d8;"></div>
<div style="left:1854px;top:1031px;width:1px;height:44px;background:#2a6a9a;"></div>
<div class="t" style="left:1799.0px;top:1046px;font-size:12px;color:#f4f4f4;width:48px;left:1802.0px;transform:scaleX(0.688);transform-origin:50% 0;">ミックス</div>
<div class="t" style="left:1857.0px;top:1046px;font-size:12px;color:#f4f4f4;width:48px;left:1863.0px;transform:scaleX(0.729);transform-origin:50% 0;">ブラウズ</div>
</body></html>
